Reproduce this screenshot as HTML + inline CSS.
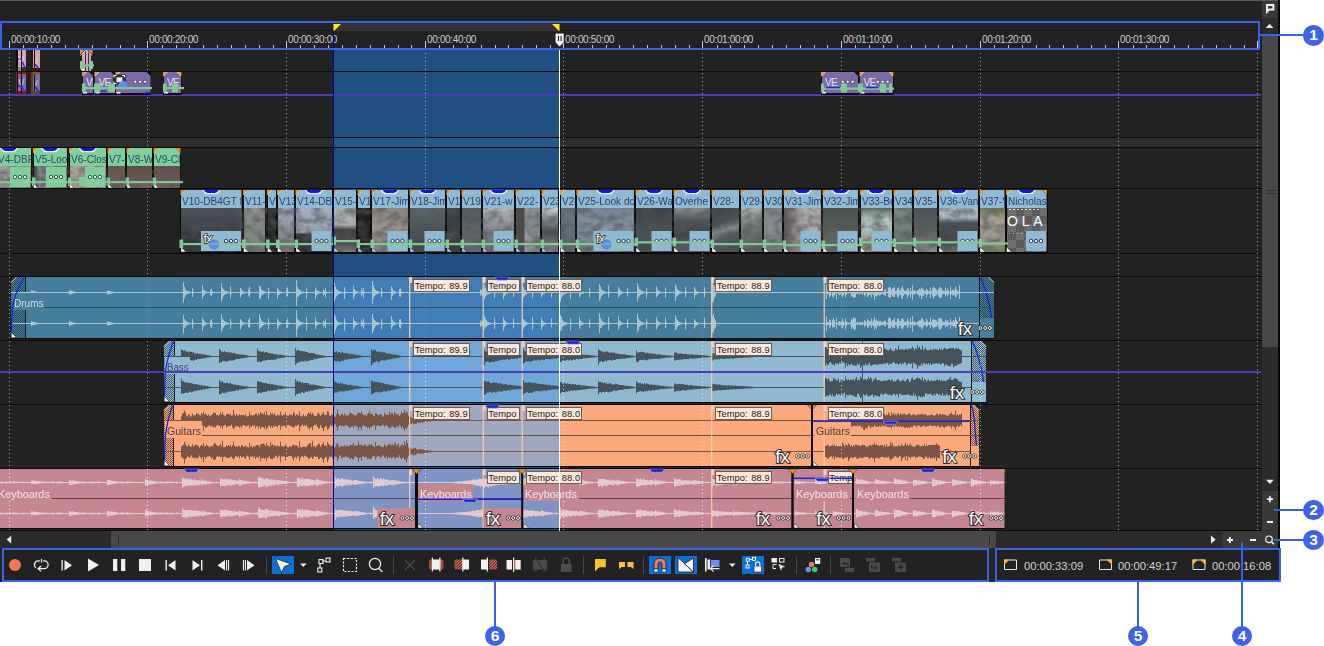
<!DOCTYPE html>
<html lang="en"><head><meta charset="utf-8"><title>Timeline</title><style>
html,body{margin:0;padding:0;background:#ffffff;}
body{width:1324px;height:646px;position:relative;overflow:hidden;font-family:"Liberation Sans",sans-serif;}
#tl{position:absolute;left:0;top:0;width:1261.5px;height:582px;overflow:hidden;}
.rl{position:absolute;font-size:10px;line-height:12px;color:#cdcdcd;white-space:nowrap;letter-spacing:-0.34px;}
.gl{position:absolute;top:49px;width:1px;height:482px;background:repeating-linear-gradient(180deg,rgba(255,255,255,.62) 0,rgba(255,255,255,.62) 1px,transparent 1px,transparent 4px);}
.vh{position:absolute;font-size:11px;line-height:22.6px;white-space:nowrap;overflow:hidden;box-sizing:border-box;padding:0 0 0 1.3px;}
.ph{position:absolute;background:#7a6ba7;color:#e6e0f4;font-size:10px;line-height:21px;letter-spacing:-0.6px;white-space:nowrap;overflow:hidden;box-sizing:border-box;padding:0 0 0 3.5px;}
.tp{position:absolute;top:0;height:11px;box-sizing:content-box;border:1px solid #6e5a50;background:#fbe8dc;color:#1c1c1c;font-size:9.3px;line-height:12.6px;white-space:nowrap;overflow:hidden;padding:0 0 0 0.7px;word-spacing:0.8px;letter-spacing:0.1px;}
.al{position:absolute;height:17px;font-size:11px;line-height:20.4px;white-space:nowrap;overflow:hidden;padding-left:1.5px;box-sizing:border-box;}
.sx{display:inline-block;transform-origin:0 50%;}
.tm{position:absolute;font-size:11.2px;line-height:14px;color:#d4d4d4;white-space:nowrap;}
.an{position:absolute;width:20.6px;height:20.6px;border-radius:50%;background:#3d63ec;color:#fff;font-weight:bold;font-size:15.5px;line-height:20.6px;text-align:center;}
</style></head><body>
<div style="position:absolute;left:0px;top:0px;width:1280px;height:582px;background:#222222;"></div>
<div style="position:absolute;left:0px;top:0px;width:1280px;height:1px;background:#5a5a5a;"></div>
<div style="position:absolute;left:0px;top:138px;width:1261px;height:9px;background:#2d2d2d;"></div>
<div style="position:absolute;left:334px;top:50px;width:225px;height:480px;background:#1f5081;"></div>
<div style="position:absolute;left:334px;top:138px;width:225px;height:9px;background:#245988;"></div>
<div style="position:absolute;left:1px;top:71px;width:1260px;height:1px;background:#0a0a0a;"></div>
<div style="position:absolute;left:1px;top:137px;width:1260px;height:1px;background:#0a0a0a;"></div>
<div style="position:absolute;left:1px;top:147px;width:1260px;height:1px;background:#0a0a0a;"></div>
<div style="position:absolute;left:1px;top:188px;width:1260px;height:1px;background:#0a0a0a;"></div>
<div style="position:absolute;left:1px;top:253px;width:1260px;height:1px;background:#0a0a0a;"></div>
<div style="position:absolute;left:1px;top:276px;width:1260px;height:1px;background:#0a0a0a;"></div>
<div style="position:absolute;left:1px;top:340px;width:1260px;height:1px;background:#0a0a0a;"></div>
<div style="position:absolute;left:1px;top:404px;width:1260px;height:1px;background:#0a0a0a;"></div>
<div style="position:absolute;left:1px;top:468px;width:1260px;height:1px;background:#0a0a0a;"></div>
<div style="position:absolute;left:1px;top:530px;width:1260px;height:1px;background:#0a0a0a;"></div>
<div style="position:absolute;left:0px;top:94px;width:1261px;height:2px;background:#4a3eb6;"></div>
<div id="tl"><div class="gl" style="left:9px;top:49px;height:482px"></div>
<div class="gl" style="left:147px;top:49px;height:482px"></div>
<div class="gl" style="left:286px;top:49px;height:482px"></div>
<div class="gl" style="left:425px;top:49px;height:482px"></div>
<div class="gl" style="left:563px;top:49px;height:482px"></div>
<div class="gl" style="left:702px;top:49px;height:482px"></div>
<div class="gl" style="left:841px;top:49px;height:482px"></div>
<div class="gl" style="left:980px;top:49px;height:482px"></div>
<div class="gl" style="left:1118px;top:49px;height:482px"></div>
<div class="gl" style="left:1257px;top:49px;height:482px"></div>
<div style="position:absolute;left:16px;top:50px;width:9.5px;height:20.5px;background:linear-gradient(90deg,#0a0a0a 0,#0a0a0a 1.6px,#3a3a3a 1.6px,#3a3a3a 2px,#d9a0ae 2px,#d9a0ae 5px,#0c0c0c 5px,#0c0c0c 6px,#d9a0ae 6px);"></div>
<div style="position:absolute;left:16px;top:67px;width:9.5px;height:3.5px;background:linear-gradient(90deg,#0a0a0a 0,#0a0a0a 2px,#8a8a8a 2px,#8a8a8a 5px,#0c0c0c 5px,#0c0c0c 6px,#3a3030 6px);"></div>
<div style="position:absolute;left:31px;top:50px;width:8.5px;height:20.5px;background:linear-gradient(90deg,#3a0c0e 0,#3a0c0e 1.6px,#d9a0ae 2px,#d9a0ae 3px,#0c0c0c 3px,#0c0c0c 4px,#d9a0ae 4px);"></div>
<div style="position:absolute;left:31px;top:67.5px;width:8.5px;height:3px;background:#3a1214;"></div>
<div style="position:absolute;left:80.5px;top:50px;width:11.5px;height:21px;background:linear-gradient(90deg,#1a1a1a 0,#1a1a1a 1px,#d9a0ae 1px,#d9a0ae 4px,#3a3034 4px,#3a3034 5px,#c4aec2 5px,#c4aec2 7px,#3a3034 7px,#3a3034 8px,#d9a0ae 8px,#d9a0ae 10.5px,#1a1a1a 10.5px);"></div>
<div style="position:absolute;left:16px;top:72px;width:9.5px;height:22px;background:linear-gradient(90deg,#9a1216 0,#9a1216 1.2px,#1a0a0a 1.2px,#1a0a0a 2px,#7a6ba7 2px,#7a6ba7 5px,#0c0c0c 5px,#0c0c0c 6px,#7a6ba7 6px);"></div>
<div style="position:absolute;left:18px;top:72px;width:7.5px;height:2px;background:linear-gradient(90deg,#8a1014 0,#8a1014 3px,#0c0c0c 3px,#0c0c0c 4px,#a01216 4px);"></div>
<div style="position:absolute;left:18px;top:90.5px;width:7.5px;height:3.5px;background:linear-gradient(90deg,#8a1014 0,#8a1014 3px,#0c0c0c 3px,#0c0c0c 4px,#a01216 4px);"></div>
<div style="position:absolute;left:31px;top:72px;width:8.5px;height:22px;background:linear-gradient(90deg,#6a4210 0,#6a4210 1.6px,#1a1208 1.6px,#1a1208 2px,#7a6ba7 2px,#7a6ba7 3px,#0c0c0c 3px,#0c0c0c 4px,#7a6ba7 4px);"></div>
<div style="position:absolute;left:33px;top:72px;width:6.5px;height:2px;background:#8a5a14;"></div>
<div style="position:absolute;left:33px;top:91px;width:6.5px;height:3px;background:#6a4210;"></div>
<div style="position:absolute;left:82px;top:72px;width:11.5px;height:22.5px;background:#1a0c0e;"></div>
<div class="ph" style="left:82.5px;top:72px;width:10.5px;height:21px;clip-path:polygon(4px 0,calc(100% - 4px) 0,100% 4px,100% 100%,0 100%,0 4px)">VE</div>
<div style="position:absolute;left:94.5px;top:72px;width:21px;height:22.5px;background:#1a0c0e;"></div>
<div class="ph" style="left:95px;top:72px;width:20px;height:21px;clip-path:polygon(4px 0,calc(100% - 4px) 0,100% 4px,100% 100%,0 100%,0 4px)">VE</div>
<div style="position:absolute;left:115.5px;top:72px;width:35.5px;height:22.5px;background:#1a0c0e;"></div>
<div class="ph" style="left:116px;top:72px;width:34.5px;height:21px;clip-path:polygon(4px 0,calc(100% - 4px) 0,100% 4px,100% 100%,0 100%,0 4px)"></div>
<div style="position:absolute;left:163px;top:72px;width:18.5px;height:22.5px;background:#1a0c0e;"></div>
<div class="ph" style="left:163.5px;top:72px;width:17.5px;height:21px;clip-path:polygon(4px 0,calc(100% - 4px) 0,100% 4px,100% 100%,0 100%,0 4px)">VE</div>
<div style="position:absolute;left:821px;top:72px;width:37.5px;height:22.5px;background:#1a0c0e;"></div>
<div class="ph" style="left:821.5px;top:72px;width:36.5px;height:21px;clip-path:polygon(4px 0,calc(100% - 4px) 0,100% 4px,100% 100%,0 100%,0 4px)">VE</div>
<div style="position:absolute;left:859.5px;top:72px;width:34px;height:22.5px;background:#1a0c0e;"></div>
<div class="ph" style="left:860px;top:72px;width:33px;height:21px;clip-path:polygon(4px 0,calc(100% - 4px) 0,100% 4px,100% 100%,0 100%,0 4px)">VE</div>
<svg style="position:absolute;left:0px;top:0px;" width="1262" height="140" viewBox="0 0 1262 140"><path d="M18,59 h3.2 l4,9.5" fill="none" stroke="#1a2ae0" stroke-width="1.3"/><path d="M35,64 l4,5" fill="none" stroke="#1a2ae0" stroke-width="1.3"/><path d="M19,56 l1.5,6 M24,56 l-1.5,6 M37.5,58 l-1.5,6" stroke="#f0d8e0" stroke-width="0.9" opacity="0.8"/><polygon points="79.5,49.5 86.2,49.5 79.5,56" fill="#222"/><polygon points="93,49.5 86.2,49.5 93,56" fill="#222"/><polygon points="80,50 84.5,50 80,54.5" fill="#f0921e"/><polygon points="92.5,50 88,50 92.5,54.5" fill="#f0921e"/><path d="M80.3,55.5 L86.2,50 L92.2,55.5" fill="none" stroke="#f0f0f0" stroke-width="0.8"/><rect x="80" y="61" width="3.6" height="8" fill="#86c79a"/><rect x="89" y="61" width="4" height="8" fill="#86c79a"/><rect x="80" y="64.3" width="14" height="2.2" fill="#86c79a"/><rect x="81" y="69" width="3.5" height="1.2" fill="#fff"/><path d="M18,86 h3.2 l4,6.5" fill="none" stroke="#1a2ae0" stroke-width="1.3"/><path d="M35,87 l4,5" fill="none" stroke="#1a2ae0" stroke-width="1.3"/><path d="M19,79 l1.5,6 M24,79 l-1.5,6 M37.5,80 l-1.5,6" stroke="#e8e0f4" stroke-width="0.9" opacity="0.8"/><polygon points="82,72 86.5,72 82,76.5" fill="#f0921e"/><path d="M82.5,76 L86.5,72" stroke="#f0f0f0" stroke-width="0.8"/><rect x="83" y="92" width="4" height="1.5" fill="#fff"/><polygon points="94.5,72 99,72 94.5,76.5" fill="#f0921e"/><path d="M95,76 L99,72" stroke="#f0f0f0" stroke-width="0.8"/><rect x="95.5" y="92" width="4" height="1.5" fill="#fff"/><polygon points="115.5,72 120,72 115.5,76.5" fill="#f0921e"/><path d="M116,76 L120,72" stroke="#f0f0f0" stroke-width="0.8"/><circle cx="135.3" cy="81.8" r="1.7" fill="#f2f2f2" stroke="#54487e" stroke-width="0.95"/><circle cx="140.2" cy="81.8" r="1.7" fill="#f2f2f2" stroke="#54487e" stroke-width="0.95"/><circle cx="145.1" cy="81.8" r="1.7" fill="#f2f2f2" stroke="#54487e" stroke-width="0.95"/><rect x="116.5" y="92" width="4" height="1.5" fill="#fff"/><polygon points="163,72 167.5,72 163,76.5" fill="#f0921e"/><path d="M163.5,76 L167.5,72" stroke="#f0f0f0" stroke-width="0.8"/><polygon points="181.5,72 177,72 181.5,76.5" fill="#f0921e"/><path d="M181,76 L177,72" stroke="#f0f0f0" stroke-width="0.8"/><rect x="164" y="92" width="4" height="1.5" fill="#fff"/><polygon points="821,72 825.5,72 821,76.5" fill="#f0921e"/><path d="M821.5,76 L825.5,72" stroke="#f0f0f0" stroke-width="0.8"/><circle cx="842.8" cy="81.8" r="1.7" fill="#f2f2f2" stroke="#54487e" stroke-width="0.95"/><circle cx="847.7" cy="81.8" r="1.7" fill="#f2f2f2" stroke="#54487e" stroke-width="0.95"/><circle cx="852.6" cy="81.8" r="1.7" fill="#f2f2f2" stroke="#54487e" stroke-width="0.95"/><rect x="822" y="92" width="4" height="1.5" fill="#fff"/><polygon points="859.5,72 864,72 859.5,76.5" fill="#f0921e"/><path d="M860,76 L864,72" stroke="#f0f0f0" stroke-width="0.8"/><polygon points="893.5,72 889,72 893.5,76.5" fill="#f0921e"/><path d="M893,76 L889,72" stroke="#f0f0f0" stroke-width="0.8"/><circle cx="877.8" cy="81.8" r="1.7" fill="#f2f2f2" stroke="#54487e" stroke-width="0.95"/><circle cx="882.7" cy="81.8" r="1.7" fill="#f2f2f2" stroke="#54487e" stroke-width="0.95"/><circle cx="887.6" cy="81.8" r="1.7" fill="#f2f2f2" stroke="#54487e" stroke-width="0.95"/><rect x="860.5" y="92" width="4" height="1.5" fill="#fff"/><rect x="112.8" y="74.5" width="13" height="10" fill="#26262c"/><path d="M114,77.5 v-2 h2.5 M122,75.5 h2.5 v2 M114,81.5 v2 h2.5 M124.500,81.5 v2 h-2.5" stroke="#fff" stroke-width="1.1" fill="none"/><rect x="116.5" y="77.3" width="6" height="5" fill="#f0f0f0"/><circle cx="123.1" cy="85.2" r="4.4" fill="#5e8ff0"/><rect x="82" y="83.5" width="3.5" height="9" fill="#86c79a"/><rect x="94" y="83.5" width="4" height="9" fill="#86c79a"/><rect x="97" y="83.5" width="4" height="9" fill="#86c79a"/><rect x="108" y="83.5" width="7" height="9" fill="#86c79a"/><rect x="82" y="87" width="70" height="2.2" fill="#86c79a"/><rect x="163" y="83.5" width="3.5" height="9" fill="#86c79a"/><rect x="172" y="83.5" width="6" height="9" fill="#86c79a"/><rect x="163" y="87" width="21" height="2.2" fill="#86c79a"/><rect x="821" y="83.5" width="3" height="9" fill="#86c79a"/><rect x="841" y="83.5" width="6" height="9" fill="#86c79a"/><rect x="858" y="83.5" width="5" height="9" fill="#86c79a"/><rect x="880" y="83.5" width="6" height="9" fill="#86c79a"/><rect x="889" y="83.5" width="3" height="9" fill="#86c79a"/><rect x="821" y="87.5" width="73" height="2.2" fill="#86c79a"/><rect x="100" y="90.5" width="6" height="1.3" fill="#1a2ae0"/><rect x="145" y="92" width="5" height="1.5" fill="#1a2ae0"/><rect x="826" y="87" width="14" height="1.3" fill="#1a2ae0"/><rect x="866" y="87" width="12" height="1.3" fill="#1a2ae0"/></svg>
<div style="position:absolute;left:-4px;top:148px;width:36px;height:40.5px;background:#0a0a0a;"></div>
<div style="position:absolute;left:-3px;top:166px;width:34px;height:22px;background:linear-gradient(180deg,#a4a79c,#8a8e86);"></div>
<div class="vh" style="left:-3px;top:148px;width:34px;height:18px;background:#7ed09a;color:#2a476c;clip-path:polygon(4.5px 0,100% 0,100% 100%,0 100%,0 4.5px)"><span class="sx" style="transform:scaleX(.915)">V4-DBF</span></div>
<div style="position:absolute;left:32.5px;top:148px;width:35.5px;height:40.5px;background:#0a0a0a;"></div>
<div style="position:absolute;left:33.5px;top:166px;width:33.5px;height:22px;background:linear-gradient(90deg,#3a3838 0,#8e8e8c 18%,#77797a 30%,#b7b5b3 45%,#6f6f6f 70%,#8e8b88);"></div>
<div class="vh" style="left:33.5px;top:148px;width:33.5px;height:18px;background:#7ed09a;color:#2a476c;clip-path:polygon(4.5px 0,100% 0,100% 100%,0 100%,0 4.5px)"><span class="sx" style="transform:scaleX(.915)">V5-Loo</span></div>
<div style="position:absolute;left:68.5px;top:148px;width:38.5px;height:40.5px;background:#0a0a0a;"></div>
<div style="position:absolute;left:69.5px;top:166px;width:36.5px;height:22px;background:linear-gradient(180deg,#b4a29c,#a4948c);"></div>
<div class="vh" style="left:69.5px;top:148px;width:36.5px;height:18px;background:#7ed09a;color:#2a476c;clip-path:polygon(4.5px 0,100% 0,100% 100%,0 100%,0 4.5px)"><span class="sx" style="transform:scaleX(.915)">V6-Clos</span></div>
<div style="position:absolute;left:107px;top:148px;width:19px;height:40.5px;background:#0a0a0a;"></div>
<div style="position:absolute;left:108px;top:166px;width:17px;height:22px;background:linear-gradient(180deg,#6a544c,#7c6458);"></div>
<div class="vh" style="left:108px;top:148px;width:17px;height:18px;background:#7ed09a;color:#2a476c;clip-path:polygon(4.5px 0,100% 0,100% 100%,0 100%,0 4.5px)"><span class="sx" style="transform:scaleX(.915)">V7-</span></div>
<div style="position:absolute;left:126px;top:148px;width:27px;height:40.5px;background:#0a0a0a;"></div>
<div style="position:absolute;left:127px;top:166px;width:25px;height:22px;background:linear-gradient(180deg,#5e4a42,#7a6256);"></div>
<div class="vh" style="left:127px;top:148px;width:25px;height:18px;background:#7ed09a;color:#2a476c;clip-path:polygon(4.5px 0,100% 0,100% 100%,0 100%,0 4.5px)"><span class="sx" style="transform:scaleX(.915)">V8-W</span></div>
<div style="position:absolute;left:153px;top:148px;width:28px;height:40.5px;background:#0a0a0a;"></div>
<div style="position:absolute;left:154px;top:166px;width:26px;height:22px;background:linear-gradient(180deg,#644e46,#76605a);"></div>
<div class="vh" style="left:154px;top:148px;width:26px;height:18px;background:#7ed09a;color:#2a476c;clip-path:polygon(4.5px 0,calc(100% - 4.5px) 0,100% 4.5px,100% 100%,0 100%,0 4.5px)"><span class="sx" style="transform:scaleX(.915)">V9-Cl</span></div>
<svg style="position:absolute;left:0px;top:166px;opacity:0.6" width="181" height="22"><filter id="nz2" x="0" y="0" width="100%" height="100%"><feTurbulence type="fractalNoise" baseFrequency="0.126 0.18" numOctaves="3" seed="9"/><feColorMatrix type="matrix" values="0 0 0 0 0.08  0 0 0 0 0.09  0 0 0 0 0.1  2.6 0 0 0 -0.95"/></filter><rect width="100%" height="100%" filter="url(#nz2)"/></svg>
<svg style="position:absolute;left:0px;top:0px;" width="1262" height="200" viewBox="0 0 1262 200"><polygon points="-3.5,148 1.5,148 -3.5,153" fill="#f0921e"/><path d="M-3.2,152.8 L1.7,147.9" stroke="#e8eef2" stroke-width="0.7"/><path d="M-0.5,148 h19 l-3.5,4.2 h-12 z" fill="#e4f2ea"/><path d="M1.5,148 h15 q-1.5,3 -4,3 h-7 q-2.5,0 -4,-3 z" fill="#0c18e2"/><rect x="10" y="167" width="20" height="20" fill="#7ed09a"/><circle cx="15.1" cy="177" r="1.7" fill="#f2faf4" stroke="#2a4e58" stroke-width="0.95"/><circle cx="20" cy="177" r="1.7" fill="#f2faf4" stroke="#2a4e58" stroke-width="0.95"/><circle cx="24.9" cy="177" r="1.7" fill="#f2faf4" stroke="#2a4e58" stroke-width="0.95"/><polygon points="33,148 38,148 33,153" fill="#f0921e"/><path d="M33.3,152.8 L38.2,147.9" stroke="#e8eef2" stroke-width="0.7"/><path d="M40.75,148 h19 l-3.5,4.2 h-12 z" fill="#e4f2ea"/><path d="M42.75,148 h15 q-1.5,3 -4,3 h-7 q-2.5,0 -4,-3 z" fill="#0c18e2"/><rect x="46" y="167" width="20" height="20" fill="#7ed09a"/><circle cx="51.1" cy="177" r="1.7" fill="#f2faf4" stroke="#2a4e58" stroke-width="0.95"/><circle cx="56" cy="177" r="1.7" fill="#f2faf4" stroke="#2a4e58" stroke-width="0.95"/><circle cx="60.9" cy="177" r="1.7" fill="#f2faf4" stroke="#2a4e58" stroke-width="0.95"/><rect x="32" y="177.5" width="3.5" height="8.5" fill="#86c79a"/><polygon points="33.5,183.5 33.5,188 38,188" fill="#fff" stroke="#111" stroke-width="0.4"/><polygon points="69,148 74,148 69,153" fill="#f0921e"/><path d="M69.3,152.8 L74.2,147.9" stroke="#e8eef2" stroke-width="0.7"/><path d="M78.25,148 h19 l-3.5,4.2 h-12 z" fill="#e4f2ea"/><path d="M80.25,148 h15 q-1.5,3 -4,3 h-7 q-2.5,0 -4,-3 z" fill="#0c18e2"/><rect x="85" y="167" width="20" height="20" fill="#7ed09a"/><circle cx="90.1" cy="177" r="1.7" fill="#f2faf4" stroke="#2a4e58" stroke-width="0.95"/><circle cx="95" cy="177" r="1.7" fill="#f2faf4" stroke="#2a4e58" stroke-width="0.95"/><circle cx="99.9" cy="177" r="1.7" fill="#f2faf4" stroke="#2a4e58" stroke-width="0.95"/><rect x="68" y="177.5" width="3.5" height="8.5" fill="#86c79a"/><polygon points="69.5,183.5 69.5,188 74,188" fill="#fff" stroke="#111" stroke-width="0.4"/><polygon points="107.5,148 112.5,148 107.5,153" fill="#f0921e"/><path d="M107.8,152.8 L112.7,147.9" stroke="#e8eef2" stroke-width="0.7"/><rect x="106.5" y="177.5" width="3.5" height="8.5" fill="#86c79a"/><polygon points="108,183.5 108,188 112.5,188" fill="#fff" stroke="#111" stroke-width="0.4"/><polygon points="126.5,148 131.5,148 126.5,153" fill="#f0921e"/><path d="M126.8,152.8 L131.7,147.9" stroke="#e8eef2" stroke-width="0.7"/><rect x="125.5" y="177.5" width="3.5" height="8.5" fill="#86c79a"/><polygon points="127,183.5 127,188 131.5,188" fill="#fff" stroke="#111" stroke-width="0.4"/><polygon points="153.5,148 158.5,148 153.5,153" fill="#f0921e"/><path d="M153.8,152.8 L158.7,147.9" stroke="#e8eef2" stroke-width="0.7"/><polygon points="180.5,148 175.5,148 180.5,153" fill="#f0921e"/><rect x="152.5" y="177.5" width="3.5" height="8.5" fill="#86c79a"/><polygon points="154,183.5 154,188 158.5,188" fill="#fff" stroke="#111" stroke-width="0.4"/><rect x="0" y="181" width="183" height="2.2" fill="#88c99b" opacity="0.92"/><rect x="79" y="177" width="6.5" height="9" fill="#86c79a"/></svg>
<div style="position:absolute;left:180px;top:190px;width:62.5px;height:62.5px;background:#0a0a0a;"></div>
<div style="position:absolute;left:181px;top:208px;width:60.5px;height:44px;background:linear-gradient(180deg,#4a4f56,#3a3e44 55%,#2c2f33);"></div>
<div class="vh" style="left:181px;top:190px;width:60.5px;height:18px;background:#8fbad3;color:#2b3f6e;clip-path:polygon(4.5px 0,100% 0,100% 100%,0 100%,0 4.5px)"><span class="sx" style="transform:scaleX(.915)">V10-DB4GT f</span></div>
<div style="position:absolute;left:242.5px;top:190px;width:23.5px;height:62.5px;background:#0a0a0a;"></div>
<div style="position:absolute;left:243.5px;top:208px;width:21.5px;height:44px;background:linear-gradient(180deg,#8f908c,#858b82 55%,#7e7f7a);"></div>
<div class="vh" style="left:243.5px;top:190px;width:21.5px;height:18px;background:#8fbad3;color:#2b3f6e;clip-path:polygon(4.5px 0,100% 0,100% 100%,0 100%,0 4.5px)"><span class="sx" style="transform:scaleX(.915)">V11-</span></div>
<div style="position:absolute;left:266.5px;top:190px;width:10.5px;height:62.5px;background:#0a0a0a;"></div>
<div style="position:absolute;left:267.5px;top:208px;width:8.5px;height:44px;background:#2b2b2b;"></div>
<div class="vh" style="left:267.5px;top:190px;width:8.5px;height:18px;background:#8fbad3;color:#2b3f6e;clip-path:polygon(4.5px 0,100% 0,100% 100%,0 100%,0 4.5px)"><span class="sx" style="transform:scaleX(.915)">V</span></div>
<div style="position:absolute;left:276.5px;top:190px;width:18.5px;height:62.5px;background:#0a0a0a;"></div>
<div style="position:absolute;left:277.5px;top:208px;width:16.5px;height:44px;background:linear-gradient(180deg,#9ea5b6,#8e909a 55%,#7a6e6c);"></div>
<div class="vh" style="left:277.5px;top:190px;width:16.5px;height:18px;background:#8fbad3;color:#2b3f6e;clip-path:polygon(4.5px 0,100% 0,100% 100%,0 100%,0 4.5px)"><span class="sx" style="transform:scaleX(.915)">V13</span></div>
<div style="position:absolute;left:295px;top:190px;width:38px;height:62.5px;background:#0a0a0a;"></div>
<div style="position:absolute;left:296px;top:208px;width:36px;height:44px;background:linear-gradient(180deg,#a6adbd,#9aa0ae 55%,#33363b 60%,#2b2d31);"></div>
<div class="vh" style="left:296px;top:190px;width:36px;height:18px;background:#8fbad3;color:#2b3f6e;clip-path:polygon(4.5px 0,100% 0,100% 100%,0 100%,0 4.5px)"><span class="sx" style="transform:scaleX(.915)">V14-DB</span></div>
<div style="position:absolute;left:333px;top:190px;width:24px;height:62.5px;background:#0a0a0a;"></div>
<div style="position:absolute;left:334px;top:208px;width:22px;height:44px;background:linear-gradient(180deg,#b4b8b8,#aaaeae 38%,#3e403e 50%,#4c4a46 80%,#8a7a74);"></div>
<div class="vh" style="left:334px;top:190px;width:22px;height:18px;background:#8fbad3;color:#2b3f6e;clip-path:polygon(4.5px 0,100% 0,100% 100%,0 100%,0 4.5px)"><span class="sx" style="transform:scaleX(.915)">V15-</span></div>
<div style="position:absolute;left:357px;top:190px;width:14px;height:62.5px;background:#0a0a0a;"></div>
<div style="position:absolute;left:358px;top:208px;width:12px;height:44px;background:#1f1f1f;"></div>
<div class="vh" style="left:358px;top:190px;width:12px;height:18px;background:#8fbad3;color:#2b3f6e;clip-path:polygon(4.5px 0,100% 0,100% 100%,0 100%,0 4.5px)"><span class="sx" style="transform:scaleX(.915)">V1</span></div>
<div style="position:absolute;left:371px;top:190px;width:38px;height:62.5px;background:#0a0a0a;"></div>
<div style="position:absolute;left:372px;top:208px;width:36px;height:44px;background:linear-gradient(180deg,#8e8682,#a09692 55%,#8c8a8a);"></div>
<div class="vh" style="left:372px;top:190px;width:36px;height:18px;background:#8fbad3;color:#2b3f6e;clip-path:polygon(4.5px 0,100% 0,100% 100%,0 100%,0 4.5px)"><span class="sx" style="transform:scaleX(.915)">V17-Jim</span></div>
<div style="position:absolute;left:409px;top:190px;width:37px;height:62.5px;background:#0a0a0a;"></div>
<div style="position:absolute;left:410px;top:208px;width:35px;height:44px;background:linear-gradient(180deg,#5e6868,#4a5052 55%,#42474a);"></div>
<div class="vh" style="left:410px;top:190px;width:35px;height:18px;background:#8fbad3;color:#2b3f6e;clip-path:polygon(4.5px 0,100% 0,100% 100%,0 100%,0 4.5px)"><span class="sx" style="transform:scaleX(.915)">V18-Jim</span></div>
<div style="position:absolute;left:446px;top:190px;width:15px;height:62.5px;background:#0a0a0a;"></div>
<div style="position:absolute;left:447px;top:208px;width:13px;height:44px;background:#3a3d3e;"></div>
<div class="vh" style="left:447px;top:190px;width:13px;height:18px;background:#8fbad3;color:#2b3f6e;clip-path:polygon(4.5px 0,100% 0,100% 100%,0 100%,0 4.5px)"><span class="sx" style="transform:scaleX(.915)">V1</span></div>
<div style="position:absolute;left:461px;top:190px;width:21px;height:62.5px;background:#0a0a0a;"></div>
<div style="position:absolute;left:462px;top:208px;width:19px;height:44px;background:linear-gradient(180deg,#5a5e60,#64686c);"></div>
<div class="vh" style="left:462px;top:190px;width:19px;height:18px;background:#8fbad3;color:#2b3f6e;clip-path:polygon(4.5px 0,100% 0,100% 100%,0 100%,0 4.5px)"><span class="sx" style="transform:scaleX(.915)">V19</span></div>
<div style="position:absolute;left:482px;top:190px;width:33px;height:62.5px;background:#0a0a0a;"></div>
<div style="position:absolute;left:483px;top:208px;width:31px;height:44px;background:linear-gradient(180deg,#b4b6b8,#7e8286 55%,#6a6e72);"></div>
<div class="vh" style="left:483px;top:190px;width:31px;height:18px;background:#8fbad3;color:#2b3f6e;clip-path:polygon(4.5px 0,100% 0,100% 100%,0 100%,0 4.5px)"><span class="sx" style="transform:scaleX(.915)">V21-w</span></div>
<div style="position:absolute;left:515px;top:190px;width:26px;height:62.5px;background:#0a0a0a;"></div>
<div style="position:absolute;left:516px;top:208px;width:24px;height:44px;background:linear-gradient(90deg,#4a4a48 0,#4a4a48 35%,#9a9da0 36%,#83868a);"></div>
<div class="vh" style="left:516px;top:190px;width:24px;height:18px;background:#8fbad3;color:#2b3f6e;clip-path:polygon(4.5px 0,100% 0,100% 100%,0 100%,0 4.5px)"><span class="sx" style="transform:scaleX(.915)">V22-</span></div>
<div style="position:absolute;left:541px;top:190px;width:18px;height:62.5px;background:#0a0a0a;"></div>
<div style="position:absolute;left:542px;top:208px;width:16px;height:44px;background:linear-gradient(180deg,#c8cbce,#4a4d50 55%,#8a8d90);"></div>
<div class="vh" style="left:542px;top:190px;width:16px;height:18px;background:#8fbad3;color:#2b3f6e;clip-path:polygon(4.5px 0,100% 0,100% 100%,0 100%,0 4.5px)"><span class="sx" style="transform:scaleX(.915)">V23</span></div>
<div style="position:absolute;left:559.5px;top:190px;width:16.5px;height:62.5px;background:#0a0a0a;"></div>
<div style="position:absolute;left:560.5px;top:208px;width:14.5px;height:44px;background:linear-gradient(180deg,#6e777e,#5d656c);"></div>
<div class="vh" style="left:560.5px;top:190px;width:14.5px;height:18px;background:#8fbad3;color:#2b3f6e;clip-path:polygon(4.5px 0,100% 0,100% 100%,0 100%,0 4.5px)"><span class="sx" style="transform:scaleX(.915)">V24</span></div>
<div style="position:absolute;left:576px;top:190px;width:59px;height:62.5px;background:#0a0a0a;"></div>
<div style="position:absolute;left:577px;top:208px;width:57px;height:44px;background:linear-gradient(180deg,#78858f,#8796a3 55%,#6c7882);"></div>
<div class="vh" style="left:577px;top:190px;width:57px;height:18px;background:#8fbad3;color:#2b3f6e;clip-path:polygon(4.5px 0,100% 0,100% 100%,0 100%,0 4.5px)"><span class="sx" style="transform:scaleX(.915)">V25-Look dc</span></div>
<div style="position:absolute;left:635px;top:190px;width:38px;height:62.5px;background:#0a0a0a;"></div>
<div style="position:absolute;left:636px;top:208px;width:36px;height:44px;background:linear-gradient(180deg,#3b4140,#4a5152 55%,#43484a);"></div>
<div class="vh" style="left:636px;top:190px;width:36px;height:18px;background:#8fbad3;color:#2b3f6e;clip-path:polygon(4.5px 0,100% 0,100% 100%,0 100%,0 4.5px)"><span class="sx" style="transform:scaleX(.915)">V26-Wa</span></div>
<div style="position:absolute;left:673px;top:190px;width:38px;height:62.5px;background:#0a0a0a;"></div>
<div style="position:absolute;left:674px;top:208px;width:36px;height:44px;background:linear-gradient(180deg,#8a9090 0,#4b5254 30%,#3e4446 60%,#5d6466);"></div>
<div class="vh" style="left:674px;top:190px;width:36px;height:18px;background:#8fbad3;color:#2b3f6e;clip-path:polygon(4.5px 0,100% 0,100% 100%,0 100%,0 4.5px)"><span class="sx" style="transform:scaleX(.915)">Overhe</span></div>
<div style="position:absolute;left:711px;top:190px;width:29px;height:62.5px;background:#0a0a0a;"></div>
<div style="position:absolute;left:712px;top:208px;width:27px;height:44px;background:linear-gradient(160deg,#3c3e40 0,#4e5052 35%,#8a8e90 50%,#55585a 65%,#4a4c4e);"></div>
<div class="vh" style="left:712px;top:190px;width:27px;height:18px;background:#8fbad3;color:#2b3f6e;clip-path:polygon(4.5px 0,100% 0,100% 100%,0 100%,0 4.5px)"><span class="sx" style="transform:scaleX(.915)">V28-</span></div>
<div style="position:absolute;left:740px;top:190px;width:23px;height:62.5px;background:#0a0a0a;"></div>
<div style="position:absolute;left:741px;top:208px;width:21px;height:44px;background:linear-gradient(160deg,#c0c4c4 0,#8e9492 25%,#6c716f 55%,#5a5e5c);"></div>
<div class="vh" style="left:741px;top:190px;width:21px;height:18px;background:#8fbad3;color:#2b3f6e;clip-path:polygon(4.5px 0,100% 0,100% 100%,0 100%,0 4.5px)"><span class="sx" style="transform:scaleX(.915)">V29-</span></div>
<div style="position:absolute;left:763px;top:190px;width:20px;height:62.5px;background:#0a0a0a;"></div>
<div style="position:absolute;left:764px;top:208px;width:18px;height:44px;background:linear-gradient(180deg,#7d8484,#8a9090 55%,#6d7272);"></div>
<div class="vh" style="left:764px;top:190px;width:18px;height:18px;background:#8fbad3;color:#2b3f6e;clip-path:polygon(4.5px 0,100% 0,100% 100%,0 100%,0 4.5px)"><span class="sx" style="transform:scaleX(.915)">V30</span></div>
<div style="position:absolute;left:783px;top:190px;width:39px;height:62.5px;background:#0a0a0a;"></div>
<div style="position:absolute;left:784px;top:208px;width:37px;height:44px;background:linear-gradient(90deg,#5e5550 0,#8b8484 28%,#b4b2b4 60%,#a8a6a8);"></div>
<div class="vh" style="left:784px;top:190px;width:37px;height:18px;background:#8fbad3;color:#2b3f6e;clip-path:polygon(4.5px 0,100% 0,100% 100%,0 100%,0 4.5px)"><span class="sx" style="transform:scaleX(.915)">V31-Jim</span></div>
<div style="position:absolute;left:822px;top:190px;width:37px;height:62.5px;background:#0a0a0a;"></div>
<div style="position:absolute;left:823px;top:208px;width:35px;height:44px;background:linear-gradient(180deg,#48504a,#59625c 55%,#707672);"></div>
<div class="vh" style="left:823px;top:190px;width:35px;height:18px;background:#8fbad3;color:#2b3f6e;clip-path:polygon(4.5px 0,100% 0,100% 100%,0 100%,0 4.5px)"><span class="sx" style="transform:scaleX(.915)">V32-Jim</span></div>
<div style="position:absolute;left:859.5px;top:190px;width:33.5px;height:62.5px;background:#0a0a0a;"></div>
<div style="position:absolute;left:860.5px;top:208px;width:31.5px;height:44px;background:linear-gradient(180deg,#5a6a66 0,#b4c6c0 25%,#a9bab4 55%,#a1977f 75%,#8e8a74);"></div>
<div class="vh" style="left:860.5px;top:190px;width:31.5px;height:18px;background:#8fbad3;color:#2b3f6e;clip-path:polygon(4.5px 0,100% 0,100% 100%,0 100%,0 4.5px)"><span class="sx" style="transform:scaleX(.915)">V33-Bu</span></div>
<div style="position:absolute;left:893px;top:190px;width:20px;height:62.5px;background:#0a0a0a;"></div>
<div style="position:absolute;left:894px;top:208px;width:18px;height:44px;background:linear-gradient(180deg,#7d8682,#6d7672);"></div>
<div class="vh" style="left:894px;top:190px;width:18px;height:18px;background:#8fbad3;color:#2b3f6e;clip-path:polygon(4.5px 0,100% 0,100% 100%,0 100%,0 4.5px)"><span class="sx" style="transform:scaleX(.915)">V34</span></div>
<div style="position:absolute;left:913px;top:190px;width:25px;height:62.5px;background:#0a0a0a;"></div>
<div style="position:absolute;left:914px;top:208px;width:23px;height:44px;background:linear-gradient(180deg,#4d5252,#5d6262 55%,#8a8e8e);"></div>
<div class="vh" style="left:914px;top:190px;width:23px;height:18px;background:#8fbad3;color:#2b3f6e;clip-path:polygon(4.5px 0,100% 0,100% 100%,0 100%,0 4.5px)"><span class="sx" style="transform:scaleX(.915)">V35-</span></div>
<div style="position:absolute;left:938px;top:190px;width:41px;height:62.5px;background:#0a0a0a;"></div>
<div style="position:absolute;left:939px;top:208px;width:39px;height:44px;background:linear-gradient(180deg,#b6bec6 0,#a9b1b9 22%,#4a4f55 34%,#3e4246 70%,#6a6e70);"></div>
<div class="vh" style="left:939px;top:190px;width:39px;height:18px;background:#8fbad3;color:#2b3f6e;clip-path:polygon(4.5px 0,100% 0,100% 100%,0 100%,0 4.5px)"><span class="sx" style="transform:scaleX(.915)">V36-Van</span></div>
<div style="position:absolute;left:979px;top:190px;width:26.5px;height:62.5px;background:#0a0a0a;"></div>
<div style="position:absolute;left:980px;top:208px;width:24.5px;height:44px;background:linear-gradient(180deg,#6f7a55 0,#7c8260 8%,#a59c8e 22%,#a8a092 70%,#8e8d78 86%,#6f7a55);"></div>
<div class="vh" style="left:980px;top:190px;width:24.5px;height:18px;background:#8fbad3;color:#2b3f6e;clip-path:polygon(4.5px 0,100% 0,100% 100%,0 100%,0 4.5px)"><span class="sx" style="transform:scaleX(.915)">V37-V</span></div>
<div style="position:absolute;left:1005.5px;top:190px;width:42px;height:62.5px;background:#0a0a0a;"></div>
<div style="position:absolute;left:1006.5px;top:208px;width:40px;height:44px;background:repeating-conic-gradient(#5c5c5c 0 25%,#6e6e6e 0 50%) 1px 0/16px 16px;"></div>
<div class="vh" style="left:1006.5px;top:190px;width:40px;height:18px;background:#8fbad3;color:#2b3f6e;clip-path:polygon(4.5px 0,calc(100% - 4.5px) 0,100% 4.5px,100% 100%,0 100%,0 4.5px)"><span class="sx" style="transform:scaleX(.915)">Nicholas</span></div>
<svg style="position:absolute;left:181px;top:208px;opacity:0.6" width="824" height="44"><filter id="nz1" x="0" y="0" width="100%" height="100%"><feTurbulence type="fractalNoise" baseFrequency="0.091 0.13" numOctaves="3" seed="5"/><feColorMatrix type="matrix" values="0 0 0 0 0.08  0 0 0 0 0.09  0 0 0 0 0.1  2.6 0 0 0 -0.95"/></filter><rect width="100%" height="100%" filter="url(#nz1)"/></svg>
<svg style="position:absolute;left:0px;top:0px;" width="1262" height="260" viewBox="0 0 1262 260"><polygon points="180.5,190 185.5,190 180.5,195" fill="#f0921e"/><path d="M180.8,194.8 L185.7,189.9" stroke="#e8eef2" stroke-width="0.7"/><path d="M201.75,190 h19 l-3.5,4.2 h-12 z" fill="#e4ecf2"/><path d="M203.75,190 h15 q-1.5,3 -4,3 h-7 q-2.5,0 -4,-3 z" fill="#0c18e2"/><rect x="201" y="231" width="40" height="20" fill="#8fbad3"/><circle cx="226.1" cy="241" r="1.7" fill="#f2f6fa" stroke="#22305a" stroke-width="0.95"/><circle cx="231" cy="241" r="1.7" fill="#f2f6fa" stroke="#22305a" stroke-width="0.95"/><circle cx="235.9" cy="241" r="1.7" fill="#f2f6fa" stroke="#22305a" stroke-width="0.95"/><polygon points="181,247 181,252 186,252" fill="#ffffff" stroke="#111" stroke-width="0.4"/><rect x="179.5" y="239.5" width="3.6" height="8.5" fill="#86c79a"/><rect x="181" y="243" width="62.5" height="2.2" fill="#86c79a"/><polygon points="243,190 248,190 243,195" fill="#f0921e"/><path d="M243.3,194.8 L248.2,189.9" stroke="#e8eef2" stroke-width="0.7"/><polygon points="243.5,247 243.5,252 248.5,252" fill="#ffffff" stroke="#111" stroke-width="0.4"/><rect x="242" y="239.5" width="3.6" height="8.5" fill="#86c79a"/><rect x="243.5" y="243" width="24" height="2.2" fill="#86c79a"/><polygon points="267,190 272,190 267,195" fill="#f0921e"/><path d="M267.3,194.8 L272.2,189.9" stroke="#e8eef2" stroke-width="0.7"/><polygon points="267.5,247 267.5,252 272.5,252" fill="#ffffff" stroke="#111" stroke-width="0.4"/><rect x="266" y="239.5" width="3.6" height="8.5" fill="#86c79a"/><rect x="267.5" y="243" width="10" height="2.2" fill="#86c79a"/><polygon points="277,190 282,190 277,195" fill="#f0921e"/><path d="M277.3,194.8 L282.2,189.9" stroke="#e8eef2" stroke-width="0.7"/><polygon points="277.5,247 277.5,252 282.5,252" fill="#ffffff" stroke="#111" stroke-width="0.4"/><rect x="276" y="239.5" width="3.6" height="8.5" fill="#86c79a"/><rect x="277.5" y="243" width="18.5" height="2.2" fill="#86c79a"/><polygon points="295.5,190 300.5,190 295.5,195" fill="#f0921e"/><path d="M295.8,194.8 L300.7,189.9" stroke="#e8eef2" stroke-width="0.7"/><path d="M304.5,190 h19 l-3.5,4.2 h-12 z" fill="#e4ecf2"/><path d="M306.5,190 h15 q-1.5,3 -4,3 h-7 q-2.5,0 -4,-3 z" fill="#0c18e2"/><rect x="311.5" y="231" width="20" height="20" fill="#8fbad3"/><circle cx="316.6" cy="241" r="1.7" fill="#f2f6fa" stroke="#22305a" stroke-width="0.95"/><circle cx="321.5" cy="241" r="1.7" fill="#f2f6fa" stroke="#22305a" stroke-width="0.95"/><circle cx="326.4" cy="241" r="1.7" fill="#f2f6fa" stroke="#22305a" stroke-width="0.95"/><polygon points="296,247 296,252 301,252" fill="#ffffff" stroke="#111" stroke-width="0.4"/><rect x="294.5" y="239.5" width="3.6" height="8.5" fill="#86c79a"/><rect x="296" y="243" width="38" height="2.2" fill="#86c79a"/><polygon points="333.5,190 338.5,190 333.5,195" fill="#f0921e"/><path d="M333.8,194.8 L338.7,189.9" stroke="#e8eef2" stroke-width="0.7"/><polygon points="334,247 334,252 339,252" fill="#a6d4ff" stroke="#111" stroke-width="0.4"/><rect x="332.5" y="236.5" width="3.6" height="8.5" fill="#86c79a"/><rect x="334" y="240" width="24" height="2.2" fill="#86c79a"/><polygon points="357.5,190 362.5,190 357.5,195" fill="#f0921e"/><path d="M357.8,194.8 L362.7,189.9" stroke="#e8eef2" stroke-width="0.7"/><polygon points="358,247 358,252 363,252" fill="#a6d4ff" stroke="#111" stroke-width="0.4"/><rect x="356.5" y="239.5" width="3.6" height="8.5" fill="#86c79a"/><rect x="358" y="243" width="14" height="2.2" fill="#86c79a"/><polygon points="371.5,190 376.5,190 371.5,195" fill="#f0921e"/><path d="M371.8,194.8 L376.7,189.9" stroke="#e8eef2" stroke-width="0.7"/><path d="M380.5,190 h19 l-3.5,4.2 h-12 z" fill="#e4ecf2"/><path d="M382.5,190 h15 q-1.5,3 -4,3 h-7 q-2.5,0 -4,-3 z" fill="#0c18e2"/><rect x="387.5" y="231" width="20" height="20" fill="#8fbad3"/><circle cx="392.6" cy="241" r="1.7" fill="#f2f6fa" stroke="#22305a" stroke-width="0.95"/><circle cx="397.5" cy="241" r="1.7" fill="#f2f6fa" stroke="#22305a" stroke-width="0.95"/><circle cx="402.4" cy="241" r="1.7" fill="#f2f6fa" stroke="#22305a" stroke-width="0.95"/><polygon points="372,247 372,252 377,252" fill="#a6d4ff" stroke="#111" stroke-width="0.4"/><rect x="370.5" y="239.5" width="3.6" height="8.5" fill="#86c79a"/><rect x="372" y="243" width="38" height="2.2" fill="#86c79a"/><polygon points="409.5,190 414.5,190 409.5,195" fill="#f0921e"/><path d="M409.8,194.8 L414.7,189.9" stroke="#e8eef2" stroke-width="0.7"/><path d="M418,190 h19 l-3.5,4.2 h-12 z" fill="#e4ecf2"/><path d="M420,190 h15 q-1.5,3 -4,3 h-7 q-2.5,0 -4,-3 z" fill="#0c18e2"/><rect x="424.5" y="231" width="20" height="20" fill="#8fbad3"/><circle cx="429.6" cy="241" r="1.7" fill="#f2f6fa" stroke="#22305a" stroke-width="0.95"/><circle cx="434.5" cy="241" r="1.7" fill="#f2f6fa" stroke="#22305a" stroke-width="0.95"/><circle cx="439.4" cy="241" r="1.7" fill="#f2f6fa" stroke="#22305a" stroke-width="0.95"/><polygon points="410,247 410,252 415,252" fill="#a6d4ff" stroke="#111" stroke-width="0.4"/><rect x="408.5" y="239.5" width="3.6" height="8.5" fill="#86c79a"/><rect x="410" y="243" width="37" height="2.2" fill="#86c79a"/><polygon points="446.5,190 451.5,190 446.5,195" fill="#f0921e"/><path d="M446.8,194.8 L451.7,189.9" stroke="#e8eef2" stroke-width="0.7"/><polygon points="447,247 447,252 452,252" fill="#a6d4ff" stroke="#111" stroke-width="0.4"/><rect x="445.5" y="239.5" width="3.6" height="8.5" fill="#86c79a"/><rect x="447" y="243" width="15" height="2.2" fill="#86c79a"/><polygon points="461.5,190 466.5,190 461.5,195" fill="#f0921e"/><path d="M461.8,194.8 L466.7,189.9" stroke="#e8eef2" stroke-width="0.7"/><polygon points="462,247 462,252 467,252" fill="#a6d4ff" stroke="#111" stroke-width="0.4"/><rect x="460.5" y="239.5" width="3.6" height="8.5" fill="#86c79a"/><rect x="462" y="243" width="21" height="2.2" fill="#86c79a"/><polygon points="482.5,190 487.5,190 482.5,195" fill="#f0921e"/><path d="M482.8,194.8 L487.7,189.9" stroke="#e8eef2" stroke-width="0.7"/><path d="M489,190 h19 l-3.5,4.2 h-12 z" fill="#e4ecf2"/><path d="M491,190 h15 q-1.5,3 -4,3 h-7 q-2.5,0 -4,-3 z" fill="#0c18e2"/><rect x="493.5" y="231" width="20" height="20" fill="#8fbad3"/><circle cx="498.6" cy="241" r="1.7" fill="#f2f6fa" stroke="#22305a" stroke-width="0.95"/><circle cx="503.5" cy="241" r="1.7" fill="#f2f6fa" stroke="#22305a" stroke-width="0.95"/><circle cx="508.4" cy="241" r="1.7" fill="#f2f6fa" stroke="#22305a" stroke-width="0.95"/><polygon points="483,247 483,252 488,252" fill="#a6d4ff" stroke="#111" stroke-width="0.4"/><rect x="481.5" y="239.5" width="3.6" height="8.5" fill="#86c79a"/><rect x="483" y="243" width="33" height="2.2" fill="#86c79a"/><polygon points="515.5,190 520.5,190 515.5,195" fill="#f0921e"/><path d="M515.8,194.8 L520.7,189.9" stroke="#e8eef2" stroke-width="0.7"/><polygon points="516,247 516,252 521,252" fill="#a6d4ff" stroke="#111" stroke-width="0.4"/><rect x="514.5" y="239.5" width="3.6" height="8.5" fill="#86c79a"/><rect x="516" y="243" width="26" height="2.2" fill="#86c79a"/><polygon points="541.5,190 546.5,190 541.5,195" fill="#f0921e"/><path d="M541.8,194.8 L546.7,189.9" stroke="#e8eef2" stroke-width="0.7"/><polygon points="542,247 542,252 547,252" fill="#a6d4ff" stroke="#111" stroke-width="0.4"/><rect x="540.5" y="239.5" width="3.6" height="8.5" fill="#86c79a"/><rect x="542" y="243" width="18.5" height="2.2" fill="#86c79a"/><polygon points="560,190 565,190 560,195" fill="#f0921e"/><path d="M560.3,194.8 L565.2,189.9" stroke="#e8eef2" stroke-width="0.7"/><polygon points="560.5,247 560.5,252 565.5,252" fill="#ffffff" stroke="#111" stroke-width="0.4"/><rect x="559" y="239.5" width="3.6" height="8.5" fill="#86c79a"/><rect x="560.5" y="243" width="16.5" height="2.2" fill="#86c79a"/><polygon points="576.5,190 581.5,190 576.5,195" fill="#f0921e"/><path d="M576.8,194.8 L581.7,189.9" stroke="#e8eef2" stroke-width="0.7"/><path d="M596,190 h19 l-3.5,4.2 h-12 z" fill="#e4ecf2"/><path d="M598,190 h15 q-1.5,3 -4,3 h-7 q-2.5,0 -4,-3 z" fill="#0c18e2"/><rect x="593.5" y="231" width="40" height="20" fill="#8fbad3"/><circle cx="618.6" cy="241" r="1.7" fill="#f2f6fa" stroke="#22305a" stroke-width="0.95"/><circle cx="623.5" cy="241" r="1.7" fill="#f2f6fa" stroke="#22305a" stroke-width="0.95"/><circle cx="628.4" cy="241" r="1.7" fill="#f2f6fa" stroke="#22305a" stroke-width="0.95"/><polygon points="577,247 577,252 582,252" fill="#ffffff" stroke="#111" stroke-width="0.4"/><rect x="575.5" y="239.5" width="3.6" height="8.5" fill="#86c79a"/><rect x="577" y="243" width="59" height="2.2" fill="#86c79a"/><polygon points="635.5,190 640.5,190 635.5,195" fill="#f0921e"/><path d="M635.8,194.8 L640.7,189.9" stroke="#e8eef2" stroke-width="0.7"/><path d="M644.5,190 h19 l-3.5,4.2 h-12 z" fill="#e4ecf2"/><path d="M646.5,190 h15 q-1.5,3 -4,3 h-7 q-2.5,0 -4,-3 z" fill="#0c18e2"/><rect x="651.5" y="231" width="20" height="20" fill="#8fbad3"/><circle cx="656.6" cy="241" r="1.7" fill="#f2f6fa" stroke="#22305a" stroke-width="0.95"/><circle cx="661.5" cy="241" r="1.7" fill="#f2f6fa" stroke="#22305a" stroke-width="0.95"/><circle cx="666.4" cy="241" r="1.7" fill="#f2f6fa" stroke="#22305a" stroke-width="0.95"/><polygon points="636,247 636,252 641,252" fill="#ffffff" stroke="#111" stroke-width="0.4"/><rect x="634.5" y="237.7" width="3.6" height="8.5" fill="#86c79a"/><rect x="636" y="241.2" width="38" height="2.2" fill="#86c79a"/><polygon points="673.5,190 678.5,190 673.5,195" fill="#f0921e"/><path d="M673.8,194.8 L678.7,189.9" stroke="#e8eef2" stroke-width="0.7"/><path d="M682.5,190 h19 l-3.5,4.2 h-12 z" fill="#e4ecf2"/><path d="M684.5,190 h15 q-1.5,3 -4,3 h-7 q-2.5,0 -4,-3 z" fill="#0c18e2"/><rect x="689.5" y="231" width="20" height="20" fill="#8fbad3"/><circle cx="694.6" cy="241" r="1.7" fill="#f2f6fa" stroke="#22305a" stroke-width="0.95"/><circle cx="699.5" cy="241" r="1.7" fill="#f2f6fa" stroke="#22305a" stroke-width="0.95"/><circle cx="704.4" cy="241" r="1.7" fill="#f2f6fa" stroke="#22305a" stroke-width="0.95"/><polygon points="674,247 674,252 679,252" fill="#ffffff" stroke="#111" stroke-width="0.4"/><rect x="672.5" y="237.7" width="3.6" height="8.5" fill="#86c79a"/><rect x="674" y="241.2" width="38" height="2.2" fill="#86c79a"/><polygon points="711.5,190 716.5,190 711.5,195" fill="#f0921e"/><path d="M711.8,194.8 L716.7,189.9" stroke="#e8eef2" stroke-width="0.7"/><polygon points="712,247 712,252 717,252" fill="#ffffff" stroke="#111" stroke-width="0.4"/><rect x="710.5" y="239.5" width="3.6" height="8.5" fill="#86c79a"/><rect x="712" y="243" width="29" height="2.2" fill="#86c79a"/><polygon points="740.5,190 745.5,190 740.5,195" fill="#f0921e"/><path d="M740.8,194.8 L745.7,189.9" stroke="#e8eef2" stroke-width="0.7"/><polygon points="741,247 741,252 746,252" fill="#ffffff" stroke="#111" stroke-width="0.4"/><rect x="739.5" y="239.5" width="3.6" height="8.5" fill="#86c79a"/><rect x="741" y="243" width="23" height="2.2" fill="#86c79a"/><polygon points="763.5,190 768.5,190 763.5,195" fill="#f0921e"/><path d="M763.8,194.8 L768.7,189.9" stroke="#e8eef2" stroke-width="0.7"/><polygon points="764,247 764,252 769,252" fill="#ffffff" stroke="#111" stroke-width="0.4"/><rect x="762.5" y="239.5" width="3.6" height="8.5" fill="#86c79a"/><rect x="764" y="243" width="20" height="2.2" fill="#86c79a"/><polygon points="783.5,190 788.5,190 783.5,195" fill="#f0921e"/><path d="M783.8,194.8 L788.7,189.9" stroke="#e8eef2" stroke-width="0.7"/><path d="M793,190 h19 l-3.5,4.2 h-12 z" fill="#e4ecf2"/><path d="M795,190 h15 q-1.5,3 -4,3 h-7 q-2.5,0 -4,-3 z" fill="#0c18e2"/><rect x="800.5" y="231" width="20" height="20" fill="#8fbad3"/><circle cx="805.6" cy="241" r="1.7" fill="#f2f6fa" stroke="#22305a" stroke-width="0.95"/><circle cx="810.5" cy="241" r="1.7" fill="#f2f6fa" stroke="#22305a" stroke-width="0.95"/><circle cx="815.4" cy="241" r="1.7" fill="#f2f6fa" stroke="#22305a" stroke-width="0.95"/><polygon points="784,247 784,252 789,252" fill="#ffffff" stroke="#111" stroke-width="0.4"/><rect x="782.5" y="240.5" width="3.6" height="8.5" fill="#86c79a"/><rect x="784" y="244" width="39" height="2.2" fill="#86c79a"/><polygon points="822.5,190 827.5,190 822.5,195" fill="#f0921e"/><path d="M822.8,194.8 L827.7,189.9" stroke="#e8eef2" stroke-width="0.7"/><path d="M831,190 h19 l-3.5,4.2 h-12 z" fill="#e4ecf2"/><path d="M833,190 h15 q-1.5,3 -4,3 h-7 q-2.5,0 -4,-3 z" fill="#0c18e2"/><rect x="837.5" y="231" width="20" height="20" fill="#8fbad3"/><circle cx="842.6" cy="241" r="1.7" fill="#f2f6fa" stroke="#22305a" stroke-width="0.95"/><circle cx="847.5" cy="241" r="1.7" fill="#f2f6fa" stroke="#22305a" stroke-width="0.95"/><circle cx="852.4" cy="241" r="1.7" fill="#f2f6fa" stroke="#22305a" stroke-width="0.95"/><polygon points="823,247 823,252 828,252" fill="#ffffff" stroke="#111" stroke-width="0.4"/><rect x="821.5" y="240.5" width="3.6" height="8.5" fill="#86c79a"/><rect x="823" y="244" width="37.5" height="2.2" fill="#86c79a"/><polygon points="860,190 865,190 860,195" fill="#f0921e"/><path d="M860.3,194.8 L865.2,189.9" stroke="#e8eef2" stroke-width="0.7"/><path d="M866.75,190 h19 l-3.5,4.2 h-12 z" fill="#e4ecf2"/><path d="M868.75,190 h15 q-1.5,3 -4,3 h-7 q-2.5,0 -4,-3 z" fill="#0c18e2"/><rect x="871.5" y="231" width="20" height="20" fill="#8fbad3"/><circle cx="876.6" cy="241" r="1.7" fill="#f2f6fa" stroke="#22305a" stroke-width="0.95"/><circle cx="881.5" cy="241" r="1.7" fill="#f2f6fa" stroke="#22305a" stroke-width="0.95"/><circle cx="886.4" cy="241" r="1.7" fill="#f2f6fa" stroke="#22305a" stroke-width="0.95"/><polygon points="860.5,247 860.5,252 865.5,252" fill="#ffffff" stroke="#111" stroke-width="0.4"/><rect x="859" y="237.7" width="3.6" height="8.5" fill="#86c79a"/><rect x="860.5" y="241.2" width="33.5" height="2.2" fill="#86c79a"/><polygon points="893.5,190 898.5,190 893.5,195" fill="#f0921e"/><path d="M893.8,194.8 L898.7,189.9" stroke="#e8eef2" stroke-width="0.7"/><polygon points="894,247 894,252 899,252" fill="#ffffff" stroke="#111" stroke-width="0.4"/><rect x="892.5" y="238.5" width="3.6" height="8.5" fill="#86c79a"/><rect x="894" y="242" width="20" height="2.2" fill="#86c79a"/><polygon points="913.5,190 918.5,190 913.5,195" fill="#f0921e"/><path d="M913.8,194.8 L918.7,189.9" stroke="#e8eef2" stroke-width="0.7"/><polygon points="914,247 914,252 919,252" fill="#ffffff" stroke="#111" stroke-width="0.4"/><rect x="912.5" y="237.7" width="3.6" height="8.5" fill="#86c79a"/><rect x="914" y="241.2" width="25" height="2.2" fill="#86c79a"/><polygon points="938.5,190 943.5,190 938.5,195" fill="#f0921e"/><path d="M938.8,194.8 L943.7,189.9" stroke="#e8eef2" stroke-width="0.7"/><path d="M949,190 h19 l-3.5,4.2 h-12 z" fill="#e4ecf2"/><path d="M951,190 h15 q-1.5,3 -4,3 h-7 q-2.5,0 -4,-3 z" fill="#0c18e2"/><rect x="957.5" y="231" width="20" height="20" fill="#8fbad3"/><circle cx="962.6" cy="241" r="1.7" fill="#f2f6fa" stroke="#22305a" stroke-width="0.95"/><circle cx="967.5" cy="241" r="1.7" fill="#f2f6fa" stroke="#22305a" stroke-width="0.95"/><circle cx="972.4" cy="241" r="1.7" fill="#f2f6fa" stroke="#22305a" stroke-width="0.95"/><polygon points="939,247 939,252 944,252" fill="#ffffff" stroke="#111" stroke-width="0.4"/><rect x="937.5" y="237.7" width="3.6" height="8.5" fill="#86c79a"/><rect x="939" y="241.2" width="41" height="2.2" fill="#86c79a"/><polygon points="979.5,190 984.5,190 979.5,195" fill="#f0921e"/><path d="M979.8,194.8 L984.7,189.9" stroke="#e8eef2" stroke-width="0.7"/><polygon points="980,247 980,252 985,252" fill="#ffffff" stroke="#111" stroke-width="0.4"/><rect x="978.5" y="238.9" width="3.6" height="8.5" fill="#86c79a"/><rect x="980" y="242.4" width="28" height="2.2" fill="#86c79a"/><polygon points="1006,190 1011,190 1006,195" fill="#f0921e"/><path d="M1006.3,194.8 L1011.2,189.9" stroke="#e8eef2" stroke-width="0.7"/><polygon points="1047,190 1042,190 1047,195" fill="#f0921e"/><path d="M1017,190 h19 l-3.5,4.2 h-12 z" fill="#e4ecf2"/><path d="M1019,190 h15 q-1.5,3 -4,3 h-7 q-2.5,0 -4,-3 z" fill="#0c18e2"/><rect x="1026" y="231" width="20" height="20" fill="#8fbad3"/><circle cx="1031.1" cy="241" r="1.7" fill="#f2f6fa" stroke="#22305a" stroke-width="0.95"/><circle cx="1036" cy="241" r="1.7" fill="#f2f6fa" stroke="#22305a" stroke-width="0.95"/><circle cx="1040.9" cy="241" r="1.7" fill="#f2f6fa" stroke="#22305a" stroke-width="0.95"/><polygon points="1006.5,247 1006.5,252 1011.5,252" fill="#ffffff" stroke="#111" stroke-width="0.4"/><text x="203.5" y="242.6" font-family="Liberation Sans, sans-serif" font-size="12.5" letter-spacing="-0.6" fill="#fff" stroke="#222" stroke-width="1.5" paint-order="stroke">fx</text><circle cx="214" cy="244.5" r="4.6" fill="#5e8ff0" stroke="#3a5cc0" stroke-width="0.5"/><rect x="207.5" y="243" width="14" height="2.2" fill="#86c79a" opacity="0.55"/><text x="596" y="242.6" font-family="Liberation Sans, sans-serif" font-size="12.5" letter-spacing="-0.6" fill="#fff" stroke="#222" stroke-width="1.5" paint-order="stroke">fx</text><circle cx="606.5" cy="244.5" r="4.6" fill="#5e8ff0" stroke="#3a5cc0" stroke-width="0.5"/><rect x="600" y="243" width="14" height="2.2" fill="#86c79a" opacity="0.55"/></svg>
<div style="position:absolute;left:1007px;top:210px;width:39.5px;height:22px;overflow:hidden;color:#fff;font:14px/22px 'Liberation Sans',sans-serif;letter-spacing:3.8px;white-space:nowrap">OLAS</div>
<div style="position:absolute;left:1009px;top:208.5px;width:30px;height:1px;background:repeating-linear-gradient(90deg,#ddd 0,#ddd 2px,transparent 2px,transparent 4px);"></div>
<div style="position:absolute;left:1009px;top:232.5px;width:16px;height:1px;background:repeating-linear-gradient(90deg,#ccc 0,#ccc 1px,transparent 1px,transparent 4px);"></div>
<svg style="position:absolute;left:0px;top:0px;overflow:hidden" width="1262" height="582" viewBox="0 0 1262 582"><defs><pattern id="pdrums" width="2" height="2" patternUnits="userSpaceOnUse"><rect width="2" height="2" fill="#457e9c"/><rect width="1" height="1" fill="#2b4c5e"/><rect x="1" y="1" width="1" height="1" fill="#2b4c5e"/></pattern><pattern id="pbass" width="2" height="2" patternUnits="userSpaceOnUse"><rect width="2" height="2" fill="#8fb9d0"/><rect width="1" height="1" fill="#4a5f6c"/><rect x="1" y="1" width="1" height="1" fill="#4a5f6c"/></pattern><pattern id="pguitars" width="2" height="2" patternUnits="userSpaceOnUse"><rect width="2" height="2" fill="#fba87b"/><rect width="1" height="1" fill="#7d5440"/><rect x="1" y="1" width="1" height="1" fill="#7d5440"/></pattern><pattern id="pkeys" width="2" height="2" patternUnits="userSpaceOnUse"><rect width="2" height="2" fill="#c48693"/><rect width="1" height="1" fill="#62434a"/><rect x="1" y="1" width="1" height="1" fill="#62434a"/></pattern></defs><rect x="26" y="277" width="953" height="61" fill="#457e9c"/><rect x="10.5" y="338" width="984" height="1" fill="#0a0a0a"/><rect x="334" y="277" width="225" height="61" fill="#3f7db4"/><polygon points="11,282 16,277 25,277 25,338 11,338" fill="url(#pdrums)"/><rect x="25" y="277" width="1" height="61" fill="#15222a"/><rect x="979" y="317.5" width="15" height="20.5" fill="#457e9c"/><polygon points="980,277 989,277 994,282 994,317.5 980,317.5" fill="url(#pdrums)"/><rect x="979" y="277" width="1" height="61" fill="#101418"/><path d="M980.2,277.3 C984,284 989.5,301 991.5,317.5" fill="none" stroke="#0a1ef0" stroke-width="1.2"/><rect x="11" y="292" width="983" height="1" fill="#a9c3cf"/><path d="M31,292.5V290.2h1V290.5h1V291h1V291.3h1V291.4h1V291.7h1V293.3h-1V293.7h-1V293.8h-1V294.1h-1V294.2h-1V294.9h-1zM69,292.5V290.4h1V290.6h1V290.8h1V291.1h1V291.5h1V291.6h1V293.3h-1V293.5h-1V293.8h-1V294.2h-1V294h-1V295.1h-1zM107,292.5V290.4h1V291h1V291h1V291.2h1V291.4h1V291.6h1V293.3h-1V293.6h-1V293.9h-1V294.2h-1V294.2h-1V294.7h-1zM183,292.5V282.3h1V286.5h1V289.3h1V290.4h1V290.8h1V291.2h1V291.5h1V293.5h-1V293.6h-1V294h-1V294.5h-1V295.6h-1V298.3h-1V302.6h-1zM192,292.5V288.3h1V291.6h1V293.4h-1V297.1h-1zM202,292.5V285h1V289.5h1V290.3h1V291.3h1V291.5h1V293.4h-1V293.7h-1V294.4h-1V296.2h-1V298.6h-1zM210,292.5V289.8h1V288.6h1V291.5h1V293.4h-1V296.3h-1V295.3h-1zM221,292.5V283.2h1V287.4h1V289.3h1V290.4h1V291h1V291.2h1V291.6h1V291.8h1V293.2h-1V293.5h-1V293.8h-1V294.1h-1V294.9h-1V296.3h-1V298.7h-1V301.4h-1zM230,292.5V286.3h1V291.7h1V293.5h-1V298.3h-1zM240,292.5V287.7h1V289.2h1V290.8h1V291.5h1V291.7h1V293.4h-1V293.7h-1V294.1h-1V295.3h-1V297.4h-1zM248,292.5V289.4h1V286.5h1V291.5h1V293.6h-1V297.6h-1V295.7h-1zM259,292.5V285.6h1V286.8h1V289.6h1V290.2h1V291.1h1V291.3h1V291.6h1V293.3h-1V293.6h-1V294.2h-1V294.9h-1V295.4h-1V298h-1V299.3h-1zM268,292.5V287.8h1V291.6h1V293.5h-1V299h-1zM277,292.5V287.6h1V289.4h1V290.9h1V291.5h1V291.7h1V293.4h-1V293.6h-1V294.4h-1V295.3h-1V298.5h-1zM286,292.5V288.5h1V287.3h1V291.5h1V291.7h1V293.2h-1V293.6h-1V296.6h-1V296.1h-1zM296,292.5V279.9h1V286.8h1V289.1h1V289.8h1V290.8h1V291.4h1V291.7h1V291.7h1V293.3h-1V293.5h-1V293.6h-1V294.2h-1V295h-1V296.5h-1V297.3h-1V306.2h-1zM306,292.5V287.4h1V291.5h1V293.5h-1V299h-1zM315,292.5V287.4h1V289.9h1V290.6h1V291.3h1V291.6h1V293.4h-1V293.7h-1V294.5h-1V295.6h-1V299h-1zM323,292.5V289.5h1V290.7h1V287.9h1V291.6h1V293.4h-1V297.7h-1V294.3h-1V295.8h-1zM334,292.5V282.7h1V286.5h1V289.3h1V289.6h1V290.7h1V291.2h1V291.6h1V291.8h1V293.3h-1V293.5h-1V293.7h-1V294.1h-1V295.3h-1V296.4h-1V298.6h-1V301.4h-1zM344,292.5V287.2h1V291.5h1V293.4h-1V299.1h-1zM353,292.5V285.8h1V288.9h1V290.6h1V291.3h1V291.6h1V293.3h-1V293.8h-1V294.2h-1V296.4h-1V298.7h-1zM361,292.5V288.4h1V290.7h1V287.9h1V291.7h1V293.4h-1V297.8h-1V294.6h-1V296.3h-1zM372,292.5V281.1h1V285.2h1V288.3h1V290.1h1V290.5h1V291.1h1V291.6h1V291.7h1V293.3h-1V293.4h-1V293.9h-1V294.5h-1V295.2h-1V296.3h-1V298.6h-1V304.3h-1zM381,292.5V288h1V291.6h1V293.4h-1V297.3h-1zM391,292.5V286.3h1V288.2h1V290.6h1V291h1V291.5h1V293.4h-1V293.7h-1V294.3h-1V296.1h-1V300h-1zM399,292.5V289.1h1V288.5h1V291.4h1V291.7h1V293.2h-1V293.5h-1V296.7h-1V296.5h-1zM480,292.5V289.4h1V290.3h1V288.7h1V290.2h1V284.5h1V287.8h1V289.9h1V290.3h1V291.1h1V291.4h1V291.6h1V293.4h-1V293.6h-1V293.9h-1V294.4h-1V295.5h-1V296.7h-1V299.1h-1V294.9h-1V296.3h-1V294.5h-1V295.5h-1zM494,292.5V287.6h1V291.6h1V293.3h-1V298.1h-1zM503,292.5V285.3h1V289.5h1V290.4h1V291.3h1V291.5h1V293.4h-1V293.8h-1V294.7h-1V295.9h-1V299.2h-1zM513,292.5V286.9h1V291.6h1V293.3h-1V297.2h-1zM522,292.5V283.8h1V287.2h1V289.5h1V290h1V291h1V291.4h1V291.6h1V293.4h-1V293.7h-1V294.1h-1V295h-1V296.2h-1V298h-1V301.5h-1zM532,292.5V287.7h1V291.6h1V293.5h-1V298h-1zM541,292.5V286.7h1V288.9h1V290.4h1V291.3h1V291.7h1V293.3h-1V293.8h-1V294.2h-1V295.3h-1V297.3h-1zM551,292.5V287.8h1V291.6h1V293.4h-1V297.5h-1zM560,292.5V281.7h1V285.8h1V289.2h1V290.2h1V290.8h1V291.2h1V291.6h1V291.7h1V293.3h-1V293.4h-1V293.7h-1V294.2h-1V295.1h-1V296.2h-1V297.4h-1V301.7h-1zM570,292.5V287.3h1V291.5h1V293.4h-1V299h-1zM579,292.5V286.9h1V289.4h1V290.6h1V291.2h1V291.7h1V293.4h-1V293.7h-1V294.1h-1V295.6h-1V297.4h-1zM589,292.5V287.4h1V291.6h1V293.3h-1V297.5h-1zM599,292.5V283.8h1V286.2h1V289.3h1V290.5h1V290.8h1V291.3h1V291.6h1V293.4h-1V293.6h-1V294.3h-1V294.8h-1V295.9h-1V298.7h-1V300.8h-1zM608,292.5V285.5h1V291.5h1V293.4h-1V297.7h-1zM618,292.5V286.9h1V288.8h1V290.6h1V291.3h1V291.7h1V293.4h-1V293.9h-1V294.6h-1V295.8h-1V298.1h-1zM627,292.5V288.3h1V291.7h1V293.3h-1V296.6h-1zM637,292.5V283.3h1V286.4h1V289h1V289.8h1V290.6h1V291.1h1V291.5h1V291.7h1V293.3h-1V293.5h-1V293.7h-1V294.3h-1V295.1h-1V296.5h-1V297.8h-1V301.8h-1zM646,292.5V287.9h1V291.7h1V293.4h-1V298.2h-1zM656,292.5V285.9h1V289.6h1V290.7h1V291.2h1V291.6h1V293.3h-1V293.7h-1V294.2h-1V295.9h-1V297.5h-1zM665,292.5V287.4h1V291.7h1V293.3h-1V298.1h-1zM675,292.5V284.3h1V286.8h1V289.4h1V290.4h1V291.2h1V291.5h1V291.6h1V293.4h-1V293.5h-1V293.8h-1V294.7h-1V295.9h-1V296.7h-1V301.3h-1zM685,292.5V286.9h1V291.6h1V293.4h-1V297.3h-1zM694,292.5V286.7h1V289.2h1V291h1V291.4h1V291.7h1V293.3h-1V293.7h-1V294.4h-1V295h-1V298.6h-1zM704,292.5V287.3h1V291.6h1V293.3h-1V297.5h-1zM712,292.5V283h1V284.5h1V286.3h1V289.2h1V295.8h-1V298h-1V301.5h-1V302.4h-1zM826,292.5V284.3h1V290.9h1V291.1h1V287.5h1V288.9h1V291.7h1V289.1h1V287.4h1V289.1h1V295.5h-1V297.7h-1V296.8h-1V293.3h-1V296h-1V297.2h-1V294h-1V294.1h-1V299.1h-1zM836,292.5V285.3h1V299.7h-1zM838,292.5V290.7h1V289.5h1V290.8h1V289.3h1V288.6h1V289.7h1V291.5h1V287h1V290.1h1V291.6h1V291.1h1V293.8h-1V293.4h-1V294.9h-1V297.3h-1V293.7h-1V295.3h-1V296.9h-1V295.8h-1V293.9h-1V295.2h-1V294.3h-1zM850,292.5V291.4h1V286.5h1V288.7h1V287.6h1V287.4h1V287.6h1V291.4h1V290.7h1V291.6h1V290.2h1V291.2h1V291.2h1V291.2h1V294.2h-1V293.9h-1V293.6h-1V294.6h-1V293.3h-1V294.3h-1V293.8h-1V296.9h-1V297.9h-1V297.7h-1V296.5h-1V296.7h-1V293.6h-1zM864,292.5V289.2h1V290.3h1V291.4h1V287h1V289h1V290.4h1V289.8h1V288.3h1V290.9h1V289.5h1V286.5h1V289.1h1V287.2h1V289.4h1V290.8h1V289.2h1V289.4h1V291h1V290.8h1V290.3h1V289.9h1V288.9h1V295.9h-1V294.7h-1V294.6h-1V294.1h-1V294.2h-1V295h-1V295.8h-1V294.7h-1V295.5h-1V296.6h-1V296.5h-1V300.1h-1V295.3h-1V293.9h-1V297.5h-1V295.1h-1V294.5h-1V296h-1V297.1h-1V293.5h-1V294.9h-1V296.2h-1zM887,292.5V291.6h1V287.4h1V287.2h1V287.1h1V289.9h1V288.1h1V288.1h1V287.3h1V291.2h1V290.5h1V287.9h1V287.6h1V290.2h1V289.7h1V287.8h1V285.9h1V288.9h1V290.6h1V290.9h1V290.3h1V288.1h1V289.4h1V291.6h1V287.9h1V291.1h1V285.3h1V290.8h1V289.7h1V291.6h1V291.5h1V290.6h1V290h1V288.6h1V289.5h1V287.5h1V288.6h1V289.3h1V291h1V290.5h1V288.8h1V290.1h1V291.2h1V290.8h1V287.6h1V291.1h1V288.5h1V286.6h1V287.8h1V288.6h1V289.5h1V291.2h1V288.7h1V287.5h1V287.1h1V288.2h1V290.2h1V290.8h1V291.2h1V287.6h1V290.7h1V288.6h1V290.7h1V291.4h1V286.3h1V291h1V290h1V289.7h1V290.6h1V286.8h1V289.1h1V291h1V291.2h1V285.2h1V299.1h-1V293.7h-1V294.1h-1V296.6h-1V297.4h-1V294.8h-1V296h-1V295.1h-1V294h-1V299.3h-1V293.4h-1V294.2h-1V296.5h-1V294.6h-1V296.5h-1V294h-1V294h-1V294.6h-1V297.4h-1V297.9h-1V297.5h-1V296.5h-1V293.8h-1V295.6h-1V295.8h-1V296.5h-1V298.4h-1V296.4h-1V293.8h-1V298.1h-1V294.2h-1V293.8h-1V295.1h-1V296.8h-1V294.1h-1V293.8h-1V295.7h-1V296.4h-1V299.2h-1V295.5h-1V296.7h-1V295.1h-1V294.5h-1V293.4h-1V293.4h-1V294.8h-1V294.1h-1V299.9h-1V293.9h-1V297.3h-1V293.5h-1V295.7h-1V298h-1V294.4h-1V293.9h-1V294.5h-1V296.1h-1V299h-1V298.6h-1V294.8h-1V294.9h-1V297.2h-1V296.9h-1V294.4h-1V294.1h-1V296.9h-1V296.8h-1V296.5h-1V295h-1V297.5h-1V298.2h-1V296.9h-1V293.3h-1z" fill="#a9c3cf"/><rect x="11" y="323" width="968" height="1" fill="#a9c3cf"/><path d="M31,323.5V321.1h1V321.6h1V321.8h1V322.1h1V322.3h1V322.6h1V324.4h-1V324.7h-1V324.9h-1V325h-1V325.4h-1V325.9h-1zM69,323.5V320.8h1V321.7h1V321.8h1V322.2h1V322.4h1V322.6h1V324.3h-1V324.7h-1V324.7h-1V325h-1V325.4h-1V326h-1zM107,323.5V321.3h1V321.8h1V322.1h1V322.3h1V322.3h1V322.7h1V324.4h-1V324.5h-1V324.9h-1V325h-1V325.5h-1V325.8h-1zM183,323.5V314.7h1V319h1V320.4h1V321.4h1V321.9h1V322.4h1V322.7h1V324.4h-1V324.6h-1V325h-1V326h-1V326.6h-1V328.1h-1V333.4h-1zM192,323.5V318.7h1V322.6h1V324.4h-1V328.7h-1zM202,323.5V317.7h1V319.5h1V321.4h1V322.2h1V322.7h1V324.5h-1V324.7h-1V325.8h-1V326.8h-1V330.8h-1zM210,323.5V320.2h1V318.9h1V322.6h1V324.6h-1V328h-1V326.4h-1zM221,323.5V313.9h1V318.8h1V320h1V320.9h1V322h1V322.3h1V322.5h1V322.7h1V324.3h-1V324.4h-1V324.6h-1V325h-1V326h-1V327.5h-1V329.2h-1V331.7h-1zM230,323.5V318.5h1V322.6h1V324.5h-1V329.1h-1zM240,323.5V319.1h1V320.2h1V321.9h1V322.3h1V322.7h1V324.3h-1V324.6h-1V325.2h-1V326.8h-1V329.5h-1zM248,323.5V319.7h1V317.7h1V322.4h1V324.5h-1V328.2h-1V326.9h-1zM259,323.5V314.5h1V318h1V320.3h1V321.6h1V322.1h1V322.5h1V322.6h1V324.4h-1V324.6h-1V324.9h-1V325.9h-1V326.7h-1V327.9h-1V330.1h-1zM268,323.5V318.2h1V322.6h1V324.4h-1V329.5h-1zM277,323.5V318.2h1V320.2h1V322h1V322.3h1V322.7h1V324.3h-1V324.6h-1V325.2h-1V326.7h-1V329.8h-1zM286,323.5V320.3h1V318.5h1V322.3h1V322.7h1V324.3h-1V324.6h-1V327.6h-1V328h-1zM296,323.5V310.2h1V318.2h1V320.2h1V321h1V321.7h1V322.3h1V322.5h1V322.8h1V324.2h-1V324.3h-1V324.6h-1V325.2h-1V325.7h-1V326.7h-1V329.4h-1V337h-1zM306,323.5V316.9h1V322.6h1V324.5h-1V330.2h-1zM315,323.5V317.4h1V320.9h1V321.9h1V322.4h1V322.6h1V324.3h-1V324.6h-1V325.1h-1V326.3h-1V329.2h-1zM323,323.5V320.4h1V321.7h1V319h1V322.7h1V324.3h-1V327.9h-1V325.3h-1V326.8h-1zM334,323.5V314.5h1V316.6h1V319.5h1V321.4h1V321.9h1V322.4h1V322.6h1V322.7h1V324.3h-1V324.5h-1V324.7h-1V325.3h-1V325.8h-1V327.4h-1V330h-1V333.5h-1zM344,323.5V317.9h1V322.4h1V324.5h-1V330.5h-1zM353,323.5V317.6h1V320.5h1V321.2h1V322.2h1V322.7h1V324.5h-1V324.9h-1V325.5h-1V327.2h-1V329.7h-1zM361,323.5V319.7h1V321.9h1V318.4h1V322.7h1V324.4h-1V328.8h-1V325.2h-1V326.7h-1zM372,323.5V313.8h1V318h1V319.9h1V320.8h1V321.7h1V322.1h1V322.5h1V322.8h1V324.3h-1V324.5h-1V325h-1V325.2h-1V326.2h-1V328.2h-1V331h-1V333.6h-1zM381,323.5V318.9h1V322.7h1V324.4h-1V329.2h-1zM391,323.5V316h1V319.8h1V321.7h1V322h1V322.5h1V324.4h-1V325h-1V325.4h-1V326.6h-1V329.4h-1zM399,323.5V319.6h1V318.9h1V322.3h1V322.8h1V324.3h-1V324.5h-1V328.5h-1V327.5h-1zM480,323.5V320.4h1V321.4h1V319.8h1V321.4h1V315.7h1V318.5h1V320h1V321.5h1V322h1V322.4h1V322.7h1V324.4h-1V324.6h-1V325h-1V325.5h-1V326.7h-1V327.6h-1V329.7h-1V325.5h-1V326.8h-1V325.4h-1V326.9h-1zM494,323.5V317.8h1V322.6h1V324.4h-1V329.2h-1zM503,323.5V317.2h1V320h1V321.5h1V322.3h1V322.6h1V324.5h-1V324.6h-1V325.7h-1V327h-1V330.6h-1zM513,323.5V318.3h1V322.6h1V324.3h-1V328.5h-1zM522,323.5V315.2h1V319.1h1V320.2h1V321.6h1V322h1V322.4h1V322.7h1V324.3h-1V324.6h-1V324.9h-1V325.8h-1V326.7h-1V328.5h-1V330.3h-1zM532,323.5V317h1V322.6h1V324.5h-1V330.1h-1zM541,323.5V317.8h1V320.6h1V321.6h1V322.4h1V322.7h1V324.4h-1V324.8h-1V325.6h-1V327h-1V330h-1zM551,323.5V318.1h1V322.7h1V324.3h-1V327.3h-1zM560,323.5V314.9h1V316.9h1V319.9h1V321h1V322h1V322.3h1V322.5h1V322.7h1V324.2h-1V324.5h-1V324.7h-1V325.4h-1V325.6h-1V327h-1V329.9h-1V331.2h-1zM570,323.5V318.1h1V322.5h1V324.4h-1V330.2h-1zM579,323.5V317.3h1V320.5h1V321.5h1V322.4h1V322.7h1V324.4h-1V324.7h-1V325.6h-1V326.2h-1V328.7h-1zM589,323.5V319.3h1V322.6h1V324.3h-1V327.8h-1zM599,323.5V313.6h1V317.7h1V319.8h1V321.2h1V322h1V322.3h1V322.6h1V324.4h-1V324.6h-1V325h-1V325.5h-1V327.5h-1V328.2h-1V333.3h-1zM608,323.5V317.1h1V322.6h1V324.5h-1V330.2h-1zM618,323.5V316.3h1V320.4h1V321.2h1V322.3h1V322.7h1V324.5h-1V324.8h-1V325.6h-1V326.7h-1V330h-1zM627,323.5V319h1V322.7h1V324.3h-1V328.2h-1zM637,323.5V313.5h1V318h1V320.2h1V320.7h1V321.9h1V322.3h1V322.5h1V322.7h1V324.3h-1V324.4h-1V324.9h-1V325.3h-1V325.8h-1V327.1h-1V330.2h-1V332.4h-1zM646,323.5V318.8h1V322.6h1V324.3h-1V329.2h-1zM656,323.5V317.6h1V320.4h1V321.5h1V322.3h1V322.6h1V324.4h-1V324.8h-1V325.4h-1V326.9h-1V329.6h-1zM665,323.5V317.4h1V322.6h1V324.3h-1V328.1h-1zM675,323.5V315.5h1V318.8h1V320.1h1V321.6h1V322.1h1V322.4h1V322.6h1V324.4h-1V324.5h-1V325h-1V325.6h-1V326.9h-1V328.8h-1V330.4h-1zM685,323.5V317.9h1V322.6h1V324.4h-1V329.7h-1zM694,323.5V319.2h1V320.7h1V321.9h1V322.5h1V322.7h1V324.3h-1V324.7h-1V325.4h-1V326.3h-1V328.6h-1zM704,323.5V317.8h1V322.7h1V324.4h-1V328.1h-1zM712,323.5V316.2h1V313.9h1V318.3h1V320.3h1V327.6h-1V329.4h-1V332.7h-1V331.7h-1zM826,323.5V316.4h1V322.2h1V322.1h1V319.4h1V320.2h1V322.7h1V319.8h1V317.9h1V320.4h1V326.9h-1V327.6h-1V327.6h-1V324.2h-1V326.6h-1V328.2h-1V324.9h-1V325h-1V330.9h-1zM836,323.5V318.3h1V329.2h-1zM838,323.5V321.7h1V320.9h1V321.9h1V320.7h1V318.4h1V321.1h1V322.4h1V318.4h1V321.3h1V322.5h1V322.4h1V324.7h-1V324.4h-1V325.7h-1V329.4h-1V324.5h-1V326h-1V328.6h-1V327.4h-1V324.9h-1V326.1h-1V325h-1zM850,323.5V322.4h1V318.7h1V319.4h1V317.3h1V317.7h1V318.6h1V322.4h1V321.9h1V322.7h1V321.7h1V322.4h1V322.1h1V321.8h1V324.9h-1V324.9h-1V324.7h-1V325.5h-1V324.3h-1V325.3h-1V324.6h-1V329.1h-1V330.4h-1V328.8h-1V327.3h-1V329h-1V324.4h-1zM864,323.5V319.9h1V320.9h1V322.5h1V319.3h1V320.2h1V321.2h1V321.1h1V318.2h1V321.7h1V319.8h1V317h1V320.5h1V318.9h1V320.8h1V321.6h1V320.7h1V320.7h1V322.1h1V321.9h1V321.5h1V320.8h1V320.4h1V326.6h-1V326.1h-1V325.3h-1V325h-1V325h-1V325.8h-1V326.4h-1V325.3h-1V325.8h-1V328.8h-1V327.5h-1V330.1h-1V326.3h-1V325.3h-1V327.9h-1V325.8h-1V325.5h-1V327.4h-1V327.8h-1V324.5h-1V325.8h-1V326.7h-1zM887,323.5V322.6h1V318.6h1V317.4h1V318.4h1V321.2h1V320.2h1V319.7h1V317.9h1V322h1V321.8h1V318.4h1V318.3h1V321.1h1V321h1V319.1h1V318.1h1V319.6h1V321.5h1V322.1h1V321.5h1V318.6h1V320.8h1V322.5h1V318h1V322.2h1V316.3h1V322.1h1V320.9h1V322.6h1V322.6h1V321.5h1V321.1h1V320.3h1V320.3h1V317.9h1V318.2h1V320.2h1V322.1h1V321.8h1V318.9h1V320.3h1V322.4h1V321.8h1V317.4h1V322.2h1V319.5h1V319.3h1V319.6h1V320h1V320.2h1V322.3h1V318.6h1V318.5h1V318.3h1V318.3h1V321.1h1V322.1h1V322.1h1V319.4h1V321.2h1V320h1V322h1V322.5h1V318.4h1V322h1V321.5h1V319.9h1V321.6h1V317.4h1V320.1h1V321.9h1V322.1h1V316.8h1V329.3h-1V324.7h-1V325h-1V327.2h-1V328h-1V325.9h-1V326.8h-1V325.8h-1V325.3h-1V328.7h-1V324.4h-1V325h-1V327h-1V325.7h-1V327.5h-1V325h-1V325.1h-1V325.8h-1V328.6h-1V329.6h-1V329.5h-1V327.4h-1V324.8h-1V326.9h-1V327.2h-1V327.2h-1V328.7h-1V326.9h-1V324.9h-1V328h-1V325.3h-1V324.8h-1V325.9h-1V327.4h-1V325.5h-1V324.9h-1V326.8h-1V328.5h-1V329.5h-1V327.1h-1V327.1h-1V326.2h-1V325.3h-1V324.4h-1V324.4h-1V326h-1V325h-1V331.8h-1V324.8h-1V327.7h-1V324.5h-1V326.6h-1V328.5h-1V325.4h-1V325.2h-1V325.5h-1V327.3h-1V329.2h-1V328.5h-1V326h-1V325.5h-1V327.7h-1V329.1h-1V325.4h-1V325.1h-1V328h-1V327.6h-1V327.7h-1V325.7h-1V328.7h-1V328.3h-1V328.4h-1V324.5h-1z" fill="#a9c3cf"/><rect x="26" y="307" width="968" height="1" fill="#30505f"/><rect x="175" y="341" width="796" height="61" fill="#8fb9d0"/><rect x="163.5" y="402" width="823" height="1" fill="#0a0a0a"/><rect x="334" y="341" width="225" height="61" fill="#6fa8d8"/><polygon points="164,346 169,341 174,341 174,402 164,402" fill="url(#pbass)"/><rect x="174" y="341" width="1" height="61" fill="#15222a"/><rect x="971" y="381.5" width="15" height="20.5" fill="#8fb9d0"/><polygon points="972,341 981,341 986,346 986,381.5 972,381.5" fill="url(#pbass)"/><rect x="971" y="341" width="1" height="61" fill="#101418"/><path d="M972.2,341.3 C976,348 981.5,365 983.5,381.5" fill="none" stroke="#0a1ef0" stroke-width="1.2"/><rect x="164" y="356" width="822" height="1" fill="#45535d"/><path d="M181,356.5V349.5h1V349.9h1V350.7h1V350.6h1V350.6h1V352.1h1V351.3h1V352.3h1V351.8h1V351.4h1V352.1h1V352.4h1V352.2h1V353.5h1V353.5h1V353.5h1V353h1V353.8h1V353.8h1V354.1h1V354h1V354.5h1V354.5h1V354.5h1V354.8h1V355h1V355.3h1V355.3h1V355.6h1V355.7h1V357.2h-1V357.4h-1V357.5h-1V357.6h-1V357.8h-1V358.1h-1V358.2h-1V358.6h-1V358.5h-1V359h-1V358.8h-1V359.1h-1V358.9h-1V359.1h-1V360h-1V359.4h-1V360.3h-1V360.9h-1V360.3h-1V360.5h-1V360.3h-1V361.7h-1V360.4h-1V360.9h-1V361.4h-1V362.4h-1V362.3h-1V362h-1V363.1h-1V364.7h-1zM219,356.5V348.8h1V350.3h1V351.4h1V351.3h1V352.1h1V350.7h1V352.3h1V351.8h1V352.4h1V352.2h1V351.9h1V353.2h1V352.5h1V353.2h1V352.7h1V353.4h1V353.3h1V354.1h1V354.2h1V354.1h1V354.3h1V354.7h1V354.3h1V354.7h1V354.8h1V355.1h1V355.1h1V355.3h1V355.5h1V355.7h1V357.2h-1V357.4h-1V357.5h-1V357.8h-1V358h-1V358.2h-1V358.4h-1V358.2h-1V358.4h-1V358.8h-1V359.2h-1V358.8h-1V359h-1V359.2h-1V360.1h-1V360.5h-1V360.6h-1V360.4h-1V360.5h-1V360.5h-1V360.7h-1V361.6h-1V362.1h-1V360.9h-1V361.3h-1V361h-1V361.5h-1V362.2h-1V361.9h-1V363h-1zM257,356.5V348.4h1V350.8h1V351.4h1V351.1h1V351.8h1V352h1V351.2h1V352.7h1V351.9h1V352.1h1V352.4h1V353.3h1V353.1h1V353.7h1V353.4h1V353.5h1V353.9h1V354h1V354.3h1V354.2h1V354.5h1V354.4h1V354.8h1V354.6h1V355.1h1V355h1V355.3h1V355.4h1V355.6h1V355.7h1V357.3h-1V357.5h-1V357.5h-1V357.7h-1V357.7h-1V358h-1V358.1h-1V358.4h-1V358.3h-1V358.6h-1V359.2h-1V359.4h-1V359.4h-1V359.7h-1V360h-1V359.5h-1V359.9h-1V360h-1V359.8h-1V360h-1V360.6h-1V360.3h-1V360.7h-1V360.8h-1V360.9h-1V361.7h-1V362.2h-1V361.6h-1V361.5h-1V362.3h-1zM295,356.5V348.2h1V350.9h1V349.8h1V350.1h1V350.9h1V350.7h1V351.1h1V351.1h1V351.4h1V351h1V352h1V351.8h1V352h1V352.7h1V353.3h1V353h1V352.8h1V353h1V353.3h1V353.4h1V353.7h1V354.4h1V354.4h1V354.4h1V354.9h1V355.2h1V355.1h1V355.4h1V355.5h1V355.7h1V357.4h-1V357.5h-1V357.7h-1V357.8h-1V358h-1V358.3h-1V358.2h-1V358.6h-1V359h-1V359.2h-1V358.8h-1V359.4h-1V359.9h-1V360h-1V359.7h-1V360.8h-1V360.9h-1V361.3h-1V360.5h-1V361.8h-1V360.7h-1V361.6h-1V361.6h-1V361h-1V362.3h-1V361.8h-1V362.4h-1V362.7h-1V363.8h-1V365h-1zM333,356.5V349h1V351.4h1V352.2h1V350.9h1V352.4h1V352.1h1V351.9h1V352.9h1V352.8h1V352.1h1V353.1h1V353h1V353.3h1V353.1h1V353.3h1V353.9h1V353.6h1V354.2h1V353.7h1V354.3h1V354.1h1V354.4h1V354.8h1V355h1V355.1h1V355.2h1V355.3h1V355.5h1V355.7h1V357.4h-1V357.6h-1V357.8h-1V357.8h-1V358.1h-1V358.2h-1V358.2h-1V358.4h-1V358.7h-1V358.5h-1V359h-1V358.8h-1V359.2h-1V359.1h-1V359.8h-1V359.5h-1V359.7h-1V359.5h-1V360.5h-1V360.7h-1V360.8h-1V361.5h-1V361.6h-1V361.7h-1V360.7h-1V362.1h-1V361.4h-1V361.1h-1V362.4h-1zM371,356.5V349.1h1V350.7h1V350h1V349.7h1V350.3h1V351.2h1V351.4h1V351.6h1V352h1V351.6h1V352.2h1V351.7h1V352.6h1V352.3h1V352.8h1V353.6h1V353.7h1V353.6h1V353.5h1V353.6h1V354.4h1V354.3h1V354.5h1V354.6h1V354.6h1V354.8h1V355.1h1V355.3h1V355.6h1V355.7h1V357.3h-1V357.5h-1V357.8h-1V357.9h-1V357.9h-1V358.4h-1V358.4h-1V358.4h-1V358.6h-1V359h-1V359.5h-1V359.2h-1V359.7h-1V359.6h-1V360.4h-1V360.2h-1V360.8h-1V360.3h-1V360.3h-1V360.3h-1V360.7h-1V361.7h-1V362.4h-1V361.3h-1V361.1h-1V362.4h-1V362.1h-1V362.5h-1V363.6h-1V365.6h-1zM484,356.5V349.9h1V351.3h1V351.5h1V350.4h1V351.7h1V350.9h1V351.8h1V351h1V352.2h1V352.5h1V351.1h1V352.7h1V352h1V352.8h1V352.6h1V353h1V353.1h1V352.7h1V352.5h1V353.1h1V353.4h1V353.2h1V353h1V353.1h1V353.2h1V353.8h1V353.6h1V354.1h1V354.4h1V354.1h1V354.6h1V354.8h1V354.7h1V354.6h1V355h1V355.1h1V355.2h1V355.2h1V355.2h1V348.3h1V350.9h1V351.3h1V350.7h1V351.6h1V351.5h1V351.7h1V352.5h1V352.5h1V351.9h1V352.5h1V352.4h1V352.3h1V352.1h1V353.2h1V352.1h1V352.7h1V353.1h1V353.2h1V353h1V353.5h1V353.4h1V354h1V353.9h1V353.5h1V353.6h1V354.2h1V354.4h1V354h1V354.5h1V354.3h1V354.8h1V354.9h1V354.8h1V354.8h1V354.8h1V355.1h1V350.3h1V351.6h1V351.4h1V351.7h1V351.9h1V352.5h1V353.1h1V352.3h1V353.3h1V352.7h1V353.5h1V353.3h1V353.2h1V353.7h1V353.4h1V353.9h1V353.7h1V353.9h1V353.8h1V354h1V354.2h1V354.5h1V354.6h1V354.7h1V354.8h1V354.7h1V354.9h1V354.8h1V355h1V355h1V355.2h1V355.4h1V355.4h1V355.6h1V355.7h1V355.7h1V357.3h-1V357.4h-1V357.5h-1V357.5h-1V357.7h-1V357.7h-1V357.8h-1V358h-1V358h-1V358.2h-1V358.3h-1V358.3h-1V358.4h-1V358.7h-1V358.9h-1V359.1h-1V359.1h-1V359.4h-1V359.1h-1V358.9h-1V359.8h-1V359.9h-1V359.6h-1V360.2h-1V360.4h-1V359.5h-1V360.2h-1V360.7h-1V359.8h-1V360.2h-1V360.5h-1V360.5h-1V360.7h-1V360.3h-1V361.9h-1V362.1h-1V357.7h-1V358.1h-1V357.9h-1V358.4h-1V358.4h-1V358.6h-1V358.6h-1V358.9h-1V358.7h-1V359.3h-1V359.2h-1V359h-1V359.2h-1V359.1h-1V359.1h-1V359.9h-1V359.7h-1V359.9h-1V359.7h-1V360.2h-1V360.8h-1V359.7h-1V360.3h-1V360.6h-1V360.3h-1V360.5h-1V360.3h-1V360.9h-1V361.2h-1V361.9h-1V361.4h-1V361.3h-1V361.6h-1V361.4h-1V361.5h-1V362.9h-1V363.7h-1V357.8h-1V357.8h-1V358.1h-1V358h-1V358.1h-1V358.5h-1V358.7h-1V358.3h-1V358.7h-1V358.9h-1V359.1h-1V358.6h-1V359.5h-1V359.4h-1V359.4h-1V359.2h-1V359.2h-1V359.7h-1V359.8h-1V359.5h-1V359.8h-1V360h-1V359.8h-1V360.6h-1V360.7h-1V361.2h-1V361h-1V360.8h-1V361.8h-1V361.9h-1V361.4h-1V362.1h-1V362.3h-1V362.3h-1V362.3h-1V361.2h-1V362h-1V362.1h-1V365.2h-1zM598,356.5V349.3h1V350.1h1V351.1h1V350.8h1V351.8h1V352.4h1V351.6h1V352.1h1V351.3h1V351.7h1V351.9h1V352.9h1V352.4h1V352.4h1V352.4h1V352.8h1V352.6h1V353.5h1V353.2h1V353.8h1V353.7h1V354h1V354.3h1V354.3h1V354.4h1V354.2h1V354.3h1V354.6h1V354.7h1V354.9h1V355h1V355.3h1V355.4h1V355.5h1V355.6h1V355.6h1V357.3h-1V357.5h-1V357.5h-1V357.8h-1V358h-1V357.8h-1V358.2h-1V358.2h-1V358.4h-1V358.7h-1V358.4h-1V358.7h-1V358.7h-1V359h-1V358.9h-1V359.1h-1V359h-1V359.3h-1V360.1h-1V360.1h-1V359.8h-1V360.7h-1V360.4h-1V359.9h-1V360.6h-1V360.3h-1V360.2h-1V361.4h-1V360.6h-1V361.4h-1V361.8h-1V362.2h-1V361h-1V361.4h-1V362h-1V364.7h-1zM636,356.5V350.6h1V352.4h1V352.7h1V351.9h1V351.7h1V352.3h1V351.8h1V352.1h1V352.5h1V353.5h1V352.4h1V352.7h1V353.2h1V353.3h1V353.4h1V353.6h1V353.5h1V353.8h1V353.9h1V353.7h1V354.4h1V354.4h1V354.1h1V354.2h1V354.4h1V355h1V354.8h1V354.9h1V354.9h1V355.1h1V355.4h1V355.3h1V355.6h1V355.5h1V355.6h1V355.7h1V357.3h-1V357.4h-1V357.5h-1V357.4h-1V357.8h-1V357.6h-1V358h-1V357.8h-1V358.1h-1V358.3h-1V358.3h-1V358.6h-1V358.8h-1V358.9h-1V358.9h-1V358.7h-1V359h-1V359.1h-1V358.8h-1V359.2h-1V359.1h-1V359.4h-1V359.3h-1V359.3h-1V360.2h-1V360.2h-1V360.2h-1V359.7h-1V359.8h-1V360.2h-1V360h-1V360.1h-1V360.2h-1V361.7h-1V361.8h-1V361.9h-1zM674,356.5V352.8h1V352.5h1V352.6h1V353.3h1V353.7h1V353.5h1V353.3h1V353.3h1V353.8h1V353.9h1V353.9h1V353.6h1V354.1h1V354.2h1V354.3h1V354.4h1V354.4h1V354.2h1V354.2h1V354.8h1V354.7h1V354.7h1V354.8h1V354.7h1V355h1V354.9h1V355.2h1V355.2h1V355.2h1V355.4h1V355.5h1V355.5h1V355.5h1V355.7h1V355.7h1V357.3h-1V357.4h-1V357.4h-1V357.4h-1V357.6h-1V357.7h-1V357.8h-1V357.7h-1V358h-1V358.1h-1V357.9h-1V358.4h-1V358.2h-1V358.6h-1V358.2h-1V358.7h-1V358.6h-1V358.8h-1V358.6h-1V358.6h-1V359.2h-1V359h-1V359.2h-1V359.1h-1V359.3h-1V359h-1V359.8h-1V359.5h-1V359.5h-1V359.8h-1V360.1h-1V359.7h-1V359.9h-1V360.7h-1V360.3h-1zM712,356.5V353h1V353.8h1V353.1h1V353.9h1V353.3h1V353.3h1V353.9h1V354h1V354.3h1V354.1h1V354.2h1V354.4h1V354.1h1V354h1V353.9h1V354.5h1V354.5h1V354.2h1V354.7h1V354.5h1V354.4h1V354.7h1V354.6h1V354.9h1V354.6h1V354.8h1V355.1h1V355.1h1V355.2h1V355.2h1V355.2h1V355.3h1V355.4h1V355.5h1V355.4h1V355.5h1V355.6h1V355.5h1V355.6h1V355.7h1V355.7h1V357.2h-1V357.3h-1V357.4h-1V357.4h-1V357.5h-1V357.6h-1V357.6h-1V357.6h-1V357.6h-1V357.7h-1V357.9h-1V358h-1V357.7h-1V358.1h-1V357.9h-1V358.1h-1V357.9h-1V358.4h-1V358.3h-1V358.4h-1V358.7h-1V358.3h-1V358.4h-1V358.6h-1V358.8h-1V358.4h-1V358.5h-1V358.8h-1V358.9h-1V358.9h-1V358.7h-1V358.7h-1V358.8h-1V359.5h-1V358.9h-1V359.2h-1V359.6h-1V359.6h-1V359.2h-1V359.8h-1V360.8h-1zM825,356.5V347h1V347.2h1V349.1h1V348h1V349.2h1V349.9h1V347.7h1V350.2h1V349.2h1V348.6h1V349.3h1V350.9h1V350.3h1V348h1V351.4h1V349.8h1V348.8h1V349.9h1V349.5h1V349.7h1V347.9h1V349.3h1V348.2h1V348.9h1V348.7h1V348.1h1V349.1h1V348h1V347.5h1V347.9h1V347.2h1V345.2h1V347.9h1V349.9h1V350.6h1V346.7h1V347.9h1V347.8h1V349.9h1V350.1h1V348.1h1V349.8h1V348.3h1V347.1h1V348.3h1V347h1V347.8h1V349h1V347.9h1V348.3h1V349h1V346.6h1V348.1h1V348.1h1V349h1V350.1h1V349.3h1V350.3h1V348.1h1V348.4h1V348.6h1V350.1h1V350h1V350.4h1V349.4h1V347.8h1V350h1V350.4h1V351.3h1V350.7h1V348.2h1V349.6h1V350h1V345.5h1V349.8h1V349.5h1V349.3h1V349h1V350h1V349.9h1V348.4h1V348.9h1V349.9h1V348.6h1V349.3h1V348.4h1V348.6h1V346.5h1V348.4h1V350.2h1V348h1V349.3h1V345.1h1V348.1h1V346.7h1V349.4h1V349.6h1V345.6h1V350.2h1V348.9h1V348.1h1V350.1h1V350.3h1V350.4h1V350h1V349.6h1V349.4h1V350.4h1V348.8h1V350h1V348.9h1V349.2h1V350h1V350h1V348.2h1V350h1V348.6h1V350.3h1V348.7h1V347.8h1V348.6h1V349.3h1V349.1h1V348.4h1V348.3h1V348.1h1V348.2h1V347.9h1V347.8h1V349h1V348.9h1V347.5h1V349.1h1V348.4h1V349.2h1V350.5h1V350.1h1V362.8h-1V363.6h-1V363.4h-1V364.7h-1V364.5h-1V365.5h-1V365.8h-1V366.3h-1V367.2h-1V363.9h-1V363.4h-1V366.5h-1V365.9h-1V365.9h-1V365.5h-1V364.3h-1V364.4h-1V365.9h-1V363.1h-1V363.4h-1V363.9h-1V364.4h-1V363.6h-1V363.1h-1V364.2h-1V363.2h-1V363.7h-1V363.2h-1V363.5h-1V363.9h-1V365h-1V363.2h-1V364.7h-1V363.1h-1V364.4h-1V363.2h-1V364.6h-1V363h-1V363.6h-1V365.5h-1V363.2h-1V365.8h-1V366.1h-1V365.7h-1V368.6h-1V364.6h-1V364.3h-1V363.4h-1V362.4h-1V368.4h-1V363.4h-1V363.9h-1V363.4h-1V363.3h-1V364.3h-1V365.5h-1V362.7h-1V362.3h-1V364h-1V362.5h-1V364.5h-1V363h-1V363.8h-1V364.5h-1V363.7h-1V363.3h-1V364h-1V362.7h-1V361.7h-1V362.8h-1V364h-1V363.7h-1V363.4h-1V364.9h-1V362.9h-1V362.7h-1V364h-1V363.8h-1V363.2h-1V364.2h-1V364.3h-1V364.1h-1V363.9h-1V364.4h-1V365.3h-1V364.5h-1V364.5h-1V364.6h-1V364.6h-1V365h-1V365.4h-1V365.7h-1V362.8h-1V364.2h-1V365.4h-1V364.7h-1V363.4h-1V365.4h-1V364.9h-1V364.4h-1V366h-1V368.1h-1V363.7h-1V365h-1V363.6h-1V365.4h-1V366.1h-1V365.4h-1V365.3h-1V365h-1V363.9h-1V364.4h-1V366h-1V364.1h-1V366h-1V363.5h-1V367.4h-1V363.2h-1V362.2h-1V362.2h-1V362.5h-1V363.6h-1V362.5h-1V364.4h-1V363.4h-1V363.4h-1V363.4h-1V365.7h-1V364.4h-1V364.4h-1V363.4h-1V362.1h-1V362.6h-1V364.6h-1V365.2h-1V363.6h-1V365.8h-1z" fill="#45535d"/><rect x="164" y="387" width="807" height="1" fill="#45535d"/><path d="M181,387.5V378.6h1V381h1V381.3h1V382.4h1V382.1h1V383h1V381.9h1V383.1h1V383.1h1V383h1V383.3h1V383.4h1V383.9h1V384.4h1V383.9h1V383.9h1V384.7h1V384.6h1V385h1V385.3h1V384.9h1V385.5h1V385.8h1V385.6h1V386h1V386h1V386.2h1V386.5h1V386.5h1V386.7h1V388.2h-1V388.4h-1V388.6h-1V388.9h-1V388.7h-1V389.1h-1V389.4h-1V389.2h-1V389.4h-1V390.1h-1V389.8h-1V390.3h-1V389.9h-1V390.4h-1V390.6h-1V391.1h-1V390.8h-1V391.6h-1V392.1h-1V392.4h-1V391.8h-1V391.5h-1V392.7h-1V392.7h-1V392.8h-1V392.8h-1V393.1h-1V394.1h-1V393h-1V394h-1zM219,387.5V380.1h1V381.7h1V381.7h1V381h1V382.7h1V383h1V382.9h1V382.9h1V382.3h1V383.7h1V383.1h1V383h1V384.1h1V384.3h1V384.6h1V384.8h1V384.4h1V385h1V385h1V384.9h1V385.5h1V385.7h1V385.7h1V385.7h1V386h1V386.2h1V386.3h1V386.5h1V386.6h1V386.7h1V388.3h-1V388.3h-1V388.5h-1V388.7h-1V388.9h-1V389.1h-1V389.4h-1V389.3h-1V389.7h-1V389.5h-1V390.3h-1V390.6h-1V389.9h-1V390.6h-1V391.1h-1V391.1h-1V391.3h-1V391.1h-1V392h-1V391.2h-1V391.6h-1V392.3h-1V392.8h-1V392.3h-1V393.5h-1V393h-1V392.5h-1V393.4h-1V394.1h-1V394.5h-1zM257,387.5V381.1h1V381.3h1V382.1h1V381.6h1V382.3h1V382.4h1V383h1V383.1h1V383.2h1V383h1V384h1V384h1V383.6h1V384.4h1V383.9h1V384.3h1V384.4h1V384.9h1V384.7h1V384.9h1V385.6h1V385.2h1V385.7h1V385.7h1V385.8h1V386h1V386.4h1V386.4h1V386.6h1V386.8h1V388.3h-1V388.5h-1V388.5h-1V388.7h-1V388.7h-1V388.8h-1V389.2h-1V389.2h-1V389.5h-1V389.5h-1V390.1h-1V390.4h-1V390.2h-1V390.3h-1V390.7h-1V391h-1V390.5h-1V391.2h-1V390.6h-1V390.7h-1V392.1h-1V391.8h-1V391.9h-1V391.9h-1V392.3h-1V392.8h-1V393.1h-1V392.5h-1V393h-1V393.5h-1zM295,387.5V379h1V381.8h1V380.3h1V382.1h1V381.6h1V381.7h1V383.1h1V382h1V383.3h1V383h1V382.9h1V383h1V382.9h1V383.2h1V384.4h1V384.4h1V384.7h1V384.4h1V384.8h1V384.5h1V384.9h1V384.9h1V385.4h1V385.4h1V385.7h1V386h1V386.3h1V386.2h1V386.6h1V386.7h1V388.3h-1V388.4h-1V388.7h-1V388.8h-1V389.2h-1V389.1h-1V389.3h-1V389.5h-1V389.5h-1V390.1h-1V389.9h-1V390.2h-1V391.1h-1V390.4h-1V390.6h-1V391.6h-1V390.8h-1V391.9h-1V391.5h-1V391.4h-1V393h-1V392.9h-1V392.1h-1V392.3h-1V393.4h-1V393h-1V393.4h-1V394.2h-1V393.9h-1V396h-1zM333,387.5V379.9h1V381.3h1V382.1h1V382.1h1V383.5h1V383.1h1V383.8h1V382.5h1V383.6h1V383.4h1V384.2h1V383.9h1V384h1V384.6h1V384.9h1V385h1V384.8h1V384.8h1V384.9h1V385.6h1V385.6h1V385.8h1V385.5h1V386.1h1V385.9h1V386h1V386.4h1V386.5h1V386.7h1V388.4h-1V388.4h-1V388.6h-1V388.7h-1V389h-1V388.9h-1V389.2h-1V389.2h-1V389.4h-1V390h-1V390.1h-1V390.3h-1V390.6h-1V390.1h-1V391h-1V391h-1V390.6h-1V391.4h-1V391.3h-1V392h-1V391.1h-1V391.6h-1V391.2h-1V392.2h-1V392.3h-1V392.5h-1V392.4h-1V393.2h-1V394.8h-1zM371,387.5V380.5h1V381.1h1V382.2h1V381.6h1V381.9h1V381.8h1V382.6h1V381.8h1V382.9h1V382.2h1V383.3h1V383.5h1V382.9h1V384h1V383.6h1V383.9h1V384.6h1V384.1h1V385.1h1V384.7h1V385.2h1V385h1V385.4h1V385.4h1V385.8h1V386.2h1V386.2h1V386.3h1V386.5h1V386.7h1V388.3h-1V388.4h-1V388.5h-1V388.7h-1V388.9h-1V389.4h-1V389.5h-1V389.8h-1V390h-1V390h-1V390.4h-1V390.7h-1V390.8h-1V390.6h-1V391.4h-1V391.5h-1V391h-1V390.9h-1V392h-1V392.2h-1V391.5h-1V392.4h-1V392.7h-1V391.8h-1V392.3h-1V392.2h-1V393.1h-1V393.7h-1V393.5h-1V394.5h-1zM484,387.5V381h1V380.9h1V382.3h1V381.5h1V381.3h1V382.1h1V383.2h1V383.3h1V383h1V382.5h1V382.5h1V383h1V382.5h1V383.3h1V383.5h1V383.1h1V383.4h1V383.4h1V384.2h1V384.4h1V384.2h1V384h1V384.2h1V384.9h1V385.1h1V384.5h1V384.8h1V385.1h1V385h1V385.4h1V385.6h1V385.5h1V385.5h1V385.8h1V385.8h1V385.8h1V386h1V386.1h1V386.4h1V380.2h1V382.9h1V382.5h1V382.2h1V383.1h1V382.2h1V381.7h1V383h1V382.8h1V383.1h1V383.1h1V383.2h1V382.6h1V383.6h1V383.3h1V384.1h1V383.7h1V384h1V384.2h1V384.5h1V383.9h1V384.8h1V384.1h1V385h1V385h1V384.8h1V384.6h1V385.4h1V385.5h1V385.2h1V385.2h1V385.7h1V385.6h1V385.9h1V386h1V386.2h1V386h1V382.1h1V382.3h1V383.8h1V383.7h1V382.6h1V383.8h1V383.8h1V383.3h1V384h1V383.6h1V384h1V384.6h1V383.9h1V384.2h1V384.6h1V384.1h1V385h1V384.7h1V384.7h1V384.7h1V385.2h1V385.4h1V385.5h1V385.6h1V385.4h1V385.6h1V385.9h1V386h1V386.2h1V386h1V386.3h1V386.4h1V386.4h1V386.6h1V386.7h1V386.8h1V388.3h-1V388.4h-1V388.5h-1V388.5h-1V388.7h-1V388.6h-1V388.8h-1V389.1h-1V389h-1V389.2h-1V389.5h-1V389.6h-1V389.4h-1V389.7h-1V389.7h-1V390h-1V390.3h-1V390.2h-1V390.3h-1V390.5h-1V390.5h-1V390.2h-1V390.5h-1V390.8h-1V390.5h-1V390.5h-1V391.4h-1V391.1h-1V391.7h-1V391h-1V391.7h-1V392.3h-1V391.9h-1V392h-1V392.6h-1V393.7h-1V388.9h-1V389.2h-1V389.2h-1V389.4h-1V389.3h-1V389.2h-1V389.7h-1V389.6h-1V389.5h-1V390.1h-1V389.9h-1V389.7h-1V390.2h-1V390.5h-1V390.7h-1V390.2h-1V390.7h-1V390.3h-1V391.4h-1V390.8h-1V391.5h-1V391.2h-1V391h-1V391h-1V391h-1V391.6h-1V391.8h-1V392.8h-1V392.7h-1V392.2h-1V393h-1V392.9h-1V392h-1V392.8h-1V393.1h-1V393h-1V394.4h-1V388.8h-1V389h-1V389.1h-1V389.1h-1V389.3h-1V389.1h-1V389.6h-1V389.3h-1V389.4h-1V389.4h-1V389.5h-1V389.7h-1V390.4h-1V390.4h-1V390.3h-1V390.1h-1V391.1h-1V390.8h-1V390.5h-1V390.4h-1V391.3h-1V391.9h-1V390.9h-1V391.5h-1V391.4h-1V391.5h-1V392.6h-1V392.4h-1V391.7h-1V391.6h-1V393.3h-1V392.3h-1V391.8h-1V392.5h-1V392.4h-1V392.5h-1V393h-1V394.4h-1V394.7h-1zM598,387.5V381.3h1V382.1h1V381.7h1V382h1V382.7h1V383.2h1V382.2h1V383.6h1V382.8h1V383.9h1V383.5h1V383.6h1V383.1h1V384.2h1V384.4h1V384.5h1V384.3h1V383.8h1V384h1V384.3h1V384.7h1V384.7h1V385h1V385.1h1V385.1h1V385.2h1V385.8h1V385.9h1V385.6h1V386h1V386h1V386.1h1V386.2h1V386.6h1V386.6h1V386.7h1V388.3h-1V388.5h-1V388.6h-1V388.8h-1V388.8h-1V388.9h-1V389.1h-1V389.1h-1V389.1h-1V389.3h-1V389.8h-1V389.8h-1V390h-1V389.9h-1V389.9h-1V390.5h-1V390.6h-1V391h-1V390.8h-1V390.5h-1V390.5h-1V391.2h-1V391.7h-1V391.5h-1V392.2h-1V392.4h-1V391.7h-1V391.7h-1V392.1h-1V392.5h-1V391.7h-1V392h-1V393.3h-1V392h-1V392.6h-1V394h-1zM636,387.5V381.2h1V382.6h1V383h1V383.2h1V383h1V383.9h1V383.5h1V384.3h1V383.3h1V384.3h1V383.4h1V383.8h1V383.7h1V384.8h1V384.7h1V384.2h1V385h1V385h1V384.7h1V385.1h1V385.2h1V385.3h1V385.2h1V385.4h1V385.9h1V385.8h1V386h1V385.7h1V386.2h1V386.2h1V386.4h1V386.3h1V386.5h1V386.6h1V386.7h1V386.7h1V388.2h-1V388.4h-1V388.5h-1V388.5h-1V388.6h-1V388.8h-1V388.8h-1V388.9h-1V389.2h-1V389.1h-1V389h-1V389.3h-1V389.3h-1V389.5h-1V389.9h-1V389.8h-1V389.9h-1V390.3h-1V390.3h-1V390.2h-1V390.4h-1V390.9h-1V390.3h-1V390.4h-1V391.3h-1V390.6h-1V391.5h-1V391.1h-1V392h-1V391.6h-1V391.2h-1V391.1h-1V391.5h-1V391.5h-1V391.9h-1V393.4h-1zM674,387.5V383.5h1V383.6h1V384.2h1V384.2h1V383.8h1V383.9h1V384.2h1V384h1V384h1V384.3h1V384.9h1V384.5h1V385.1h1V384.7h1V385.4h1V385.3h1V384.9h1V385.1h1V385.6h1V385.6h1V385.8h1V385.7h1V385.8h1V385.9h1V385.9h1V386h1V386.2h1V386.2h1V386.4h1V386.3h1V386.3h1V386.5h1V386.7h1V386.6h1V386.7h1V388.3h-1V388.4h-1V388.4h-1V388.5h-1V388.5h-1V388.5h-1V388.6h-1V388.8h-1V388.7h-1V388.9h-1V389h-1V388.9h-1V389.3h-1V389.3h-1V389.2h-1V389.3h-1V389.7h-1V389.4h-1V389.8h-1V389.8h-1V389.8h-1V390h-1V390.4h-1V390.4h-1V390.2h-1V390h-1V390.2h-1V390.2h-1V391.1h-1V391.2h-1V390.6h-1V390.9h-1V391h-1V391.4h-1V391.7h-1zM712,387.5V383.4h1V384.2h1V384.1h1V384.4h1V384.6h1V384.7h1V384.5h1V384.6h1V384.8h1V385.3h1V385.1h1V385.3h1V385.4h1V385.2h1V385.4h1V385.6h1V385.2h1V385.3h1V385.7h1V385.4h1V385.4h1V385.9h1V385.8h1V385.6h1V386h1V386h1V386.1h1V386.1h1V386.1h1V386h1V386.1h1V386.3h1V386.3h1V386.3h1V386.3h1V386.6h1V386.6h1V386.5h1V386.7h1V386.6h1V386.7h1V388.2h-1V388.4h-1V388.3h-1V388.4h-1V388.5h-1V388.5h-1V388.5h-1V388.6h-1V388.7h-1V388.7h-1V388.9h-1V389h-1V389h-1V389h-1V389h-1V389.2h-1V389.1h-1V389.4h-1V389.1h-1V389.3h-1V389.4h-1V389.2h-1V389.6h-1V389.4h-1V389.9h-1V389.5h-1V390h-1V390h-1V390.1h-1V390h-1V390.3h-1V390h-1V390.5h-1V390.3h-1V389.8h-1V390.6h-1V390.4h-1V390.4h-1V390.7h-1V390.9h-1V391.3h-1zM825,387.5V377.9h1V378.7h1V379.5h1V378.2h1V380.7h1V381.5h1V381h1V380.9h1V378.4h1V378.3h1V379.4h1V380.4h1V380.2h1V378.4h1V382.4h1V380.8h1V379.7h1V380.3h1V380.8h1V381.1h1V376.6h1V379.5h1V380.3h1V379.3h1V380.3h1V379.4h1V380h1V380.1h1V378.7h1V380.9h1V378.5h1V376.9h1V380.3h1V379.7h1V379.9h1V376.4h1V378.3h1V379.1h1V379.7h1V379.6h1V379.1h1V380.3h1V379.1h1V376.8h1V378.9h1V377.6h1V378.5h1V381.5h1V379.8h1V379.2h1V377.7h1V379.2h1V380.7h1V379.9h1V379.9h1V381.1h1V381.5h1V381.3h1V380.8h1V380.5h1V380.6h1V381.1h1V380.3h1V379.6h1V379.6h1V380.9h1V379.5h1V379.6h1V382.1h1V381.1h1V381.4h1V380.4h1V378.9h1V379.6h1V381.3h1V381.6h1V381.1h1V379.9h1V380.2h1V381.5h1V381.2h1V380.1h1V379.1h1V379.6h1V382.2h1V381.2h1V378.4h1V377.6h1V379.9h1V379.9h1V379h1V378.4h1V377.2h1V378.6h1V378.2h1V379.6h1V380h1V377h1V381.4h1V379.1h1V380.1h1V381.8h1V380.6h1V379.2h1V381h1V381.5h1V380.1h1V381.2h1V380.8h1V380.5h1V381.1h1V379.6h1V380h1V380.4h1V379.6h1V381.5h1V379.7h1V380.9h1V380.7h1V380.8h1V381.3h1V380.5h1V379.7h1V379.8h1V378.3h1V377.1h1V380.1h1V380h1V379.4h1V378.1h1V378.3h1V378.9h1V379.2h1V380.9h1V381.4h1V381.9h1V381.5h1V392.7h-1V394.6h-1V394.3h-1V394.9h-1V394.4h-1V396.8h-1V396.7h-1V394.4h-1V396.1h-1V396.8h-1V395.9h-1V396.1h-1V394.9h-1V395.8h-1V394.8h-1V393.7h-1V396h-1V394.9h-1V395.8h-1V392.9h-1V395.3h-1V395.5h-1V394.1h-1V395h-1V393.8h-1V393.3h-1V395.6h-1V393.4h-1V395.6h-1V395.3h-1V394.7h-1V393.2h-1V394h-1V394.1h-1V394.5h-1V392.9h-1V393.5h-1V396.5h-1V396.2h-1V397.2h-1V396.3h-1V397.3h-1V395.9h-1V395.9h-1V399.7h-1V396.5h-1V394.3h-1V396.2h-1V393.4h-1V395.8h-1V395.6h-1V396.1h-1V394.7h-1V394.9h-1V393.7h-1V395h-1V395.1h-1V394.8h-1V394.9h-1V395.3h-1V394.8h-1V394.1h-1V393.6h-1V397.5h-1V394.4h-1V394h-1V395.8h-1V393.8h-1V393.9h-1V394.9h-1V395.7h-1V394.4h-1V395.1h-1V395.1h-1V394.5h-1V393.7h-1V393.2h-1V393.9h-1V394.7h-1V395.1h-1V393h-1V394.8h-1V397h-1V396.2h-1V395.7h-1V396.1h-1V395.2h-1V395.4h-1V397.2h-1V394.3h-1V395h-1V395.7h-1V395.8h-1V396.8h-1V395.4h-1V393.7h-1V395.2h-1V395.4h-1V394h-1V396.4h-1V397.2h-1V398.3h-1V395.7h-1V393.6h-1V393.9h-1V397.1h-1V396.9h-1V396.6h-1V395.6h-1V395.6h-1V395h-1V395.1h-1V394.3h-1V395.3h-1V395.5h-1V394.6h-1V397.8h-1V392.6h-1V393.5h-1V394.7h-1V393.9h-1V395.2h-1V394h-1V394.2h-1V395.1h-1V393.3h-1V395.6h-1V396.5h-1V396.6h-1V394.1h-1V396.3h-1V394.3h-1V394.7h-1V396h-1V395.6h-1V395.6h-1V397.1h-1z" fill="#45535d"/><rect x="174" y="405" width="637" height="61" fill="#fba87b"/><rect x="163.5" y="466" width="648" height="1" fill="#0a0a0a"/><rect x="334" y="405" width="225" height="61" fill="#9fa6bf"/><polygon points="164,410 169,405 173,405 173,466 164,466" fill="url(#pguitars)"/><rect x="173" y="405" width="1" height="61" fill="#15222a"/><rect x="164" y="420" width="647" height="1" fill="#7b5546"/><path d="M181,420.5V416.2h1V413.3h1V413.1h1V410.4h1V412.5h1V415.7h1V416.6h1V414.1h1V415.2h1V416.8h1V415.8h1V413.4h1V415.8h1V415.3h1V415.2h1V412.8h1V414.2h1V413.4h1V415.2h1V415.5h1V413h1V414h1V411.7h1V414.7h1V413.5h1V414.4h1V415.7h1V414.2h1V416.5h1V415.5h1V415.2h1V414.3h1V412.6h1V413.1h1V412.7h1V415.1h1V415h1V415.8h1V414.5h1V412.8h1V414.6h1V412.3h1V414.7h1V415.5h1V416.5h1V414.2h1V414h1V414.1h1V414.8h1V413.4h1V416.1h1V415.3h1V409.8h1V414.3h1V416h1V413.9h1V415.5h1V415.4h1V414.6h1V415.2h1V414.4h1V414.9h1V415.3h1V415.6h1V413.7h1V416.2h1V416.4h1V416.3h1V412.1h1V415.3h1V414.8h1V415.7h1V415h1V415.1h1V413.4h1V413.6h1V415.7h1V413.6h1V414.9h1V412.1h1V413.6h1V413.5h1V414.3h1V412.3h1V415.1h1V411.3h1V414.8h1V415.3h1V415.6h1V412.6h1V414.3h1V413h1V414.9h1V413.3h1V415.5h1V415.8h1V414.4h1V415.3h1V415.3h1V411.4h1V414.9h1V415.8h1V414.3h1V414.7h1V412.2h1V415.4h1V415.4h1V415.7h1V414.6h1V415.1h1V414.4h1V415.2h1V412.3h1V413.3h1V415.9h1V414.5h1V414.6h1V415.6h1V411.4h1V415.9h1V416.8h1V415.7h1V414.3h1V416.4h1V415.5h1V416.6h1V413.9h1V412.8h1V413.5h1V412.6h1V414.8h1V413h1V414.7h1V416.2h1V415.7h1V415.8h1V413.8h1V412.4h1V414.3h1V415.7h1V414.5h1V413.5h1V412h1V414.7h1V415h1V414.4h1V411.3h1V411.8h1V415.3h1V416.1h1V414h1V415.1h1V415.3h1V416.9h1V416.7h1V414.3h1V409.1h1V413.4h1V415.4h1V415.8h1V414h1V414.3h1V415.4h1V413.4h1V415.3h1V415.3h1V415.5h1V415.6h1V413.5h1V412.3h1V413.5h1V413.9h1V414.4h1V415.3h1V415.8h1V414.7h1V413.6h1V412.4h1V413h1V413.6h1V411.5h1V413.7h1V415h1V415.5h1V415.1h1V415.8h1V414.1h1V412.9h1V410.8h1V413.7h1V414h1V414.3h1V415.7h1V416.5h1V412.9h1V413.7h1V414.5h1V415.2h1V414.5h1V413.9h1V414.8h1V416.8h1V416.4h1V412.9h1V414.4h1V415h1V414.5h1V415h1V411.9h1V414.5h1V412.8h1V412.9h1V415.3h1V411.6h1V413.5h1V413.7h1V414.6h1V414.5h1V416h1V414.6h1V411.6h1V413.5h1V412.7h1V409.8h1V412.7h1V411.5h1V412.6h1V415.8h1V414.1h1V417h1V417.3h1V417.9h1V416.8h1V417.5h1V416.9h1V417.5h1V418.7h1V418.1h1V418.1h1V418h1V418.7h1V418.6h1V418.5h1V418.9h1V418.6h1V419.5h1V419.2h1V419.4h1V419.6h1V419.7h1V419.8h1V421.3h-1V421.3h-1V421.4h-1V421.5h-1V421.8h-1V421.7h-1V422.1h-1V422.1h-1V422.1h-1V422.6h-1V422.1h-1V422.9h-1V422.6h-1V422.6h-1V422.3h-1V423.7h-1V424.1h-1V423.6h-1V424.2h-1V423.1h-1V423.9h-1V424h-1V426.5h-1V425.1h-1V427.3h-1V429h-1V427.9h-1V431h-1V428.5h-1V426.8h-1V428.6h-1V426.2h-1V424.8h-1V427.4h-1V426.1h-1V427.1h-1V428.3h-1V427.7h-1V426.8h-1V426.3h-1V426.6h-1V428.4h-1V427.5h-1V428.1h-1V426.3h-1V425h-1V425.4h-1V426.9h-1V424.7h-1V424.8h-1V425.8h-1V426.5h-1V426.1h-1V425.5h-1V425.5h-1V426.3h-1V429.7h-1V425.1h-1V425h-1V425.9h-1V427.6h-1V426.5h-1V429.3h-1V426.9h-1V427.9h-1V426.4h-1V426.8h-1V426.3h-1V424.8h-1V426.1h-1V430h-1V427.6h-1V427.1h-1V430.5h-1V426.7h-1V426.5h-1V426.1h-1V425.5h-1V428.1h-1V426.3h-1V426.4h-1V427h-1V427.9h-1V426.3h-1V425.8h-1V425.6h-1V424.8h-1V426.4h-1V426.2h-1V425.8h-1V426.1h-1V425.4h-1V425.3h-1V427h-1V430.7h-1V427.1h-1V424.4h-1V424.4h-1V426.4h-1V426.2h-1V425.8h-1V425h-1V427.8h-1V428.7h-1V429.8h-1V426.4h-1V425.9h-1V427.7h-1V431.1h-1V428.1h-1V427.6h-1V425h-1V428.5h-1V428.7h-1V426.9h-1V424.6h-1V425.2h-1V424.9h-1V425.9h-1V430.1h-1V426.9h-1V427.5h-1V429.3h-1V427.7h-1V427.3h-1V425.1h-1V426.2h-1V424.9h-1V426.3h-1V424.6h-1V425.7h-1V426.6h-1V431.2h-1V424.5h-1V425.1h-1V426h-1V425.7h-1V426.6h-1V427.9h-1V427.1h-1V426.4h-1V425.7h-1V426.1h-1V424.8h-1V425.4h-1V426.9h-1V427.8h-1V425.7h-1V425.8h-1V426.7h-1V426.1h-1V429.8h-1V424.9h-1V425.5h-1V427.4h-1V426.2h-1V425.9h-1V426.8h-1V425.8h-1V427.9h-1V425.9h-1V428h-1V425.3h-1V426h-1V427.7h-1V429.5h-1V426.5h-1V428.9h-1V427.6h-1V426.7h-1V427.2h-1V428.8h-1V426h-1V428.5h-1V426h-1V426.2h-1V428.2h-1V425.3h-1V426.1h-1V425.2h-1V426.9h-1V425.9h-1V428.6h-1V424.9h-1V425.6h-1V426h-1V426.4h-1V425.3h-1V425.1h-1V425.5h-1V428.1h-1V426.2h-1V427.8h-1V426.5h-1V426.1h-1V426.7h-1V425.7h-1V428.3h-1V428.6h-1V427.5h-1V424.5h-1V425.9h-1V425.9h-1V426.3h-1V426.3h-1V427.7h-1V424.7h-1V425.5h-1V425.8h-1V429.1h-1V425.8h-1V427.6h-1V425.8h-1V425.2h-1V425.2h-1V425.4h-1V427.7h-1V426.8h-1V427.4h-1V426.5h-1V426.5h-1V426.4h-1V425.2h-1V425.9h-1V426.5h-1V427.4h-1V427.5h-1V425.9h-1V430.8h-1V425.6h-1V427.3h-1V425h-1V424.8h-1V427.6h-1V427.8h-1V428.5h-1V427.8h-1V426.4h-1V425.5h-1V427.7h-1V425.3h-1V424.2h-1V427h-1V426.6h-1V425.6h-1V425.5h-1V426.6h-1V433h-1V429.6h-1V427.7h-1V426.3h-1z" fill="#7b5546"/><rect x="164" y="451" width="647" height="1" fill="#7b5546"/><path d="M181,451.5V446.5h1V445.6h1V444.8h1V441.9h1V444.4h1V445.8h1V446.6h1V444.5h1V445.8h1V447.1h1V446.6h1V444.1h1V446.7h1V445.3h1V444.9h1V444.4h1V445.5h1V446h1V447.4h1V446.1h1V444.9h1V445.8h1V443.2h1V446.8h1V446h1V444.4h1V445.4h1V446.3h1V447.2h1V446.3h1V446.2h1V446.3h1V444.7h1V442.9h1V443.6h1V445h1V445.7h1V446.3h1V445.1h1V444h1V446.4h1V440.8h1V447h1V447.2h1V446.9h1V445.2h1V446.3h1V444.9h1V445.9h1V444.4h1V446.9h1V445.2h1V441.5h1V445.2h1V446.9h1V446.2h1V447h1V445.5h1V446h1V447.3h1V445h1V445.5h1V446.6h1V446.8h1V445.2h1V447.2h1V446.7h1V447.6h1V443.1h1V446.8h1V445.8h1V447.4h1V445.8h1V447.1h1V445.7h1V445.2h1V445.1h1V445h1V447h1V444.8h1V444.1h1V443.5h1V443.8h1V444.5h1V445.9h1V442.9h1V445.7h1V445.6h1V447h1V441.8h1V445.4h1V444.1h1V445.7h1V444.9h1V446h1V446.3h1V445.5h1V445.9h1V446.4h1V441.4h1V446.1h1V446.2h1V446.8h1V446h1V444.4h1V444.5h1V447.3h1V447.6h1V446.2h1V446.8h1V446.4h1V445h1V444.6h1V445.6h1V445.5h1V445.3h1V445.9h1V447.7h1V441.6h1V446.9h1V447.6h1V447.1h1V446.5h1V446.4h1V447.3h1V446.4h1V445.5h1V443.7h1V443.4h1V443.2h1V446.6h1V440.8h1V446.4h1V446.1h1V447.4h1V446.2h1V444.9h1V443.5h1V443.8h1V446.8h1V445h1V444h1V441.9h1V445.7h1V445.1h1V446.6h1V442h1V443.9h1V444.8h1V445.9h1V446.3h1V445.3h1V446.2h1V447.8h1V446.5h1V444.2h1V442.7h1V445.7h1V447.5h1V446.5h1V446.1h1V445.9h1V446.7h1V445h1V446.9h1V445.8h1V446.3h1V446.5h1V445.3h1V445.3h1V445h1V444.8h1V443h1V445.8h1V445.7h1V445.7h1V444.8h1V440.7h1V445.1h1V445h1V444.3h1V445.8h1V445.6h1V445.1h1V444.3h1V446.5h1V446.1h1V445.4h1V444.1h1V445.6h1V444.3h1V445.6h1V446.3h1V446.9h1V442h1V445.7h1V446.1h1V445.1h1V445.2h1V446.2h1V446.8h1V447.1h1V447.2h1V444.5h1V445.7h1V447h1V445.2h1V444.6h1V444.2h1V444.2h1V445.2h1V444.5h1V445.6h1V442.8h1V443.6h1V445.7h1V444.6h1V443.7h1V447.3h1V446h1V444.1h1V445.1h1V445.6h1V441.6h1V445.5h1V440.1h1V443h1V447.3h1V445.1h1V447.6h1V448.8h1V449.1h1V448.3h1V448.2h1V447.7h1V449.2h1V449.7h1V449.5h1V449.6h1V449.1h1V449.4h1V449.4h1V449.8h1V450h1V449.6h1V450.4h1V450.2h1V450.6h1V450.6h1V450.6h1V450.7h1V452.3h-1V452.3h-1V452.3h-1V452.5h-1V453h-1V452.6h-1V453.2h-1V452.9h-1V453.4h-1V453.8h-1V453.6h-1V453.7h-1V453.6h-1V453.6h-1V453.3h-1V454.2h-1V454.9h-1V454h-1V455.8h-1V454.4h-1V454.1h-1V454.9h-1V457.9h-1V456.2h-1V458.2h-1V462.6h-1V459.3h-1V460.1h-1V457.6h-1V458.1h-1V458.9h-1V458.1h-1V455.2h-1V457.6h-1V457.1h-1V457.6h-1V458.4h-1V458.2h-1V456.8h-1V457.7h-1V458.8h-1V457.6h-1V457.5h-1V457.4h-1V459.2h-1V456.6h-1V457.8h-1V457.7h-1V455.5h-1V455.6h-1V456.9h-1V458.6h-1V456.5h-1V456.1h-1V456.6h-1V457.2h-1V459.6h-1V455.9h-1V456.3h-1V456.4h-1V458.6h-1V459.3h-1V458.9h-1V458.5h-1V459.1h-1V456.9h-1V456.7h-1V457.2h-1V456.3h-1V456.5h-1V461.1h-1V457.3h-1V457.5h-1V461.9h-1V457.6h-1V457.1h-1V456.3h-1V457h-1V459.5h-1V459.1h-1V458.1h-1V458.7h-1V458.9h-1V457.1h-1V456.8h-1V457h-1V456h-1V457.5h-1V457.4h-1V457h-1V458.3h-1V455.8h-1V455.2h-1V458.5h-1V461h-1V457.1h-1V456.7h-1V456.3h-1V456.4h-1V458.6h-1V456.8h-1V456.7h-1V456.9h-1V459.6h-1V462.1h-1V457.6h-1V456.8h-1V458.8h-1V462.4h-1V459.4h-1V457.9h-1V457h-1V459h-1V459.2h-1V456.9h-1V456.7h-1V457h-1V456h-1V457.8h-1V459h-1V456.7h-1V457.7h-1V458.2h-1V459.3h-1V457.1h-1V456.3h-1V456.4h-1V455.5h-1V457.1h-1V455.9h-1V456.4h-1V457.4h-1V460.9h-1V456.4h-1V456.3h-1V458.4h-1V457h-1V457.5h-1V460.4h-1V458.1h-1V456.3h-1V456.1h-1V456.3h-1V455.9h-1V457h-1V458.1h-1V460.5h-1V456.5h-1V456.2h-1V456.6h-1V456.6h-1V462.6h-1V455.5h-1V456.5h-1V457.9h-1V456.3h-1V455.7h-1V458.1h-1V457.7h-1V459.3h-1V458.7h-1V459.3h-1V456.3h-1V457.6h-1V458h-1V461.1h-1V457.6h-1V459h-1V457.7h-1V458.5h-1V458.1h-1V461h-1V456.1h-1V458.3h-1V457.3h-1V457.3h-1V458.9h-1V456.4h-1V457.8h-1V456.3h-1V456.9h-1V456.5h-1V460.1h-1V456.8h-1V455.6h-1V456.4h-1V458.9h-1V457.9h-1V456.2h-1V457h-1V457.5h-1V455.9h-1V458.5h-1V456.3h-1V457h-1V456.4h-1V455.9h-1V458.2h-1V459.4h-1V458.2h-1V456.8h-1V456.7h-1V457.4h-1V457.8h-1V458h-1V457.4h-1V457h-1V456.5h-1V457h-1V461.4h-1V456.7h-1V457.3h-1V456.5h-1V456.7h-1V456.2h-1V456.9h-1V459.6h-1V459.6h-1V459.7h-1V457.5h-1V458.4h-1V457.3h-1V455.8h-1V456.6h-1V456.4h-1V457.3h-1V458.6h-1V457h-1V461.9h-1V457.3h-1V459.3h-1V457.3h-1V455.5h-1V457.3h-1V458h-1V458.6h-1V457.4h-1V458.2h-1V457.4h-1V457.8h-1V455.3h-1V456.4h-1V457.8h-1V456.9h-1V456.2h-1V458.3h-1V458.9h-1V463.4h-1V458.5h-1V458.2h-1V457.1h-1z" fill="#7b5546"/><rect x="174" y="435" width="637" height="1" fill="#5d5248"/><rect x="813" y="405" width="157" height="61" fill="#fba87b"/><rect x="812.5" y="466" width="167" height="1" fill="#0a0a0a"/><rect x="970" y="445.5" width="9" height="20.5" fill="#fba87b"/><polygon points="971,405 974,405 979,410 979,445.5 971,445.5" fill="url(#pguitars)"/><rect x="970" y="405" width="1" height="61" fill="#101418"/><path d="M971.2,405.3 C975,412 974.5,429 976.5,445.5" fill="none" stroke="#0a1ef0" stroke-width="1.2"/><rect x="813" y="420" width="166" height="1" fill="#7b5546"/><path d="M851,420.5V414.6h1V414.6h1V415h1V414.1h1V415.7h1V415.5h1V414.3h1V415.6h1V415.6h1V414.8h1V413.9h1V415.4h1V411.3h1V411h1V413h1V413.7h1V413.6h1V413.4h1V415h1V413.2h1V414.9h1V414h1V414.2h1V413.9h1V413.1h1V414.6h1V414.5h1V413.7h1V413h1V414.4h1V414h1V415.1h1V415.5h1V413.7h1V415.4h1V414.7h1V415h1V412.6h1V414.3h1V415.9h1V412.3h1V415.1h1V413.3h1V415.1h1V413.7h1V415.4h1V413.2h1V413.5h1V414.9h1V413.3h1V414.6h1V413.5h1V414.3h1V413.6h1V414.4h1V415h1V414.3h1V413.9h1V413h1V414.7h1V415.4h1V414.6h1V414.4h1V414h1V415.6h1V415.2h1V414.4h1V414.3h1V414.4h1V414.4h1V414h1V413.7h1V415h1V414.6h1V414.1h1V415.3h1V415.7h1V415.3h1V415.6h1V414.8h1V414.4h1V415.1h1V415.3h1V416h1V414.9h1V413.6h1V413.9h1V415.4h1V414.1h1V413.4h1V415.3h1V414.1h1V414.7h1V414.8h1V414.8h1V415.6h1V415.8h1V415.6h1V413.9h1V413.9h1V412.5h1V414.3h1V415h1V414.6h1V410.7h1V415.5h1V414.2h1V415.6h1V414.6h1V414.8h1V413.2h1V426.3h-1V425h-1V426.3h-1V426.9h-1V425.5h-1V427h-1V429.8h-1V427.3h-1V427.3h-1V425.8h-1V428.4h-1V426.2h-1V426.5h-1V425.4h-1V425.9h-1V426.8h-1V426.5h-1V428.1h-1V427.3h-1V427.1h-1V425.7h-1V427.6h-1V427.6h-1V425.8h-1V425.5h-1V427.1h-1V425.9h-1V425.4h-1V426.5h-1V426h-1V426.2h-1V425h-1V425.7h-1V425.9h-1V426h-1V426.6h-1V426.9h-1V425.7h-1V425.7h-1V426h-1V427.2h-1V427h-1V425.7h-1V425.6h-1V425.4h-1V427.4h-1V425.9h-1V425.4h-1V425.8h-1V427.5h-1V426.7h-1V427h-1V428.1h-1V427.1h-1V427.9h-1V427.2h-1V427.2h-1V428.1h-1V426.5h-1V427.3h-1V426.9h-1V426.1h-1V427h-1V426h-1V427.2h-1V426.2h-1V425.6h-1V427.2h-1V425.7h-1V426.2h-1V428.6h-1V426.8h-1V427.3h-1V426.9h-1V426.9h-1V426.5h-1V425.5h-1V426.7h-1V425.7h-1V425.5h-1V426.5h-1V426.8h-1V425.9h-1V427.1h-1V426.5h-1V426.7h-1V426.3h-1V425.3h-1V427.5h-1V426.7h-1V426.7h-1V428.1h-1V426.1h-1V425.6h-1V427.8h-1V428.3h-1V427.8h-1V430h-1V429.7h-1V426.8h-1V427.7h-1V425.5h-1V425.9h-1V426.2h-1V425.4h-1V426.3h-1V425.9h-1V425.6h-1V426h-1V426.6h-1V426.8h-1z" fill="#7b5546"/><rect x="813" y="451" width="157" height="1" fill="#7b5546"/><path d="M825,451.5V445.4h1V445.7h1V444.4h1V445.3h1V446.3h1V445.9h1V445.8h1V444.5h1V445.9h1V444.6h1V446.1h1V445.8h1V446.4h1V446.1h1V446.2h1V446.1h1V446.6h1V442.8h1V444.3h1V446.6h1V444.4h1V445.1h1V445.5h1V443.6h1V444.2h1V446.3h1V445.1h1V446.6h1V445.3h1V446.2h1V444.6h1V444.4h1V445.2h1V444.9h1V445.8h1V445.9h1V445.2h1V444.6h1V445.2h1V444.9h1V446.2h1V447.2h1V445.9h1V446.3h1V445.3h1V444.6h1V445.7h1V444.4h1V444.8h1V442.8h1V444.8h1V444.4h1V445.4h1V445.2h1V445.9h1V444.9h1V445.2h1V445.1h1V446.4h1V444.6h1V446.7h1V444.2h1V446.5h1V446.2h1V446h1V442h1V444.9h1V442.9h1V446.5h1V445.8h1V446.5h1V446.3h1V446.6h1V445.2h1V445.4h1V446.3h1V443.7h1V445.3h1V446.1h1V445.1h1V442.7h1V445.7h1V443.9h1V446h1V445.1h1V443.6h1V445.7h1V446.3h1V446.7h1V447h1V445.8h1V445.3h1V444.6h1V445.1h1V445.8h1V446.3h1V446h1V445.7h1V445.9h1V444.2h1V446.3h1V444.5h1V445.9h1V444.9h1V445.1h1V444.8h1V445.2h1V444.8h1V444.9h1V444.7h1V444.7h1V443.4h1V444.8h1V444.8h1V445.7h1V458.4h-1V457.8h-1V457.7h-1V460.9h-1V457h-1V459.1h-1V457.5h-1V458.2h-1V458h-1V458.7h-1V456.8h-1V458h-1V458.3h-1V456.5h-1V456.8h-1V458.7h-1V459h-1V457h-1V457.2h-1V456.7h-1V456.2h-1V456.7h-1V457.2h-1V457.5h-1V458.3h-1V456.1h-1V457.1h-1V456.7h-1V456.8h-1V458.8h-1V457.1h-1V456.8h-1V461h-1V456h-1V459.9h-1V456.8h-1V457.3h-1V458.5h-1V461h-1V456.5h-1V455.9h-1V457.7h-1V457.2h-1V457.3h-1V456h-1V456.7h-1V457.6h-1V458.5h-1V458.7h-1V460.6h-1V458.4h-1V456.5h-1V457.4h-1V457.4h-1V457.3h-1V458h-1V457.1h-1V456.7h-1V457h-1V457.3h-1V458.2h-1V458.9h-1V457.8h-1V457.5h-1V458.8h-1V461.9h-1V458.2h-1V458.5h-1V457h-1V457.9h-1V459.2h-1V457.7h-1V456.8h-1V457.2h-1V457h-1V456.7h-1V457.4h-1V458.3h-1V458.3h-1V457.5h-1V457.7h-1V458.6h-1V458.9h-1V458.6h-1V456.8h-1V457h-1V457.5h-1V458.4h-1V456.8h-1V457.8h-1V459.2h-1V461h-1V457.1h-1V457.8h-1V457.2h-1V458h-1V458.9h-1V459h-1V458.1h-1V457.9h-1V458h-1V457.3h-1V457.2h-1V457.5h-1V456.4h-1V459.9h-1V456.2h-1V458.2h-1V456.3h-1V456.5h-1V457.1h-1V458.8h-1V458.4h-1V457.4h-1V457.1h-1zM946,451.5V450.3h1V452.5h-1zM950,451.5V450.3h1V452.6h-1zM955,451.5V450.3h1V452.5h-1z" fill="#7b5546"/><rect x="813" y="435" width="166" height="1" fill="#5d5248"/><rect x="0" y="469" width="415" height="59" fill="#c48693"/><rect x="-0.5" y="528" width="416" height="1" fill="#0a0a0a"/><rect x="334" y="469" width="81" height="59" fill="#7f93c4"/><rect x="0" y="482" width="415" height="1" fill="#e2c8cf"/><path d="M0,482.5V481.7h1V481.7h1V481.7h1V483.3h-1V483.4h-1V483.3h-1zM5,482.5V481.5h1V481.6h1V481.7h1V483.3h-1V483.4h-1V483.4h-1zM9,482.5V481.5h1V481.6h1V483.5h-1V483.5h-1zM12,482.5V481.6h1V481.5h1V481.4h1V481.8h1V481.7h1V481.6h1V483.4h-1V483.2h-1V483.3h-1V483.4h-1V483.6h-1V483.3h-1zM21,482.5V481.7h1V483.3h-1zM23,482.5V481.7h1V483.3h-1zM25,482.5V481.7h1V483.3h-1zM31,482.5V480.2h1V480.3h1V480.5h1V480.6h1V480.9h1V480.9h1V481h1V481.1h1V481.3h1V481.5h1V481.6h1V481.7h1V481.6h1V481.6h1V483.4h-1V483.3h-1V483.3h-1V483.3h-1V483.6h-1V483.7h-1V483.6h-1V483.7h-1V483.9h-1V484h-1V484.2h-1V484.4h-1V484.3h-1V485.3h-1zM46,482.5V481.6h1V483.3h-1zM48,482.5V481.8h1V483.3h-1zM51,482.5V481.5h1V481.4h1V481.7h1V481.6h1V483.3h-1V483.3h-1V483.4h-1V483.6h-1zM56,482.5V481.6h1V483.4h-1zM58,482.5V481.5h1V481.6h1V481.6h1V481.4h1V483.6h-1V483.5h-1V483.5h-1V483.5h-1zM69,482.5V479.9h1V480.4h1V480.5h1V480.3h1V480.7h1V480.8h1V481h1V481h1V481.3h1V481.4h1V481.5h1V481.7h1V481.4h1V481.7h1V481.4h1V481.5h1V483.4h-1V483.6h-1V483.3h-1V483.5h-1V483.3h-1V483.4h-1V483.7h-1V483.8h-1V483.9h-1V484.1h-1V484.4h-1V484.5h-1V484.6h-1V484.9h-1V485.1h-1V485.1h-1zM86,482.5V481.7h1V483.3h-1zM89,482.5V481.5h1V483.5h-1zM91,482.5V481.7h1V481.6h1V481.5h1V481.6h1V483.4h-1V483.6h-1V483.3h-1V483.4h-1zM96,482.5V481.7h1V483.2h-1zM98,482.5V481.4h1V481.5h1V483.6h-1V483.6h-1zM107,482.5V479.7h1V480.1h1V479.9h1V480.3h1V480.8h1V480.9h1V480.8h1V480.9h1V481h1V481.3h1V481.5h1V481.5h1V483.6h-1V483.6h-1V483.6h-1V483.7h-1V484h-1V484h-1V484.2h-1V484.6h-1V484.6h-1V484.9h-1V485.1h-1V485.7h-1zM120,482.5V481.6h1V481.6h1V481.7h1V481.5h1V483.5h-1V483.4h-1V483.4h-1V483.4h-1zM126,482.5V481.6h1V481.4h1V481.6h1V483.4h-1V483.6h-1V483.5h-1zM130,482.5V481.7h1V481.6h1V483.5h-1V483.3h-1zM136,482.5V481.7h1V483.3h-1zM145,482.5V478.6h1V479.7h1V479.6h1V480.4h1V480.2h1V480.4h1V480.6h1V480.8h1V480.9h1V481.3h1V481.4h1V481.6h1V481.4h1V483.5h-1V483.4h-1V483.5h-1V483.8h-1V483.9h-1V484.3h-1V484.3h-1V484.4h-1V484.6h-1V485.1h-1V485.3h-1V485.1h-1V486.1h-1zM159,482.5V481.5h1V481.6h1V481.4h1V483.5h-1V483.5h-1V483.5h-1zM163,482.5V481.7h1V483.3h-1zM165,482.5V481.5h1V481.5h1V481.6h1V481.7h1V483.2h-1V483.4h-1V483.4h-1V483.5h-1zM170,482.5V481.5h1V481.8h1V481.7h1V483.3h-1V483.3h-1V483.4h-1zM176,482.5V481.6h1V481.7h1V483.3h-1V483.4h-1zM182,482.5V477.5h1V478.3h1V478.6h1V477.8h1V479.6h1V478.6h1V478.7h1V479.4h1V478.5h1V479.6h1V479.9h1V479.8h1V479.1h1V480.4h1V480.1h1V480.3h1V480.2h1V480.2h1V481.1h1V478.5h1V480.7h1V480.2h1V480.6h1V480.7h1V480.9h1V481.2h1V481h1V481.5h1V481.4h1V481.5h1V483.5h-1V483.7h-1V483.7h-1V483.9h-1V483.8h-1V484.2h-1V484.3h-1V484.3h-1V484.9h-1V484.5h-1V485.7h-1V484h-1V485.1h-1V485.3h-1V485.1h-1V485.4h-1V485.1h-1V486.1h-1V485.9h-1V485.1h-1V485.8h-1V485.5h-1V485.6h-1V485.6h-1V485.8h-1V485.9h-1V486.4h-1V486h-1V486.7h-1V487.8h-1zM216,482.5V481.7h1V483.4h-1zM220,482.5V478.4h1V478.8h1V479h1V479.4h1V478.6h1V479.9h1V478.5h1V479h1V479.1h1V479.9h1V478.9h1V479.5h1V480.1h1V479.8h1V480.3h1V480h1V480.7h1V480.5h1V480.8h1V478.9h1V479.6h1V479.9h1V480.8h1V480.5h1V480.8h1V481.1h1V480.8h1V481.2h1V481.4h1V481.3h1V481.7h1V483.2h-1V483.9h-1V483.6h-1V483.6h-1V484h-1V483.9h-1V484.3h-1V484.6h-1V484.2h-1V485.1h-1V485.3h-1V485.9h-1V484.1h-1V484.4h-1V484h-1V484.5h-1V484.7h-1V484.9h-1V485.1h-1V485.5h-1V485.7h-1V485.3h-1V485.1h-1V485.6h-1V486.1h-1V485.5h-1V486.5h-1V485.7h-1V485.7h-1V485.6h-1V487h-1zM252,482.5V481.7h1V483.3h-1zM255,482.5V481.6h1V481.7h1V481.7h1V477.6h1V476.4h1V477.9h1V477.8h1V478.9h1V478h1V479.6h1V478.4h1V478.1h1V478.3h1V479.5h1V479.2h1V479.4h1V479.5h1V479.4h1V479.7h1V479.5h1V480.3h1V480.7h1V480.1h1V479.9h1V480.3h1V480.6h1V480.5h1V480.7h1V481h1V480.6h1V481h1V481.3h1V481.4h1V481.6h1V483.4h-1V483.5h-1V483.7h-1V483.9h-1V484.2h-1V484h-1V484.1h-1V484.2h-1V484.2h-1V484.5h-1V485.1h-1V484.5h-1V484.7h-1V484.6h-1V485.4h-1V485h-1V485.3h-1V485.6h-1V485.6h-1V486.1h-1V485.5h-1V487h-1V486.1h-1V487.4h-1V485.3h-1V485.7h-1V486.6h-1V487.1h-1V486.7h-1V487.7h-1V487.3h-1V483.3h-1V483.4h-1V483.4h-1zM295,482.5V481.7h1V481.7h1V478.3h1V477.5h1V478.8h1V477.9h1V479.8h1V477.7h1V479.2h1V479.1h1V478.8h1V478.5h1V479h1V478.9h1V478.9h1V479.7h1V479.4h1V479.8h1V479.9h1V480.2h1V480.2h1V478.6h1V479.6h1V479.6h1V480.3h1V480.7h1V480h1V480.9h1V481.1h1V481.2h1V481.4h1V481.6h1V481.6h1V483.6h-1V483.5h-1V483.6h-1V483.7h-1V483.7h-1V484.4h-1V484.5h-1V484.8h-1V485.1h-1V484.8h-1V485.7h-1V486.6h-1V484.5h-1V484.5h-1V485h-1V485.4h-1V485.3h-1V485.3h-1V486.1h-1V485.7h-1V486h-1V485.8h-1V486.3h-1V485.6h-1V485.5h-1V486.6h-1V486.2h-1V485.9h-1V485.7h-1V487h-1V486.6h-1V483.4h-1V483.4h-1zM329,482.5V481.6h1V483.4h-1zM332,482.5V481.8h1V481.6h1V483.4h-1V483.4h-1zM335,482.5V476.7h1V479.2h1V478.3h1V478.6h1V479.5h1V478.9h1V478.5h1V478.3h1V479.7h1V479.1h1V479h1V480h1V478.8h1V480h1V479.5h1V479.8h1V480.3h1V480.7h1V480.4h1V479.9h1V479.8h1V480h1V480.6h1V480.8h1V481h1V481.2h1V481.1h1V481.4h1V481.4h1V481.5h1V481.6h1V483.4h-1V483.5h-1V483.6h-1V483.8h-1V484.3h-1V483.9h-1V484.2h-1V484.3h-1V484.2h-1V484.7h-1V485h-1V484.9h-1V484.4h-1V484.4h-1V485.2h-1V485h-1V485.3h-1V484.6h-1V486.2h-1V484.6h-1V485.4h-1V485.5h-1V485.7h-1V486.7h-1V486h-1V485.8h-1V485.2h-1V487.1h-1V485.9h-1V486h-1V487.9h-1zM370,482.5V481.6h1V481.6h1V483.3h-1V483.4h-1zM373,482.5V476h1V477.9h1V479h1V479.2h1V478h1V478.5h1V479.5h1V478.5h1V478.6h1V479.4h1V478.5h1V479.3h1V479.3h1V479.6h1V479.6h1V480.1h1V480.4h1V480.1h1V480.4h1V480.1h1V480.3h1V479.7h1V480.6h1V480.6h1V480.7h1V480.8h1V481h1V481.5h1V481.7h1V481.6h1V481.6h1V483.4h-1V483.5h-1V483.4h-1V483.7h-1V483.7h-1V484.2h-1V484.2h-1V484.7h-1V484.3h-1V485.2h-1V484.7h-1V485.6h-1V484.9h-1V484.5h-1V484.9h-1V484.7h-1V485.3h-1V485.7h-1V485.9h-1V485h-1V486.2h-1V485.5h-1V485.4h-1V486.1h-1V485.9h-1V486.2h-1V486.4h-1V486h-1V486.6h-1V486.7h-1V488h-1zM406,482.5V481.7h1V483.3h-1zM408,482.5V481.7h1V481.6h1V483.3h-1V483.3h-1z" fill="#e2c8cf"/><rect x="0" y="513" width="415" height="1" fill="#e2c8cf"/><path d="M0,513.5V512.7h1V512.7h1V512.8h1V514.3h-1V514.3h-1V514.4h-1zM5,513.5V512.5h1V512.6h1V512.7h1V514.3h-1V514.4h-1V514.4h-1zM9,513.5V512.5h1V512.5h1V514.4h-1V514.5h-1zM12,513.5V512.6h1V512.4h1V512.6h1V512.7h1V512.8h1V512.7h1V514.3h-1V514.3h-1V514.3h-1V514.5h-1V514.5h-1V514.3h-1zM21,513.5V512.6h1V514.4h-1zM23,513.5V512.6h1V514.4h-1zM25,513.5V512.7h1V514.3h-1zM31,513.5V511.2h1V511.6h1V511.5h1V511.8h1V512h1V512h1V512.1h1V512.1h1V512.4h1V512.4h1V512.6h1V512.7h1V512.6h1V512.6h1V514.5h-1V514.4h-1V514.3h-1V514.4h-1V514.6h-1V514.7h-1V514.7h-1V514.8h-1V515.2h-1V515h-1V515h-1V515.1h-1V515.3h-1V515.9h-1zM46,513.5V512.7h1V514.4h-1zM48,513.5V512.7h1V514.3h-1zM51,513.5V512.5h1V512.5h1V512.7h1V512.7h1V514.3h-1V514.3h-1V514.5h-1V514.6h-1zM56,513.5V512.6h1V514.4h-1zM58,513.5V512.6h1V512.5h1V512.5h1V512.5h1V514.5h-1V514.4h-1V514.5h-1V514.6h-1zM69,513.5V511h1V511.3h1V511.7h1V511.3h1V511.8h1V511.9h1V512.1h1V511.9h1V512.1h1V512.4h1V512.5h1V512.7h1V512.5h1V512.8h1V512.6h1V512.6h1V514.5h-1V514.5h-1V514.3h-1V514.5h-1V514.3h-1V514.5h-1V514.6h-1V514.9h-1V514.9h-1V515.1h-1V515.2h-1V515.3h-1V515.5h-1V515.4h-1V515.7h-1V516.3h-1zM86,513.5V512.7h1V514.4h-1zM89,513.5V512.4h1V514.6h-1zM91,513.5V512.7h1V512.7h1V512.5h1V512.7h1V514.3h-1V514.5h-1V514.3h-1V514.3h-1zM96,513.5V512.7h1V514.2h-1zM98,513.5V512.5h1V512.5h1V514.6h-1V514.6h-1zM107,513.5V510.9h1V510.8h1V511.4h1V511.4h1V511.5h1V511.5h1V511.7h1V512h1V512.3h1V512.2h1V512.6h1V512.6h1V514.4h-1V514.6h-1V514.7h-1V514.7h-1V515.1h-1V515.3h-1V515.5h-1V515.6h-1V515.6h-1V515.8h-1V516h-1V516.6h-1zM120,513.5V512.5h1V512.6h1V512.6h1V512.4h1V514.6h-1V514.3h-1V514.4h-1V514.4h-1zM126,513.5V512.5h1V512.4h1V512.7h1V514.4h-1V514.5h-1V514.4h-1zM130,513.5V512.7h1V512.6h1V514.4h-1V514.3h-1zM136,513.5V512.8h1V514.3h-1zM145,513.5V509.4h1V510.8h1V511.2h1V511.1h1V511.6h1V511.4h1V511.8h1V512h1V512h1V512.3h1V512.4h1V512.6h1V512.6h1V514.6h-1V514.4h-1V514.6h-1V514.8h-1V514.8h-1V515.1h-1V515.2h-1V515.6h-1V515.4h-1V515.6h-1V515.7h-1V515.8h-1V516.9h-1zM159,513.5V512.5h1V512.5h1V512.6h1V514.6h-1V514.5h-1V514.4h-1zM163,513.5V512.8h1V514.3h-1zM165,513.5V512.5h1V512.4h1V512.7h1V512.8h1V514.3h-1V514.4h-1V514.5h-1V514.5h-1zM170,513.5V512.5h1V512.8h1V512.6h1V514.4h-1V514.2h-1V514.5h-1zM176,513.5V512.6h1V512.7h1V514.3h-1V514.5h-1zM182,513.5V508h1V509.8h1V510.3h1V509.8h1V510.4h1V510h1V510.1h1V510.1h1V510.1h1V510.1h1V510.8h1V510.5h1V510.4h1V511.1h1V510.3h1V510.8h1V511.2h1V510.9h1V511.8h1V510.4h1V511.6h1V511h1V511.7h1V511.7h1V511.9h1V512.2h1V512.2h1V512.4h1V512.2h1V512.4h1V514.6h-1V514.7h-1V514.5h-1V514.9h-1V514.6h-1V515.2h-1V515.2h-1V515.3h-1V516.2h-1V515.7h-1V516.4h-1V515.2h-1V515.8h-1V516.2h-1V516.2h-1V516.7h-1V515.6h-1V516.8h-1V516.8h-1V516.7h-1V516.8h-1V516.6h-1V516.7h-1V516.8h-1V517.7h-1V517.1h-1V518.7h-1V517h-1V517h-1V517.5h-1zM216,513.5V512.6h1V514.3h-1zM220,513.5V509.1h1V510.2h1V509.6h1V510.7h1V509.4h1V510.3h1V509.1h1V510.4h1V510.5h1V511.1h1V510.7h1V510.9h1V511.3h1V510.7h1V511.5h1V511.4h1V511.6h1V511.6h1V511.9h1V510.2h1V510.9h1V511.1h1V511.8h1V511.2h1V511.9h1V511.8h1V512h1V512.1h1V512.5h1V512.4h1V512.7h1V514.4h-1V514.6h-1V514.7h-1V514.8h-1V515.1h-1V515.1h-1V514.9h-1V515.9h-1V515.2h-1V516.6h-1V515.9h-1V517.2h-1V515h-1V515.4h-1V515.1h-1V515.6h-1V515.2h-1V515.8h-1V515.9h-1V516.6h-1V516.4h-1V516.4h-1V516h-1V516.2h-1V517.6h-1V516.3h-1V517h-1V516.2h-1V517.3h-1V516.5h-1V517.5h-1zM252,513.5V512.6h1V514.3h-1zM255,513.5V512.7h1V512.6h1V512.7h1V508.5h1V507.1h1V509.7h1V509h1V510.1h1V510.1h1V510.2h1V508.8h1V508.8h1V509.7h1V509.4h1V510.8h1V509.9h1V510.7h1V511.1h1V511.1h1V510.5h1V510.9h1V511.4h1V511.2h1V511h1V511.5h1V511.6h1V511.9h1V511.8h1V512.1h1V511.7h1V512.2h1V512.4h1V512.4h1V512.6h1V514.5h-1V514.6h-1V514.8h-1V514.8h-1V515.3h-1V515.1h-1V515.3h-1V515.1h-1V515.3h-1V515.9h-1V516.4h-1V515.8h-1V515.3h-1V515.5h-1V516.6h-1V515.9h-1V516.1h-1V516.1h-1V516.5h-1V516.8h-1V516.5h-1V516.8h-1V518h-1V518.7h-1V516.7h-1V517.8h-1V517.7h-1V518.1h-1V517.9h-1V518.7h-1V517.4h-1V514.4h-1V514.4h-1V514.3h-1zM295,513.5V512.6h1V512.7h1V509.5h1V509.4h1V509.8h1V509h1V510.6h1V508.8h1V510.4h1V509.7h1V509.3h1V510h1V509.7h1V510.1h1V510.4h1V510.4h1V510.9h1V511.1h1V511.1h1V511.6h1V511.4h1V509.4h1V511.1h1V511.1h1V511h1V511.8h1V511.3h1V511.6h1V512.3h1V512.2h1V512.5h1V512.6h1V512.5h1V514.5h-1V514.5h-1V514.5h-1V514.8h-1V515h-1V515.4h-1V515.8h-1V515.6h-1V515.5h-1V516.6h-1V516h-1V517h-1V516.2h-1V515.9h-1V516.2h-1V516.3h-1V516.1h-1V516.6h-1V516.8h-1V517.2h-1V516.6h-1V517.5h-1V517h-1V516.6h-1V516.5h-1V518.7h-1V517h-1V518.1h-1V516.5h-1V517.8h-1V518.4h-1V514.4h-1V514.4h-1zM329,513.5V512.7h1V514.3h-1zM332,513.5V512.7h1V512.6h1V514.4h-1V514.4h-1zM335,513.5V508.9h1V510.3h1V510.2h1V509.5h1V510.2h1V509.8h1V510.1h1V509.7h1V510.8h1V510.5h1V510.3h1V511h1V510.2h1V511.3h1V510.9h1V511.2h1V510.8h1V511.6h1V511.7h1V510.9h1V510.9h1V511.3h1V511.5h1V511.3h1V511.6h1V512.3h1V512.1h1V512.4h1V512.3h1V512.6h1V512.4h1V514.5h-1V514.6h-1V514.7h-1V514.8h-1V515h-1V514.9h-1V515.2h-1V515.7h-1V515.5h-1V515.5h-1V515.7h-1V515.9h-1V515.4h-1V515.3h-1V515.9h-1V516h-1V516.1h-1V516.1h-1V516.7h-1V515.7h-1V517h-1V516.5h-1V516.2h-1V517.2h-1V516.9h-1V516.4h-1V516.6h-1V517.5h-1V517.1h-1V517.7h-1V519.8h-1zM370,513.5V512.7h1V512.7h1V514.4h-1V514.4h-1zM373,513.5V506.7h1V508.8h1V509.4h1V510h1V509.8h1V509.6h1V510.3h1V510.4h1V509.9h1V510.4h1V509.3h1V510.4h1V510.8h1V510.8h1V510.4h1V511h1V511.5h1V510.9h1V511.1h1V510.9h1V510.9h1V511h1V511.7h1V511.5h1V511.8h1V512h1V512.1h1V512.4h1V512.7h1V512.6h1V512.5h1V514.4h-1V514.4h-1V514.4h-1V514.6h-1V514.8h-1V515.1h-1V515h-1V515.7h-1V515.8h-1V516.2h-1V516.1h-1V515.9h-1V515.9h-1V515.7h-1V515.5h-1V515.9h-1V516.1h-1V516.5h-1V516.2h-1V516.8h-1V517.8h-1V516h-1V517.1h-1V517.3h-1V516.9h-1V517.3h-1V517.7h-1V516.9h-1V517.5h-1V518h-1V519.1h-1zM406,513.5V512.7h1V514.4h-1zM408,513.5V512.7h1V512.6h1V514.4h-1V514.3h-1z" fill="#e2c8cf"/><rect x="0" y="498" width="415" height="1" fill="#5e444c"/><rect x="418" y="469" width="103.5" height="59" fill="#c48693"/><rect x="417.5" y="528" width="104.5" height="1" fill="#0a0a0a"/><rect x="418" y="469" width="103.5" height="59" fill="#7f93c4"/><rect x="418" y="482" width="103.5" height="1" fill="#e2c8cf"/><path d="M453,482.5V481.8h1V481.7h1V481.7h1V481.6h1V481.5h1V481.3h1V481.5h1V481.4h1V481.3h1V481.3h1V480.9h1V480.9h1V480.7h1V481h1V480.8h1V480.2h1V480.5h1V480.2h1V480.2h1V479.7h1V479.5h1V479.4h1V479.4h1V479.7h1V479.5h1V478.5h1V478.7h1V479.1h1V478.7h1V478.5h1V478.6h1V478.5h1V478.4h1V478.6h1V478.6h1V478.2h1V478.8h1V479.4h1V478.2h1V479.7h1V480h1V479.2h1V479.5h1V479.8h1V479.8h1V480.1h1V480.7h1V480.1h1V480.5h1V480.5h1V480h1V480.6h1V480.1h1V480.1h1V481.1h1V481h1V481h1V481.3h1V481.5h1V481.5h1V481.7h1V481.6h1V481.8h1V483.3h-1V483.5h-1V483.3h-1V483.4h-1V483.5h-1V483.7h-1V484h-1V484.1h-1V484h-1V484.7h-1V484.7h-1V484.4h-1V485h-1V484.5h-1V484.4h-1V484.4h-1V484.6h-1V485h-1V484.7h-1V485h-1V485.4h-1V485.6h-1V485.6h-1V485.5h-1V486.6h-1V486.3h-1V486.1h-1V487.5h-1V487h-1V486.4h-1V486.3h-1V488h-1V486.7h-1V486.5h-1V485.8h-1V486.9h-1V486.1h-1V486h-1V485.8h-1V485.7h-1V485h-1V485.2h-1V485.2h-1V484.6h-1V484.9h-1V484.6h-1V484.7h-1V484.3h-1V484.4h-1V484.2h-1V484.2h-1V484.1h-1V484.1h-1V483.8h-1V483.7h-1V483.6h-1V483.7h-1V483.7h-1V483.5h-1V483.4h-1V483.4h-1V483.3h-1V483.2h-1z" fill="#e2c8cf"/><rect x="418" y="513" width="103.5" height="1" fill="#e2c8cf"/><path d="M453,513.5V512.8h1V512.7h1V512.7h1V512.5h1V512.6h1V512.3h1V512.3h1V512.2h1V512.1h1V512.3h1V512h1V512h1V511.7h1V512h1V511.7h1V511.4h1V511.3h1V511.5h1V511h1V510.7h1V510.6h1V511h1V510.9h1V510h1V510.1h1V510.1h1V510.2h1V510.2h1V509.1h1V509.8h1V509.6h1V509.6h1V510h1V510.2h1V509.8h1V509.9h1V510.3h1V510.3h1V509.4h1V510.2h1V510.7h1V510.6h1V511.1h1V511.1h1V510.9h1V511h1V511.3h1V511.3h1V511.6h1V511.5h1V511.4h1V511.6h1V511.2h1V511.1h1V511.9h1V512.1h1V511.9h1V512.1h1V512.4h1V512.5h1V512.6h1V512.6h1V512.7h1V514.3h-1V514.4h-1V514.2h-1V514.5h-1V514.5h-1V514.8h-1V514.9h-1V515h-1V514.9h-1V515.9h-1V515.8h-1V515.7h-1V516.1h-1V515.3h-1V515.1h-1V515.8h-1V515.9h-1V516h-1V515.9h-1V515.8h-1V516.2h-1V516h-1V516.1h-1V516.8h-1V516.6h-1V516.8h-1V517.3h-1V517.9h-1V517.7h-1V517.6h-1V517.3h-1V518.5h-1V517.6h-1V517.7h-1V516.8h-1V516.8h-1V517.7h-1V516.8h-1V517.3h-1V516.6h-1V516.7h-1V516.1h-1V516.4h-1V516.1h-1V515.5h-1V516h-1V515.6h-1V515.3h-1V515.2h-1V515.5h-1V515.1h-1V515h-1V514.9h-1V515h-1V514.9h-1V514.6h-1V514.8h-1V514.6h-1V514.4h-1V514.5h-1V514.3h-1V514.3h-1V514.2h-1z" fill="#e2c8cf"/><rect x="418" y="498" width="103.5" height="1" fill="#5e444c"/><rect x="523" y="469" width="268.5" height="59" fill="#c48693"/><rect x="522.5" y="528" width="269.5" height="1" fill="#0a0a0a"/><rect x="523" y="469" width="36" height="59" fill="#7f93c4"/><rect x="523" y="482" width="268.5" height="1" fill="#e2c8cf"/><path d="M523,482.5V478.2h1V479h1V478.1h1V479.3h1V478.3h1V480.1h1V479.2h1V479.3h1V479.8h1V479.2h1V479h1V479.9h1V480.1h1V479.5h1V480.1h1V480h1V480.7h1V480.3h1V479.3h1V480.3h1V479.9h1V480.4h1V480.3h1V480.9h1V481.2h1V481.1h1V481.4h1V481.2h1V481.6h1V481.8h1V483.2h-1V483.4h-1V483.7h-1V483.5h-1V483.9h-1V483.9h-1V483.9h-1V484.7h-1V484.5h-1V484.7h-1V485h-1V485.5h-1V484.5h-1V484.5h-1V484.7h-1V485.3h-1V485h-1V485h-1V485h-1V485.9h-1V485.2h-1V485.9h-1V485.7h-1V485.8h-1V485.1h-1V486.8h-1V485.1h-1V487h-1V486.1h-1V486.4h-1zM554,482.5V481.7h1V483.3h-1zM556,482.5V481.7h1V481.7h1V483.3h-1V483.3h-1zM560,482.5V477.7h1V478.9h1V479.4h1V478.9h1V478.8h1V479.7h1V479.3h1V479.2h1V479.9h1V478.6h1V479.9h1V478.7h1V480h1V480h1V480.2h1V479.9h1V479.9h1V480.1h1V480.7h1V479.9h1V479.7h1V480.6h1V479.8h1V480.8h1V480.6h1V481.1h1V480.9h1V481.3h1V481.2h1V483.7h-1V483.7h-1V483.9h-1V483.9h-1V484.4h-1V484.4h-1V485.3h-1V484.2h-1V485.4h-1V485.1h-1V484h-1V484.8h-1V485h-1V485h-1V484.8h-1V484.9h-1V484.7h-1V486.1h-1V485.3h-1V485.6h-1V484.7h-1V485h-1V485.7h-1V485.4h-1V486h-1V486h-1V486.3h-1V485.6h-1V487.5h-1zM590,482.5V481.6h1V481.8h1V481.7h1V483.3h-1V483.3h-1V483.4h-1zM597,482.5V481.6h1V478.6h1V479.1h1V478.9h1V478.8h1V478.6h1V479.1h1V479.1h1V479.6h1V479.8h1V479.9h1V479.7h1V479.6h1V480.6h1V480.2h1V479.4h1V480.2h1V480.5h1V480.6h1V480.7h1V479.6h1V479.7h1V480.8h1V480.8h1V481.1h1V481h1V481.2h1V481.3h1V481.4h1V481.4h1V483.4h-1V483.5h-1V483.7h-1V483.8h-1V483.9h-1V483.8h-1V484.3h-1V484.5h-1V485.1h-1V484.9h-1V484.8h-1V484.2h-1V484.8h-1V485.5h-1V485.5h-1V484.9h-1V484.6h-1V484.7h-1V484.9h-1V485.5h-1V486.2h-1V485.2h-1V485.5h-1V485.9h-1V486.3h-1V487.2h-1V485.8h-1V486.1h-1V486.5h-1V483.3h-1zM628,482.5V481.7h1V481.7h1V483.3h-1V483.3h-1zM636,482.5V479h1V478.3h1V478.9h1V479.5h1V478.2h1V479.3h1V479.7h1V479h1V479.5h1V480.1h1V479.9h1V480.3h1V480.5h1V480.1h1V479.8h1V480.1h1V479.8h1V480.5h1V480.7h1V479.1h1V480.6h1V480.1h1V480.7h1V480.5h1V480.8h1V480.9h1V481.1h1V481.3h1V481.3h1V483.6h-1V483.6h-1V483.9h-1V484.1h-1V484.4h-1V484h-1V484.5h-1V485h-1V484.7h-1V486.1h-1V484.4h-1V484.2h-1V485h-1V484.7h-1V485h-1V485.1h-1V484.4h-1V484.8h-1V484.8h-1V485h-1V485.2h-1V485.6h-1V485.1h-1V485h-1V486.1h-1V486.5h-1V486.2h-1V486.7h-1V486.5h-1zM666,482.5V481.7h1V483.4h-1zM671,482.5V481.7h1V483.3h-1zM674,482.5V477.9h1V479.6h1V479h1V479.5h1V479.5h1V478.9h1V479.3h1V480.4h1V480.3h1V480.2h1V480.3h1V480.1h1V480.2h1V480.4h1V480.6h1V480.6h1V481.2h1V480.6h1V480.9h1V480.1h1V480.6h1V480.3h1V480.4h1V480.9h1V480.8h1V481.2h1V481.2h1V481.3h1V481.6h1V481.6h1V483.4h-1V483.5h-1V483.6h-1V484.1h-1V483.7h-1V483.9h-1V484.1h-1V484.2h-1V484.3h-1V484.7h-1V485h-1V483.9h-1V484.1h-1V484.1h-1V484.7h-1V484.4h-1V484.5h-1V484.4h-1V484.5h-1V484.5h-1V484.9h-1V485.4h-1V485h-1V485.7h-1V485.8h-1V485.8h-1V486.2h-1V485.6h-1V486.1h-1V486.9h-1zM707,482.5V481.6h1V483.3h-1zM711,482.5V481.7h1V478.9h1V479.1h1V479.9h1V480.2h1V479.1h1V479.8h1V479.8h1V480.7h1V480h1V480.6h1V480.6h1V480.9h1V480.7h1V480.8h1V481.1h1V481h1V480.9h1V481.1h1V481.1h1V481h1V481.4h1V479.9h1V480.9h1V480.7h1V480.1h1V480.8h1V480.8h1V481h1V480.7h1V481h1V481.1h1V481h1V481.1h1V481.4h1V481.2h1V481.3h1V481.2h1V481.5h1V481.6h1V481.5h1V481.5h1V481.5h1V481.6h1V481.7h1V483.3h-1V483.4h-1V483.4h-1V483.4h-1V483.5h-1V483.4h-1V483.5h-1V483.9h-1V483.7h-1V484.1h-1V483.6h-1V484h-1V483.7h-1V484h-1V484h-1V484.1h-1V484.1h-1V484.2h-1V484.3h-1V484.8h-1V484.4h-1V484.1h-1V485.4h-1V483.6h-1V483.8h-1V483.9h-1V484.2h-1V484h-1V484.2h-1V484.1h-1V484h-1V484.5h-1V484.1h-1V484.9h-1V485h-1V485h-1V484.8h-1V485.3h-1V485.6h-1V485.9h-1V485.1h-1V484.7h-1V485.6h-1V486.4h-1V483.4h-1zM757,482.5V481.7h1V483.4h-1zM759,482.5V481.7h1V480.7h1V480.7h1V481.4h1V481.1h1V481.2h1V480.9h1V481.3h1V481.6h1V481.3h1V481.4h1V481.3h1V481.5h1V481.3h1V481.7h1V481.5h1V481.4h1V481.5h1V481.5h1V481.4h1V481.6h1V481.7h1V481.5h1V481.7h1V481.6h1V481.8h1V483.3h-1V483.4h-1V483.3h-1V483.4h-1V483.4h-1V483.4h-1V483.5h-1V483.5h-1V483.4h-1V483.6h-1V483.5h-1V483.3h-1V484h-1V483.5h-1V483.7h-1V483.7h-1V483.7h-1V483.5h-1V483.8h-1V483.9h-1V483.8h-1V483.9h-1V483.7h-1V484.1h-1V484h-1V483.3h-1zM789,482.5V481.6h1V483.3h-1z" fill="#e2c8cf"/><rect x="523" y="513" width="268.5" height="1" fill="#e2c8cf"/><path d="M523,513.5V509.3h1V510.5h1V509h1V510.6h1V509.9h1V510.6h1V510.4h1V510.8h1V510.3h1V510.6h1V510.9h1V511.2h1V511.1h1V511.1h1V510.7h1V511.5h1V511.7h1V511.6h1V509.7h1V511h1V510.7h1V511.7h1V511.3h1V511.9h1V512.3h1V512.2h1V512.3h1V512.2h1V512.6h1V512.8h1V514.3h-1V514.4h-1V514.7h-1V514.5h-1V514.8h-1V514.7h-1V515.4h-1V515.5h-1V515.2h-1V516h-1V516h-1V516.3h-1V515.5h-1V515.5h-1V516h-1V516.2h-1V516.1h-1V516.7h-1V515.6h-1V516.1h-1V516h-1V516.9h-1V516.6h-1V516h-1V516.4h-1V517.6h-1V516.7h-1V517.7h-1V516.9h-1V518.6h-1zM554,513.5V512.7h1V514.3h-1zM556,513.5V512.7h1V512.8h1V514.3h-1V514.3h-1zM560,513.5V507.2h1V510.4h1V509.8h1V510.7h1V510h1V510.1h1V510.5h1V510h1V510.7h1V510.2h1V511h1V510.2h1V511.5h1V510.9h1V510.9h1V511.1h1V510.8h1V511.3h1V511.9h1V511.3h1V510.7h1V511.6h1V511.3h1V511.5h1V511.3h1V512.3h1V512.2h1V512.1h1V512.4h1V514.7h-1V514.8h-1V514.9h-1V514.7h-1V515.3h-1V515.6h-1V515.6h-1V515.8h-1V515.7h-1V516.3h-1V515.2h-1V515.6h-1V515.6h-1V515.7h-1V516h-1V515.6h-1V515.6h-1V516.5h-1V516.2h-1V516.7h-1V515.8h-1V516.4h-1V516.2h-1V516.4h-1V517.1h-1V516.4h-1V516.6h-1V516.6h-1V518.9h-1zM590,513.5V512.6h1V512.8h1V512.7h1V514.3h-1V514.2h-1V514.3h-1zM597,513.5V512.6h1V509.8h1V509.9h1V509.9h1V508.8h1V509.7h1V510.6h1V510.4h1V511h1V510.1h1V509.9h1V510.9h1V511.1h1V511.3h1V511.4h1V510.7h1V511h1V510.9h1V511.7h1V511.5h1V510.6h1V511.1h1V511.6h1V511.8h1V512.2h1V512h1V512.2h1V512.3h1V512.4h1V512.5h1V514.6h-1V514.7h-1V514.7h-1V514.8h-1V515h-1V515h-1V515.5h-1V515.2h-1V516.1h-1V515.8h-1V515.3h-1V515.2h-1V515.6h-1V516.1h-1V516.2h-1V515.6h-1V515.8h-1V516.3h-1V516.2h-1V516.5h-1V516.4h-1V516.3h-1V516.8h-1V517.1h-1V517.8h-1V517.2h-1V517.8h-1V517.4h-1V517.2h-1V514.4h-1zM628,513.5V512.7h1V512.7h1V514.3h-1V514.3h-1zM636,513.5V509.9h1V509.8h1V510.4h1V509.5h1V509.3h1V510.9h1V510.4h1V510.1h1V510.5h1V511h1V510.8h1V511.5h1V511.5h1V511.2h1V511.4h1V511.1h1V511.3h1V511.7h1V511.5h1V509.9h1V511.7h1V510.7h1V511.2h1V511.7h1V511.6h1V512h1V512.1h1V512.3h1V512.3h1V514.6h-1V514.7h-1V514.9h-1V515.1h-1V515.5h-1V515.5h-1V515.3h-1V515.9h-1V515.7h-1V517.3h-1V515.1h-1V515.1h-1V516h-1V515.9h-1V515.9h-1V516.3h-1V515.5h-1V515.5h-1V516.1h-1V516h-1V516.4h-1V516.3h-1V516.1h-1V516h-1V517.9h-1V516.9h-1V516.5h-1V517.5h-1V517.6h-1zM666,513.5V512.6h1V514.4h-1zM671,513.5V512.7h1V514.3h-1zM674,513.5V509.2h1V509.4h1V510.8h1V510.4h1V510.4h1V509.8h1V510.2h1V511.5h1V510.7h1V510.8h1V511.3h1V511.3h1V511.1h1V511.5h1V511.6h1V511.5h1V512.1h1V511.7h1V512h1V511.4h1V511.4h1V511.8h1V511.7h1V511.8h1V511.8h1V512.3h1V512h1V512.2h1V512.5h1V512.5h1V514.3h-1V514.5h-1V514.6h-1V515.1h-1V514.6h-1V514.9h-1V515.1h-1V515.1h-1V515.3h-1V515.6h-1V515.5h-1V514.9h-1V515.1h-1V514.9h-1V515.8h-1V515.1h-1V515.5h-1V515.3h-1V516.1h-1V515.4h-1V515.7h-1V516.4h-1V515.4h-1V516.7h-1V516.9h-1V516.7h-1V516.8h-1V516.6h-1V517.2h-1V517h-1zM707,513.5V512.6h1V514.4h-1zM711,513.5V512.6h1V509.9h1V510.3h1V510.9h1V510.7h1V510.8h1V510.8h1V511h1V511.6h1V511.3h1V511.5h1V511.4h1V511.5h1V511.2h1V511.8h1V512h1V511.9h1V512.2h1V511.8h1V512.1h1V512.1h1V512.5h1V510.6h1V511.9h1V511.8h1V511.3h1V511.9h1V511.9h1V511.8h1V512h1V512h1V512.2h1V512h1V512.3h1V512.3h1V512h1V512.4h1V512.1h1V512.5h1V512.6h1V512.6h1V512.5h1V512.4h1V512.6h1V512.7h1V514.3h-1V514.4h-1V514.4h-1V514.5h-1V514.3h-1V514.4h-1V514.4h-1V514.7h-1V514.8h-1V515h-1V514.7h-1V514.9h-1V515h-1V515h-1V514.9h-1V515.1h-1V515.1h-1V515.1h-1V515.6h-1V515.5h-1V515h-1V515.4h-1V516.1h-1V514.6h-1V515h-1V514.8h-1V515.3h-1V514.9h-1V515h-1V515h-1V515.1h-1V515.7h-1V515h-1V515.4h-1V515.6h-1V516.2h-1V515.5h-1V516.3h-1V516.8h-1V516.4h-1V516.1h-1V515.9h-1V516.5h-1V517h-1V514.3h-1zM757,513.5V512.7h1V514.4h-1zM759,513.5V512.6h1V511.9h1V512h1V512.4h1V512.2h1V512.1h1V512h1V512.2h1V512.4h1V512.2h1V512.4h1V512.3h1V512.6h1V512.2h1V512.6h1V512.5h1V512.4h1V512.5h1V512.4h1V512.4h1V512.6h1V512.7h1V512.6h1V512.7h1V512.7h1V512.7h1V514.3h-1V514.4h-1V514.3h-1V514.4h-1V514.3h-1V514.4h-1V514.6h-1V514.5h-1V514.5h-1V514.6h-1V514.4h-1V514.4h-1V514.7h-1V514.5h-1V514.8h-1V514.6h-1V514.7h-1V514.6h-1V514.7h-1V515h-1V514.8h-1V515.1h-1V514.7h-1V515h-1V515.2h-1V514.4h-1zM789,513.5V512.6h1V514.4h-1z" fill="#e2c8cf"/><rect x="523" y="498" width="268.5" height="1" fill="#5e444c"/><rect x="793.5" y="469" width="58.5" height="59" fill="#c48693"/><rect x="793" y="528" width="59.5" height="1" fill="#0a0a0a"/><rect x="793.5" y="482" width="58.5" height="1" fill="#e2c8cf"/><path d="M795,482.5V480.1h1V480.7h1V481.1h1V481.2h1V481h1V481.3h1V481.4h1V481.4h1V481.5h1V481.6h1V481.7h1V483.3h-1V483.5h-1V483.5h-1V483.6h-1V483.8h-1V483.6h-1V484h-1V483.9h-1V483.9h-1V484.4h-1V484.4h-1zM815,482.5V479.4h1V480.1h1V480.7h1V480.5h1V480.6h1V480.9h1V480.8h1V481.1h1V481.3h1V481.5h1V481.4h1V481.7h1V483.3h-1V483.5h-1V483.6h-1V483.9h-1V483.9h-1V484h-1V484.3h-1V484.4h-1V484.7h-1V484.4h-1V484.6h-1V485.7h-1zM833,482.5V480.1h1V480.4h1V480.4h1V480.9h1V480.7h1V480.9h1V481.3h1V481.3h1V481.3h1V481.5h1V481.7h1V481.7h1V483.3h-1V483.5h-1V483.5h-1V483.7h-1V483.8h-1V483.9h-1V484.1h-1V484.2h-1V484.3h-1V484.3h-1V484.5h-1V485.2h-1z" fill="#e2c8cf"/><rect x="793.5" y="513" width="58.5" height="1" fill="#e2c8cf"/><path d="M795,513.5V511.4h1V511.8h1V511.7h1V512h1V512.2h1V512.4h1V512.2h1V512.5h1V512.5h1V512.6h1V512.7h1V514.4h-1V514.4h-1V514.6h-1V514.6h-1V514.6h-1V514.8h-1V514.8h-1V515h-1V515.2h-1V515h-1V515.8h-1zM815,513.5V510.4h1V511.5h1V511.3h1V511.7h1V511.5h1V511.7h1V511.9h1V512h1V512.2h1V512.4h1V512.4h1V512.6h1V514.3h-1V514.5h-1V514.7h-1V514.8h-1V515h-1V515h-1V515.3h-1V515.1h-1V515.3h-1V515.7h-1V515.5h-1V516h-1zM833,513.5V511h1V511.4h1V511.8h1V511.7h1V511.8h1V512h1V512.2h1V512.3h1V512.5h1V512.6h1V512.7h1V512.7h1V514.3h-1V514.5h-1V514.6h-1V514.6h-1V514.9h-1V514.8h-1V514.8h-1V515h-1V515.3h-1V515.2h-1V515.5h-1V515.9h-1z" fill="#e2c8cf"/><rect x="793.5" y="498" width="58.5" height="1" fill="#5e444c"/><rect x="854" y="469" width="150.5" height="59" fill="#c48693"/><rect x="853.5" y="528" width="151.5" height="1" fill="#0a0a0a"/><rect x="854" y="482" width="150.5" height="1" fill="#e2c8cf"/><path d="M856,482.5V478.2h1V479.2h1V479.5h1V479.2h1V480.3h1V479.5h1V479.6h1V480.6h1V480.3h1V480.9h1V480.5h1V481.3h1V481.3h1V481.4h1V481.6h1V483.3h-1V483.6h-1V483.8h-1V483.7h-1V484.3h-1V484.5h-1V484.6h-1V484.6h-1V484.9h-1V485.4h-1V485.4h-1V485.9h-1V485.2h-1V486.6h-1V487.7h-1zM873,482.5V481.7h1V481.7h1V479h1V479.3h1V480h1V479.9h1V480.5h1V480.5h1V480.7h1V480.6h1V480.9h1V481.1h1V481.2h1V481.4h1V481.5h1V481.6h1V481.5h1V483.5h-1V483.4h-1V483.6h-1V483.6h-1V483.9h-1V483.8h-1V484.1h-1V484.3h-1V484.3h-1V484.7h-1V484.7h-1V484.6h-1V485.2h-1V485.2h-1V486.6h-1V483.3h-1V483.3h-1zM894,482.5V478.1h1V478.7h1V479.2h1V479.4h1V479.6h1V478.9h1V480.2h1V479.8h1V480.6h1V480.7h1V480.6h1V480.8h1V481.3h1V481.6h1V483.4h-1V483.6h-1V484.3h-1V484.4h-1V484.3h-1V484.4h-1V484.6h-1V484.8h-1V486.1h-1V486.3h-1V485.3h-1V485.9h-1V485.9h-1V487.1h-1zM909,482.5V481.7h1V483.3h-1zM913,482.5V479.4h1V479.9h1V479.8h1V480h1V480.4h1V480.2h1V480.6h1V480.8h1V481h1V481.1h1V481h1V481.2h1V481.3h1V481.6h1V483.4h-1V483.5h-1V483.8h-1V483.9h-1V484.2h-1V484.2h-1V484.6h-1V484.7h-1V484.9h-1V484.6h-1V485.2h-1V485.7h-1V485.2h-1V486.3h-1zM931,482.5V481.8h1V478.3h1V478.4h1V479.4h1V479.8h1V479.7h1V480.2h1V480.6h1V480.2h1V480.5h1V480.5h1V480.9h1V481.1h1V481.3h1V481.5h1V483.5h-1V483.7h-1V483.9h-1V483.9h-1V484.3h-1V484.5h-1V485.1h-1V484.7h-1V484.4h-1V485.7h-1V485.6h-1V486.1h-1V486.4h-1V486.4h-1V483.3h-1zM952,482.5V479.2h1V479.5h1V479.5h1V480.2h1V479.9h1V480.7h1V480.6h1V480.7h1V480.6h1V481h1V481.2h1V481.3h1V481.2h1V481.6h1V483.5h-1V483.7h-1V483.8h-1V483.9h-1V484.1h-1V484.2h-1V484.7h-1V484.2h-1V484.5h-1V485h-1V485.1h-1V485.9h-1V485.1h-1V486.1h-1zM971,482.5V478.4h1V478.6h1V479.4h1V479.7h1V479.9h1V479.7h1V480.4h1V480.4h1V480.3h1V481.2h1V481.2h1V481.4h1V481.3h1V481.5h1V481.7h1V483.3h-1V483.4h-1V483.8h-1V483.5h-1V483.8h-1V484h-1V484.7h-1V484.3h-1V484.2h-1V485.4h-1V484.9h-1V484.9h-1V485.9h-1V486h-1V487h-1zM988,482.5V481.8h1V483.3h-1zM990,482.5V480h1V480.5h1V480.8h1V480.7h1V480.6h1V480.9h1V481.3h1V480.9h1V481.2h1V481.4h1V481.5h1V481.5h1V481.6h1V483.3h-1V483.4h-1V483.5h-1V483.5h-1V483.9h-1V484.2h-1V483.7h-1V484.1h-1V484.8h-1V484.2h-1V484.1h-1V484.3h-1V485.2h-1z" fill="#e2c8cf"/><rect x="854" y="513" width="150.5" height="1" fill="#e2c8cf"/><path d="M856,513.5V509.1h1V509.2h1V510.8h1V510.8h1V511h1V510.4h1V511.2h1V511.4h1V511.3h1V511.8h1V511.6h1V512.4h1V512.3h1V512.4h1V512.6h1V514.3h-1V514.6h-1V514.8h-1V514.7h-1V515.4h-1V515.1h-1V515.4h-1V515.3h-1V515.8h-1V516.5h-1V515.8h-1V516.9h-1V516.8h-1V516.9h-1V518h-1zM873,513.5V512.7h1V512.7h1V509.8h1V510.6h1V510.3h1V511.2h1V511.6h1V511.5h1V511.6h1V512h1V512.2h1V512.1h1V512.1h1V512.3h1V512.4h1V512.5h1V512.6h1V514.4h-1V514.5h-1V514.6h-1V514.6h-1V514.8h-1V515h-1V515.2h-1V515.4h-1V515.7h-1V515.5h-1V515.9h-1V515.7h-1V516.1h-1V516.6h-1V517.1h-1V514.3h-1V514.3h-1zM894,513.5V509.3h1V510.4h1V510.1h1V510.3h1V509.9h1V510h1V510.8h1V511.2h1V511.3h1V511.8h1V511.9h1V512h1V512.3h1V512.5h1V514.4h-1V514.8h-1V515.2h-1V515.4h-1V515.4h-1V515.3h-1V516.2h-1V516.2h-1V516.5h-1V516.9h-1V516.6h-1V517.1h-1V517.3h-1V518.2h-1zM909,513.5V512.8h1V514.3h-1zM913,513.5V509.8h1V510.7h1V510.4h1V510.5h1V511.5h1V511.3h1V511.2h1V511.4h1V511.7h1V511.7h1V512.3h1V512.3h1V512.4h1V512.6h1V514.4h-1V514.6h-1V514.9h-1V514.8h-1V515h-1V515.4h-1V515.4h-1V515.6h-1V515.6h-1V516h-1V516.3h-1V516.3h-1V515.9h-1V516.9h-1zM931,513.5V512.8h1V509.5h1V509.2h1V510h1V511h1V510.3h1V511.6h1V511.2h1V511h1V511.6h1V511.7h1V511.8h1V512.1h1V512.4h1V512.5h1V514.6h-1V514.6h-1V515h-1V514.9h-1V515.4h-1V515.3h-1V516h-1V515.3h-1V515.4h-1V516.2h-1V516.8h-1V517.2h-1V517h-1V517.6h-1V514.2h-1zM952,513.5V510.4h1V510.9h1V510.9h1V511.3h1V511.2h1V511.3h1V511.4h1V511.4h1V511.9h1V511.8h1V512h1V512.2h1V512.2h1V512.6h1V514.4h-1V514.8h-1V514.8h-1V515h-1V515.3h-1V515.2h-1V515.3h-1V515.8h-1V515.5h-1V516.2h-1V516.1h-1V516.3h-1V517h-1V517.4h-1zM971,513.5V509.6h1V510.2h1V510.6h1V510.4h1V510.7h1V511.2h1V511.7h1V511.1h1V511.5h1V511.9h1V511.9h1V512.4h1V512.4h1V512.5h1V512.7h1V514.3h-1V514.4h-1V514.6h-1V514.6h-1V514.9h-1V515h-1V515.4h-1V515.7h-1V515.3h-1V516.4h-1V516.3h-1V516.7h-1V516.8h-1V517.4h-1V518.2h-1zM988,513.5V512.7h1V514.3h-1zM990,513.5V511.2h1V511.4h1V511.7h1V511.7h1V511.7h1V511.7h1V512.3h1V511.6h1V512h1V512.4h1V512.5h1V512.5h1V512.7h1V514.3h-1V514.5h-1V514.4h-1V514.4h-1V514.9h-1V515h-1V514.8h-1V515h-1V515.6h-1V515.2h-1V515.1h-1V515.3h-1V516.1h-1z" fill="#e2c8cf"/><rect x="854" y="498" width="150.5" height="1" fill="#5e444c"/><rect x="862" y="341" width="1" height="61" fill="#45535d"/><rect x="409.1" y="277" width="1.2" height="61" fill="#f6cdb0"/><rect x="409.1" y="277" width="3" height="6" fill="#f6cdb0"/><rect x="482.6" y="277" width="1.2" height="61" fill="#f6cdb0"/><rect x="482.6" y="277" width="3" height="6" fill="#f6cdb0"/><rect x="521.6" y="277" width="1.2" height="61" fill="#f6cdb0"/><rect x="521.6" y="277" width="3" height="6" fill="#f6cdb0"/><rect x="711.1" y="277" width="1.2" height="61" fill="#f6cdb0"/><rect x="711.1" y="277" width="3" height="6" fill="#f6cdb0"/><rect x="823.6" y="277" width="1.2" height="61" fill="#f6cdb0"/><rect x="823.6" y="277" width="3" height="6" fill="#f6cdb0"/><rect x="409.1" y="341" width="1.2" height="61" fill="#f6cdb0"/><rect x="409.1" y="341" width="3" height="6" fill="#f6cdb0"/><rect x="482.6" y="341" width="1.2" height="61" fill="#f6cdb0"/><rect x="482.6" y="341" width="3" height="6" fill="#f6cdb0"/><rect x="521.6" y="341" width="1.2" height="61" fill="#f6cdb0"/><rect x="521.6" y="341" width="3" height="6" fill="#f6cdb0"/><rect x="711.1" y="341" width="1.2" height="61" fill="#f6cdb0"/><rect x="711.1" y="341" width="3" height="6" fill="#f6cdb0"/><rect x="823.6" y="341" width="1.2" height="61" fill="#f6cdb0"/><rect x="823.6" y="341" width="3" height="6" fill="#f6cdb0"/><rect x="409.1" y="405" width="1.2" height="61" fill="#f6cdb0"/><rect x="409.1" y="405" width="3" height="6" fill="#f6cdb0"/><rect x="482.6" y="405" width="1.2" height="61" fill="#f6cdb0"/><rect x="482.6" y="405" width="3" height="6" fill="#f6cdb0"/><rect x="521.6" y="405" width="1.2" height="61" fill="#f6cdb0"/><rect x="521.6" y="405" width="3" height="6" fill="#f6cdb0"/><rect x="711.1" y="405" width="1.2" height="61" fill="#f6cdb0"/><rect x="711.1" y="405" width="3" height="6" fill="#f6cdb0"/><rect x="823.6" y="405" width="1.2" height="61" fill="#f6cdb0"/><rect x="823.6" y="405" width="3" height="6" fill="#f6cdb0"/><rect x="409.1" y="469" width="1.2" height="59" fill="#f6cdb0"/><rect x="409.1" y="469" width="3" height="6" fill="#f6cdb0"/><rect x="482.6" y="469" width="1.2" height="59" fill="#f6cdb0"/><rect x="482.6" y="469" width="3" height="6" fill="#f6cdb0"/><rect x="521.6" y="469" width="1.2" height="59" fill="#f6cdb0"/><rect x="521.6" y="469" width="3" height="6" fill="#f6cdb0"/><rect x="711.1" y="469" width="1.2" height="59" fill="#f6cdb0"/><rect x="711.1" y="469" width="3" height="6" fill="#f6cdb0"/><rect x="823.6" y="469" width="1.2" height="59" fill="#f6cdb0"/><rect x="823.6" y="469" width="3" height="6" fill="#f6cdb0"/></svg>
<div class="gl" style="left:147px;top:277px;height:61px;background:repeating-linear-gradient(180deg,rgba(140,132,255,.85) 0,rgba(140,132,255,.85) 1px,transparent 1px,transparent 4px);background-position:0 0px"></div>
<div class="gl" style="left:286px;top:277px;height:61px;background:repeating-linear-gradient(180deg,rgba(140,132,255,.85) 0,rgba(140,132,255,.85) 1px,transparent 1px,transparent 4px);background-position:0 0px"></div>
<div class="gl" style="left:425px;top:277px;height:61px;background:repeating-linear-gradient(180deg,rgba(140,132,255,.85) 0,rgba(140,132,255,.85) 1px,transparent 1px,transparent 4px);background-position:0 0px"></div>
<div class="gl" style="left:563px;top:277px;height:61px;background:repeating-linear-gradient(180deg,rgba(140,132,255,.85) 0,rgba(140,132,255,.85) 1px,transparent 1px,transparent 4px);background-position:0 0px"></div>
<div class="gl" style="left:702px;top:277px;height:61px;background:repeating-linear-gradient(180deg,rgba(140,132,255,.85) 0,rgba(140,132,255,.85) 1px,transparent 1px,transparent 4px);background-position:0 0px"></div>
<div class="gl" style="left:841px;top:277px;height:61px;background:repeating-linear-gradient(180deg,rgba(140,132,255,.85) 0,rgba(140,132,255,.85) 1px,transparent 1px,transparent 4px);background-position:0 0px"></div>
<div class="gl" style="left:980px;top:277px;height:61px;background:repeating-linear-gradient(180deg,rgba(140,132,255,.85) 0,rgba(140,132,255,.85) 1px,transparent 1px,transparent 4px);background-position:0 0px"></div>
<div class="gl" style="left:286px;top:341px;height:61px;background:repeating-linear-gradient(180deg,rgba(225,248,255,.85) 0,rgba(225,248,255,.85) 1px,transparent 1px,transparent 4px);background-position:0 0px"></div>
<div class="gl" style="left:425px;top:341px;height:61px;background:repeating-linear-gradient(180deg,rgba(225,248,255,.85) 0,rgba(225,248,255,.85) 1px,transparent 1px,transparent 4px);background-position:0 0px"></div>
<div class="gl" style="left:563px;top:341px;height:61px;background:repeating-linear-gradient(180deg,rgba(225,248,255,.85) 0,rgba(225,248,255,.85) 1px,transparent 1px,transparent 4px);background-position:0 0px"></div>
<div class="gl" style="left:702px;top:341px;height:61px;background:repeating-linear-gradient(180deg,rgba(225,248,255,.85) 0,rgba(225,248,255,.85) 1px,transparent 1px,transparent 4px);background-position:0 0px"></div>
<div class="gl" style="left:841px;top:341px;height:61px;background:repeating-linear-gradient(180deg,rgba(225,248,255,.85) 0,rgba(225,248,255,.85) 1px,transparent 1px,transparent 4px);background-position:0 0px"></div>
<div class="gl" style="left:980px;top:341px;height:61px;background:repeating-linear-gradient(180deg,rgba(225,248,255,.85) 0,rgba(225,248,255,.85) 1px,transparent 1px,transparent 4px);background-position:0 0px"></div>
<div class="gl" style="left:286px;top:405px;height:61px;background:repeating-linear-gradient(180deg,rgba(255,244,170,.85) 0,rgba(255,244,170,.85) 1px,transparent 1px,transparent 4px);background-position:0 0px"></div>
<div class="gl" style="left:425px;top:405px;height:61px;background:repeating-linear-gradient(180deg,rgba(255,244,170,.85) 0,rgba(255,244,170,.85) 1px,transparent 1px,transparent 4px);background-position:0 0px"></div>
<div class="gl" style="left:563px;top:405px;height:61px;background:repeating-linear-gradient(180deg,rgba(255,244,170,.85) 0,rgba(255,244,170,.85) 1px,transparent 1px,transparent 4px);background-position:0 0px"></div>
<div class="gl" style="left:702px;top:405px;height:61px;background:repeating-linear-gradient(180deg,rgba(255,244,170,.85) 0,rgba(255,244,170,.85) 1px,transparent 1px,transparent 4px);background-position:0 0px"></div>
<div class="gl" style="left:841px;top:405px;height:61px;background:repeating-linear-gradient(180deg,rgba(255,244,170,.85) 0,rgba(255,244,170,.85) 1px,transparent 1px,transparent 4px);background-position:0 0px"></div>
<div class="gl" style="left:9px;top:469px;height:59px;background:repeating-linear-gradient(180deg,rgba(255,255,255,.85) 0,rgba(255,255,255,.85) 1px,transparent 1px,transparent 4px);background-position:0 0px"></div>
<div class="gl" style="left:147px;top:469px;height:59px;background:repeating-linear-gradient(180deg,rgba(255,255,255,.85) 0,rgba(255,255,255,.85) 1px,transparent 1px,transparent 4px);background-position:0 0px"></div>
<div class="gl" style="left:286px;top:469px;height:59px;background:repeating-linear-gradient(180deg,rgba(255,255,255,.85) 0,rgba(255,255,255,.85) 1px,transparent 1px,transparent 4px);background-position:0 0px"></div>
<div class="gl" style="left:425px;top:469px;height:59px;background:repeating-linear-gradient(180deg,rgba(255,255,255,.85) 0,rgba(255,255,255,.85) 1px,transparent 1px,transparent 4px);background-position:0 0px"></div>
<div class="gl" style="left:563px;top:469px;height:59px;background:repeating-linear-gradient(180deg,rgba(255,255,255,.85) 0,rgba(255,255,255,.85) 1px,transparent 1px,transparent 4px);background-position:0 0px"></div>
<div class="gl" style="left:702px;top:469px;height:59px;background:repeating-linear-gradient(180deg,rgba(255,255,255,.85) 0,rgba(255,255,255,.85) 1px,transparent 1px,transparent 4px);background-position:0 0px"></div>
<div class="gl" style="left:841px;top:469px;height:59px;background:repeating-linear-gradient(180deg,rgba(255,255,255,.85) 0,rgba(255,255,255,.85) 1px,transparent 1px,transparent 4px);background-position:0 0px"></div>
<div class="gl" style="left:980px;top:469px;height:59px;background:repeating-linear-gradient(180deg,rgba(255,255,255,.85) 0,rgba(255,255,255,.85) 1px,transparent 1px,transparent 4px);background-position:0 0px"></div>
<div style="position:absolute;left:26px;top:279px;width:953px;height:13px;overflow:hidden"><div class="tp" style="left:387px;width:54.3px">Tempo: 89.9</div><div class="tp" style="left:460.5px;width:31.3px">Tempo</div><div class="tp" style="left:499.5px;width:54.3px">Tempo: 88.0</div><div class="tp" style="left:689px;width:54.3px">Tempo: 88.9</div><div class="tp" style="left:801.5px;width:54.3px">Tempo: 88.0</div></div>
<div class="al" style="left:12.4px;top:292.7px;width:32.5px;background:#457e9c;color:#dcdcd4"><span class="sx" style="transform:scaleX(0.915)">Drums</span></div>
<div style="position:absolute;left:175px;top:343px;width:796px;height:13px;overflow:hidden"><div class="tp" style="left:238px;width:54.3px">Tempo: 89.9</div><div class="tp" style="left:311.5px;width:31.3px">Tempo</div><div class="tp" style="left:350.5px;width:54.3px">Tempo: 88.0</div><div class="tp" style="left:540px;width:54.3px">Tempo: 88.9</div><div class="tp" style="left:652.5px;width:54.3px">Tempo: 88.0</div></div>
<div class="al" style="left:165.2px;top:356.7px;width:24.5px;background:#8fb9d0;color:#3b4a6c"><span class="sx" style="transform:scaleX(0.88)">Bass</span></div>
<div style="position:absolute;left:174px;top:407px;width:637px;height:13px;overflow:hidden"><div class="tp" style="left:239px;width:54.3px">Tempo: 89.9</div><div class="tp" style="left:312.5px;width:31.3px">Tempo</div><div class="tp" style="left:351.5px;width:54.3px">Tempo: 88.0</div><div class="tp" style="left:541px;width:54.3px">Tempo: 88.9</div></div>
<div class="al" style="left:165px;top:420.7px;width:37px;background:#fba87b;color:#4d3c48"><span class="sx" style="transform:scaleX(0.96)">Guitars</span></div>
<div style="position:absolute;left:813px;top:407px;width:157px;height:13px;overflow:hidden"><div class="tp" style="left:14.5px;width:54.3px">Tempo: 88.0</div></div>
<div class="al" style="left:814.3px;top:420.7px;width:37px;background:#fba87b;color:#4d3c48"><span class="sx" style="transform:scaleX(0.96)">Guitars</span></div>
<div style="position:absolute;left:0px;top:471px;width:415px;height:13px;overflow:hidden"></div>
<div class="al" style="left:-3.5px;top:483.7px;width:55px;background:#c48693;color:#f4e4e8"><span class="sx" style="transform:scaleX(0.985)">Keyboards</span></div>
<div style="position:absolute;left:418px;top:471px;width:103.5px;height:13px;overflow:hidden"><div class="tp" style="left:68.5px;width:31.3px">Tempo</div></div>
<div class="al" style="left:418px;top:483.7px;width:55px;background:#c48693;color:#f4e4e8"><span class="sx" style="transform:scaleX(0.985)">Keyboards</span></div>
<div style="position:absolute;left:523px;top:471px;width:268.5px;height:13px;overflow:hidden"><div class="tp" style="left:2.5px;width:54.3px">Tempo: 88.0</div><div class="tp" style="left:192px;width:54.3px">Tempo: 88.9</div></div>
<div class="al" style="left:523.5px;top:483.7px;width:55px;background:#c48693;color:#f4e4e8"><span class="sx" style="transform:scaleX(0.985)">Keyboards</span></div>
<div style="position:absolute;left:793.5px;top:471px;width:58.5px;height:13px;overflow:hidden"><div class="tp" style="left:34px;width:54.3px">Tempo: 88.0</div></div>
<div class="al" style="left:794.5px;top:483.7px;width:55px;background:#c48693;color:#f4e4e8"><span class="sx" style="transform:scaleX(0.985)">Keyboards</span></div>
<div style="position:absolute;left:854px;top:471px;width:150.5px;height:13px;overflow:hidden"></div>
<div class="al" style="left:855px;top:483.7px;width:55px;background:#c48693;color:#f4e4e8"><span class="sx" style="transform:scaleX(0.985)">Keyboards</span></div>
<svg style="position:absolute;left:0px;top:0px;overflow:hidden" width="1262" height="582" viewBox="0 0 1262 582"><path d="M11.6,332 C11.3,306 14,293 24.5,277.5" fill="none" stroke="#0a1ef0" stroke-width="1.2"/><path d="M11,282.5 L16.5,277" stroke="#e8e8e8" stroke-width="0.9"/><polygon points="11.3,332.5 11.3,337.7 16.5,337.7" fill="#ffffff" stroke="#111" stroke-width="0.5"/><path d="M988.5,277 L994,282.5" stroke="#e8e8e8" stroke-width="0.9"/><path d="M164.6,396 C164.3,370 167,357 173.5,341.5" fill="none" stroke="#0a1ef0" stroke-width="1.2"/><path d="M164,346.5 L169.5,341" stroke="#e8e8e8" stroke-width="0.9"/><polygon points="164.3,396.5 164.3,401.7 169.5,401.7" fill="#ffffff" stroke="#111" stroke-width="0.5"/><path d="M980.5,341 L986,346.5" stroke="#e8e8e8" stroke-width="0.9"/><path d="M164.6,460 C164.3,434 167,421 172.5,405.5" fill="none" stroke="#0a1ef0" stroke-width="1.2"/><path d="M164,410.5 L169.5,405" stroke="#e8e8e8" stroke-width="0.9"/><polygon points="164.3,460.5 164.3,465.7 169.5,465.7" fill="#ffffff" stroke="#111" stroke-width="0.5"/><path d="M973.5,405 L979,410.5" stroke="#e8e8e8" stroke-width="0.9"/><rect x="813" y="420.5" width="157" height="1.4" fill="#1420e0"/><path d="M883,421.2 h15 l-2.5,3 h-10 z" fill="#1420e0" stroke="#c8d0e8" stroke-width="0.5"/><rect x="418" y="498.6" width="103.5" height="1.4" fill="#1420e0"/><path d="M462.5,499.3 h15 l-2.5,3 h-10 z" fill="#1420e0" stroke="#c8d0e8" stroke-width="0.5"/><rect x="793.5" y="477.6" width="58.5" height="1.4" fill="#1420e0"/><path d="M815,478.3 h15 l-2.5,3 h-10 z" fill="#1420e0" stroke="#c8d0e8" stroke-width="0.5"/><text x="957.7" y="334.8" font-family="Liberation Sans, sans-serif" font-size="19" letter-spacing="-0.3" fill="#ffffff" stroke="#2a2a2a" stroke-width="2.1" stroke-linejoin="round" paint-order="stroke">fx</text><circle cx="980.3" cy="328" r="1.5" fill="none" stroke="#2a2a2a" stroke-width="2"/><circle cx="980.3" cy="328" r="1.5" fill="none" stroke="#f6f6f6" stroke-width="1"/><circle cx="985.15" cy="328" r="1.5" fill="none" stroke="#2a2a2a" stroke-width="2"/><circle cx="985.15" cy="328" r="1.5" fill="none" stroke="#f6f6f6" stroke-width="1"/><circle cx="990" cy="328" r="1.5" fill="none" stroke="#2a2a2a" stroke-width="2"/><circle cx="990" cy="328" r="1.5" fill="none" stroke="#f6f6f6" stroke-width="1"/><text x="949.7" y="398.8" font-family="Liberation Sans, sans-serif" font-size="19" letter-spacing="-0.3" fill="#ffffff" stroke="#2a2a2a" stroke-width="2.1" stroke-linejoin="round" paint-order="stroke">fx</text><circle cx="972.3" cy="392" r="1.5" fill="none" stroke="#2a2a2a" stroke-width="2"/><circle cx="972.3" cy="392" r="1.5" fill="none" stroke="#f6f6f6" stroke-width="1"/><circle cx="977.15" cy="392" r="1.5" fill="none" stroke="#2a2a2a" stroke-width="2"/><circle cx="977.15" cy="392" r="1.5" fill="none" stroke="#f6f6f6" stroke-width="1"/><circle cx="982" cy="392" r="1.5" fill="none" stroke="#2a2a2a" stroke-width="2"/><circle cx="982" cy="392" r="1.5" fill="none" stroke="#f6f6f6" stroke-width="1"/><text x="775.2" y="462.8" font-family="Liberation Sans, sans-serif" font-size="19" letter-spacing="-0.3" fill="#ffffff" stroke="#2a2a2a" stroke-width="2.1" stroke-linejoin="round" paint-order="stroke">fx</text><circle cx="797.8" cy="456" r="1.5" fill="none" stroke="#2a2a2a" stroke-width="2"/><circle cx="797.8" cy="456" r="1.5" fill="none" stroke="#f6f6f6" stroke-width="1"/><circle cx="802.65" cy="456" r="1.5" fill="none" stroke="#2a2a2a" stroke-width="2"/><circle cx="802.65" cy="456" r="1.5" fill="none" stroke="#f6f6f6" stroke-width="1"/><circle cx="807.5" cy="456" r="1.5" fill="none" stroke="#2a2a2a" stroke-width="2"/><circle cx="807.5" cy="456" r="1.5" fill="none" stroke="#f6f6f6" stroke-width="1"/><text x="942.2" y="462.8" font-family="Liberation Sans, sans-serif" font-size="19" letter-spacing="-0.3" fill="#ffffff" stroke="#2a2a2a" stroke-width="2.1" stroke-linejoin="round" paint-order="stroke">fx</text><circle cx="964.8" cy="456" r="1.5" fill="none" stroke="#2a2a2a" stroke-width="2"/><circle cx="964.8" cy="456" r="1.5" fill="none" stroke="#f6f6f6" stroke-width="1"/><circle cx="969.65" cy="456" r="1.5" fill="none" stroke="#2a2a2a" stroke-width="2"/><circle cx="969.65" cy="456" r="1.5" fill="none" stroke="#f6f6f6" stroke-width="1"/><circle cx="974.5" cy="456" r="1.5" fill="none" stroke="#2a2a2a" stroke-width="2"/><circle cx="974.5" cy="456" r="1.5" fill="none" stroke="#f6f6f6" stroke-width="1"/><rect x="377" y="508" width="38" height="20" fill="#c48693"/><text x="379.7" y="524.8" font-family="Liberation Sans, sans-serif" font-size="19" letter-spacing="-0.3" fill="#ffffff" stroke="#2a2a2a" stroke-width="2.1" stroke-linejoin="round" paint-order="stroke">fx</text><circle cx="402.3" cy="518" r="1.5" fill="none" stroke="#2a2a2a" stroke-width="2"/><circle cx="402.3" cy="518" r="1.5" fill="none" stroke="#f6f6f6" stroke-width="1"/><circle cx="407.15" cy="518" r="1.5" fill="none" stroke="#2a2a2a" stroke-width="2"/><circle cx="407.15" cy="518" r="1.5" fill="none" stroke="#f6f6f6" stroke-width="1"/><circle cx="412" cy="518" r="1.5" fill="none" stroke="#2a2a2a" stroke-width="2"/><circle cx="412" cy="518" r="1.5" fill="none" stroke="#f6f6f6" stroke-width="1"/><rect x="483.5" y="508" width="38" height="20" fill="#c48693"/><text x="485.7" y="524.8" font-family="Liberation Sans, sans-serif" font-size="19" letter-spacing="-0.3" fill="#ffffff" stroke="#2a2a2a" stroke-width="2.1" stroke-linejoin="round" paint-order="stroke">fx</text><circle cx="508.3" cy="518" r="1.5" fill="none" stroke="#2a2a2a" stroke-width="2"/><circle cx="508.3" cy="518" r="1.5" fill="none" stroke="#f6f6f6" stroke-width="1"/><circle cx="513.15" cy="518" r="1.5" fill="none" stroke="#2a2a2a" stroke-width="2"/><circle cx="513.15" cy="518" r="1.5" fill="none" stroke="#f6f6f6" stroke-width="1"/><circle cx="518" cy="518" r="1.5" fill="none" stroke="#2a2a2a" stroke-width="2"/><circle cx="518" cy="518" r="1.5" fill="none" stroke="#f6f6f6" stroke-width="1"/><text x="755.7" y="524.8" font-family="Liberation Sans, sans-serif" font-size="19" letter-spacing="-0.3" fill="#ffffff" stroke="#2a2a2a" stroke-width="2.1" stroke-linejoin="round" paint-order="stroke">fx</text><circle cx="778.3" cy="518" r="1.5" fill="none" stroke="#2a2a2a" stroke-width="2"/><circle cx="778.3" cy="518" r="1.5" fill="none" stroke="#f6f6f6" stroke-width="1"/><circle cx="783.15" cy="518" r="1.5" fill="none" stroke="#2a2a2a" stroke-width="2"/><circle cx="783.15" cy="518" r="1.5" fill="none" stroke="#f6f6f6" stroke-width="1"/><circle cx="788" cy="518" r="1.5" fill="none" stroke="#2a2a2a" stroke-width="2"/><circle cx="788" cy="518" r="1.5" fill="none" stroke="#f6f6f6" stroke-width="1"/><text x="816.2" y="524.8" font-family="Liberation Sans, sans-serif" font-size="19" letter-spacing="-0.3" fill="#ffffff" stroke="#2a2a2a" stroke-width="2.1" stroke-linejoin="round" paint-order="stroke">fx</text><circle cx="838.8" cy="518" r="1.5" fill="none" stroke="#2a2a2a" stroke-width="2"/><circle cx="838.8" cy="518" r="1.5" fill="none" stroke="#f6f6f6" stroke-width="1"/><circle cx="843.65" cy="518" r="1.5" fill="none" stroke="#2a2a2a" stroke-width="2"/><circle cx="843.65" cy="518" r="1.5" fill="none" stroke="#f6f6f6" stroke-width="1"/><circle cx="848.5" cy="518" r="1.5" fill="none" stroke="#2a2a2a" stroke-width="2"/><circle cx="848.5" cy="518" r="1.5" fill="none" stroke="#f6f6f6" stroke-width="1"/><text x="968.7" y="524.8" font-family="Liberation Sans, sans-serif" font-size="19" letter-spacing="-0.3" fill="#ffffff" stroke="#2a2a2a" stroke-width="2.1" stroke-linejoin="round" paint-order="stroke">fx</text><circle cx="991.3" cy="518" r="1.5" fill="none" stroke="#2a2a2a" stroke-width="2"/><circle cx="991.3" cy="518" r="1.5" fill="none" stroke="#f6f6f6" stroke-width="1"/><circle cx="996.15" cy="518" r="1.5" fill="none" stroke="#2a2a2a" stroke-width="2"/><circle cx="996.15" cy="518" r="1.5" fill="none" stroke="#f6f6f6" stroke-width="1"/><circle cx="1001" cy="518" r="1.5" fill="none" stroke="#2a2a2a" stroke-width="2"/><circle cx="1001" cy="518" r="1.5" fill="none" stroke="#f6f6f6" stroke-width="1"/><path d="M494.5,277 h15 l-2.5,3.2 h-10 z" fill="#1420e0" stroke="#b8c4e8" stroke-width="0.5"/><path d="M565.5,341 h15 l-2.5,3.2 h-10 z" fill="#1420e0" stroke="#b8c4e8" stroke-width="0.5"/><path d="M485,405 h15 l-2.5,3.2 h-10 z" fill="#1420e0" stroke="#b8c4e8" stroke-width="0.5"/><path d="M184,469 h15 l-2.5,3.2 h-10 z" fill="#1420e0" stroke="#b8c4e8" stroke-width="0.5"/><path d="M649.5,469 h15 l-2.5,3.2 h-10 z" fill="#1420e0" stroke="#b8c4e8" stroke-width="0.5"/><path d="M920.5,469 h15 l-2.5,3.2 h-10 z" fill="#1420e0" stroke="#b8c4e8" stroke-width="0.5"/><polygon points="807.5,405 816.5,405 812,410" fill="#f0921e" stroke="#222" stroke-width="0.5"/><rect x="811" y="405" width="2" height="62" fill="#0c0c0c"/><polygon points="813.2,461.5 813.2,466 818,466" fill="#ffffff" stroke="#111" stroke-width="0.5"/><rect x="415" y="469" width="3" height="60" fill="#0c0c0c"/><polygon points="412,469 421,469 416.5,474" fill="#f0921e" stroke="#222" stroke-width="0.5"/><polygon points="418,523.5 418,528 423,528" fill="#ffffff" stroke="#111" stroke-width="0.5"/><rect x="521.2" y="469" width="2" height="60" fill="#0c0c0c"/><polygon points="517.7,469 526.7,469 522.2,474" fill="#f0921e" stroke="#222" stroke-width="0.5"/><polygon points="523.7,523.5 523.7,528 528.7,528" fill="#ffffff" stroke="#111" stroke-width="0.5"/><rect x="791.5" y="469" width="2" height="60" fill="#0c0c0c"/><polygon points="788,469 797,469 792.5,474" fill="#f0921e" stroke="#222" stroke-width="0.5"/><polygon points="794,523.5 794,528 799,528" fill="#ffffff" stroke="#111" stroke-width="0.5"/><rect x="852" y="469" width="2" height="60" fill="#0c0c0c"/><polygon points="848.5,469 857.5,469 853,474" fill="#f0921e" stroke="#222" stroke-width="0.5"/><polygon points="854.5,523.5 854.5,528 859.5,528" fill="#ffffff" stroke="#111" stroke-width="0.5"/><polygon points="1000.5,469 1004.5,469 1004.5,473" fill="#f0921e"/></svg>
<div style="position:absolute;left:0px;top:371px;width:1261px;height:2px;background:#4a3eb6;"></div></div>
<div style="position:absolute;left:2px;top:30px;width:1257px;height:1px;background:#161616;"></div>
<div style="position:absolute;left:334px;top:23px;width:225px;height:8px;background:#343434;"></div>
<svg style="position:absolute;left:333px;top:23px;" width="10" height="9" viewBox="0 0 10 9"><polygon points="0.5,1 8,1 0.5,8.5" fill="#ffee00"/></svg>
<svg style="position:absolute;left:550px;top:23px;" width="10" height="9" viewBox="0 0 10 9"><polygon points="2,1 9.5,1 9.5,8.5" fill="#ffee00"/></svg>
<div style="position:absolute;left:9px;top:41px;width:1px;height:7px;background:#cfcfcf;"></div>
<div style="position:absolute;left:23px;top:45px;width:1px;height:3px;background:#c4c4c4;"></div>
<div style="position:absolute;left:37px;top:45px;width:1px;height:3px;background:#c4c4c4;"></div>
<div style="position:absolute;left:51px;top:45px;width:1px;height:3px;background:#c4c4c4;"></div>
<div style="position:absolute;left:65px;top:45px;width:1px;height:3px;background:#c4c4c4;"></div>
<div style="position:absolute;left:78px;top:45px;width:1px;height:3px;background:#c4c4c4;"></div>
<div style="position:absolute;left:92px;top:45px;width:1px;height:3px;background:#c4c4c4;"></div>
<div style="position:absolute;left:106px;top:45px;width:1px;height:3px;background:#c4c4c4;"></div>
<div style="position:absolute;left:120px;top:45px;width:1px;height:3px;background:#c4c4c4;"></div>
<div style="position:absolute;left:134px;top:45px;width:1px;height:3px;background:#c4c4c4;"></div>
<div style="position:absolute;left:147px;top:41px;width:1px;height:7px;background:#cfcfcf;"></div>
<div style="position:absolute;left:162px;top:45px;width:1px;height:3px;background:#c4c4c4;"></div>
<div style="position:absolute;left:176px;top:45px;width:1px;height:3px;background:#c4c4c4;"></div>
<div style="position:absolute;left:189px;top:45px;width:1px;height:3px;background:#c4c4c4;"></div>
<div style="position:absolute;left:203px;top:45px;width:1px;height:3px;background:#c4c4c4;"></div>
<div style="position:absolute;left:217px;top:45px;width:1px;height:3px;background:#c4c4c4;"></div>
<div style="position:absolute;left:231px;top:45px;width:1px;height:3px;background:#c4c4c4;"></div>
<div style="position:absolute;left:245px;top:45px;width:1px;height:3px;background:#c4c4c4;"></div>
<div style="position:absolute;left:259px;top:45px;width:1px;height:3px;background:#c4c4c4;"></div>
<div style="position:absolute;left:273px;top:45px;width:1px;height:3px;background:#c4c4c4;"></div>
<div style="position:absolute;left:286px;top:41px;width:1px;height:7px;background:#cfcfcf;"></div>
<div style="position:absolute;left:300px;top:45px;width:1px;height:3px;background:#c4c4c4;"></div>
<div style="position:absolute;left:314px;top:45px;width:1px;height:3px;background:#c4c4c4;"></div>
<div style="position:absolute;left:328px;top:45px;width:1px;height:3px;background:#c4c4c4;"></div>
<div style="position:absolute;left:342px;top:45px;width:1px;height:3px;background:#c4c4c4;"></div>
<div style="position:absolute;left:356px;top:45px;width:1px;height:3px;background:#c4c4c4;"></div>
<div style="position:absolute;left:370px;top:45px;width:1px;height:3px;background:#c4c4c4;"></div>
<div style="position:absolute;left:384px;top:45px;width:1px;height:3px;background:#c4c4c4;"></div>
<div style="position:absolute;left:398px;top:45px;width:1px;height:3px;background:#c4c4c4;"></div>
<div style="position:absolute;left:411px;top:45px;width:1px;height:3px;background:#c4c4c4;"></div>
<div style="position:absolute;left:425px;top:41px;width:1px;height:7px;background:#cfcfcf;"></div>
<div style="position:absolute;left:439px;top:45px;width:1px;height:3px;background:#c4c4c4;"></div>
<div style="position:absolute;left:453px;top:45px;width:1px;height:3px;background:#c4c4c4;"></div>
<div style="position:absolute;left:467px;top:45px;width:1px;height:3px;background:#c4c4c4;"></div>
<div style="position:absolute;left:481px;top:45px;width:1px;height:3px;background:#c4c4c4;"></div>
<div style="position:absolute;left:495px;top:45px;width:1px;height:3px;background:#c4c4c4;"></div>
<div style="position:absolute;left:508px;top:45px;width:1px;height:3px;background:#c4c4c4;"></div>
<div style="position:absolute;left:522px;top:45px;width:1px;height:3px;background:#c4c4c4;"></div>
<div style="position:absolute;left:536px;top:45px;width:1px;height:3px;background:#c4c4c4;"></div>
<div style="position:absolute;left:550px;top:45px;width:1px;height:3px;background:#c4c4c4;"></div>
<div style="position:absolute;left:563px;top:41px;width:1px;height:7px;background:#cfcfcf;"></div>
<div style="position:absolute;left:578px;top:45px;width:1px;height:3px;background:#c4c4c4;"></div>
<div style="position:absolute;left:592px;top:45px;width:1px;height:3px;background:#c4c4c4;"></div>
<div style="position:absolute;left:606px;top:45px;width:1px;height:3px;background:#c4c4c4;"></div>
<div style="position:absolute;left:619px;top:45px;width:1px;height:3px;background:#c4c4c4;"></div>
<div style="position:absolute;left:633px;top:45px;width:1px;height:3px;background:#c4c4c4;"></div>
<div style="position:absolute;left:647px;top:45px;width:1px;height:3px;background:#c4c4c4;"></div>
<div style="position:absolute;left:661px;top:45px;width:1px;height:3px;background:#c4c4c4;"></div>
<div style="position:absolute;left:675px;top:45px;width:1px;height:3px;background:#c4c4c4;"></div>
<div style="position:absolute;left:689px;top:45px;width:1px;height:3px;background:#c4c4c4;"></div>
<div style="position:absolute;left:702px;top:41px;width:1px;height:7px;background:#cfcfcf;"></div>
<div style="position:absolute;left:717px;top:45px;width:1px;height:3px;background:#c4c4c4;"></div>
<div style="position:absolute;left:730px;top:45px;width:1px;height:3px;background:#c4c4c4;"></div>
<div style="position:absolute;left:744px;top:45px;width:1px;height:3px;background:#c4c4c4;"></div>
<div style="position:absolute;left:758px;top:45px;width:1px;height:3px;background:#c4c4c4;"></div>
<div style="position:absolute;left:772px;top:45px;width:1px;height:3px;background:#c4c4c4;"></div>
<div style="position:absolute;left:786px;top:45px;width:1px;height:3px;background:#c4c4c4;"></div>
<div style="position:absolute;left:800px;top:45px;width:1px;height:3px;background:#c4c4c4;"></div>
<div style="position:absolute;left:814px;top:45px;width:1px;height:3px;background:#c4c4c4;"></div>
<div style="position:absolute;left:827px;top:45px;width:1px;height:3px;background:#c4c4c4;"></div>
<div style="position:absolute;left:841px;top:41px;width:1px;height:7px;background:#cfcfcf;"></div>
<div style="position:absolute;left:855px;top:45px;width:1px;height:3px;background:#c4c4c4;"></div>
<div style="position:absolute;left:869px;top:45px;width:1px;height:3px;background:#c4c4c4;"></div>
<div style="position:absolute;left:883px;top:45px;width:1px;height:3px;background:#c4c4c4;"></div>
<div style="position:absolute;left:897px;top:45px;width:1px;height:3px;background:#c4c4c4;"></div>
<div style="position:absolute;left:911px;top:45px;width:1px;height:3px;background:#c4c4c4;"></div>
<div style="position:absolute;left:925px;top:45px;width:1px;height:3px;background:#c4c4c4;"></div>
<div style="position:absolute;left:938px;top:45px;width:1px;height:3px;background:#c4c4c4;"></div>
<div style="position:absolute;left:952px;top:45px;width:1px;height:3px;background:#c4c4c4;"></div>
<div style="position:absolute;left:966px;top:45px;width:1px;height:3px;background:#c4c4c4;"></div>
<div style="position:absolute;left:980px;top:41px;width:1px;height:7px;background:#cfcfcf;"></div>
<div style="position:absolute;left:994px;top:45px;width:1px;height:3px;background:#c4c4c4;"></div>
<div style="position:absolute;left:1008px;top:45px;width:1px;height:3px;background:#c4c4c4;"></div>
<div style="position:absolute;left:1022px;top:45px;width:1px;height:3px;background:#c4c4c4;"></div>
<div style="position:absolute;left:1036px;top:45px;width:1px;height:3px;background:#c4c4c4;"></div>
<div style="position:absolute;left:1049px;top:45px;width:1px;height:3px;background:#c4c4c4;"></div>
<div style="position:absolute;left:1063px;top:45px;width:1px;height:3px;background:#c4c4c4;"></div>
<div style="position:absolute;left:1077px;top:45px;width:1px;height:3px;background:#c4c4c4;"></div>
<div style="position:absolute;left:1091px;top:45px;width:1px;height:3px;background:#c4c4c4;"></div>
<div style="position:absolute;left:1105px;top:45px;width:1px;height:3px;background:#c4c4c4;"></div>
<div style="position:absolute;left:1118px;top:41px;width:1px;height:7px;background:#cfcfcf;"></div>
<div style="position:absolute;left:1133px;top:45px;width:1px;height:3px;background:#c4c4c4;"></div>
<div style="position:absolute;left:1146px;top:45px;width:1px;height:3px;background:#c4c4c4;"></div>
<div style="position:absolute;left:1160px;top:45px;width:1px;height:3px;background:#c4c4c4;"></div>
<div style="position:absolute;left:1174px;top:45px;width:1px;height:3px;background:#c4c4c4;"></div>
<div style="position:absolute;left:1188px;top:45px;width:1px;height:3px;background:#c4c4c4;"></div>
<div style="position:absolute;left:1202px;top:45px;width:1px;height:3px;background:#c4c4c4;"></div>
<div style="position:absolute;left:1216px;top:45px;width:1px;height:3px;background:#c4c4c4;"></div>
<div style="position:absolute;left:1230px;top:45px;width:1px;height:3px;background:#c4c4c4;"></div>
<div style="position:absolute;left:1244px;top:45px;width:1px;height:3px;background:#c4c4c4;"></div>
<div style="position:absolute;left:1257px;top:41px;width:1px;height:7px;background:#cfcfcf;"></div>
<div class="rl" style="left:11px;top:34px">00:00:10:00</div>
<div class="rl" style="left:149px;top:34px">00:00:20:00</div>
<div class="rl" style="left:288px;top:34px">00:00:30:00</div>
<div class="rl" style="left:427px;top:34px">00:00:40:00</div>
<div class="rl" style="left:565px;top:34px">00:00:50:00</div>
<div class="rl" style="left:704px;top:34px">00:01:00:00</div>
<div class="rl" style="left:843px;top:34px">00:01:10:00</div>
<div class="rl" style="left:982px;top:34px">00:01:20:00</div>
<div class="rl" style="left:1120px;top:34px">00:01:30:00</div>
<div style="position:absolute;left:333px;top:31px;width:1px;height:499px;background:#060690;"></div>
<div style="position:absolute;left:559px;top:48px;width:1px;height:483px;background:#ffffff;"></div>
<svg style="position:absolute;left:554px;top:32px;" width="12" height="17" viewBox="0 0 12 17"><path d="M1.2,1.2 H10 V10.2 L5.6,15 L1.2,10.2 Z" fill="#f4f4f4" stroke="#1a1a1a" stroke-width="0.6"/><rect x="4" y="4" width="1" height="5" fill="#111"/><rect x="6.6" y="4" width="1" height="5" fill="#111"/></svg>
<div style="position:absolute;left:1262px;top:1px;width:18px;height:530px;background:#2b2b2b;"></div>
<div style="position:absolute;left:1262px;top:1px;width:18px;height:17px;background:#3a3a3a;"></div>
<svg style="position:absolute;left:1265px;top:3px;" width="12" height="13" viewBox="0 0 12 13"><path d="M2,2.1 H8.4 V6.4 H4.2 L2,8.8 Z" fill="none" stroke="#f2f2f2" stroke-width="2" stroke-linejoin="miter"/></svg>
<div style="position:absolute;left:1262px;top:36px;width:18px;height:311px;background:#484848;"></div>
<svg style="position:absolute;left:1262px;top:20px;" width="18" height="12" viewBox="0 0 18 12"><polygon points="3.8,8 11.4,8 7.6,3.8" fill="#f0f0f0"/></svg>
<div style="position:absolute;left:1266px;top:190px;width:10px;height:1px;background:#2e2e2e;"></div>
<div style="position:absolute;left:1266px;top:193px;width:10px;height:1px;background:#2e2e2e;"></div>
<svg style="position:absolute;left:1262px;top:476px;" width="18" height="12" viewBox="0 0 18 12"><polygon points="4,3.8 11.8,3.8 7.9,8" fill="#f0f0f0"/></svg>
<div style="position:absolute;left:1262px;top:491px;width:18px;height:40px;background:#3a3a3a;"></div>
<svg style="position:absolute;left:1262px;top:491px;" width="18" height="40" viewBox="0 0 18 40"><path d="M5,8.2 H11 M8,5.2 V11.2 M5,31 H11" stroke="#f4f4f4" stroke-width="1.8" fill="none"/></svg>
<div style="position:absolute;left:0px;top:531px;width:1280px;height:17px;background:#2b2b2b;"></div>
<div style="position:absolute;left:111px;top:531px;width:885px;height:17px;background:#484848;"></div>
<div style="position:absolute;left:117.5px;top:535px;width:1.5px;height:10px;background:#2a2a2a;"></div>
<div style="position:absolute;left:988.5px;top:535px;width:1.5px;height:10px;background:#2a2a2a;"></div>
<svg style="position:absolute;left:3px;top:533px;" width="12" height="13" viewBox="0 0 12 13"><polygon points="3.6,6.6 8.2,2.8 8.2,10.4" fill="#f0f0f0"/></svg>
<svg style="position:absolute;left:1207px;top:533px;" width="12" height="13" viewBox="0 0 12 13"><polygon points="8.6,6.6 4,2.4 4,10.8" fill="#f0f0f0"/></svg>
<div style="position:absolute;left:1222px;top:531px;width:58px;height:17px;background:#3a3a3a;"></div>
<svg style="position:absolute;left:1222px;top:531px;" width="58" height="17" viewBox="0 0 58 17"><path d="M5,9 H11 M8,6 V12 M28,9 H34" stroke="#f4f4f4" stroke-width="1.8" fill="none"/><circle cx="47" cy="8.3" r="3.3" fill="none" stroke="#f4f4f4" stroke-width="1.1"/><path d="M49.5,10.8 L52,13.3" stroke="#f4f4f4" stroke-width="1.6"/></svg>
<div style="position:absolute;left:1278px;top:0px;width:2px;height:549px;background:#0a0a0a;"></div>
<svg style="position:absolute;left:0px;top:0px;" width="1000" height="582" viewBox="0 0 1000 582"><defs><pattern id="hz" width="2" height="2" patternUnits="userSpaceOnUse" patternTransform="rotate(-45)"><rect width="2" height="2" fill="#3a2422"/><rect width="2" height="1.1" fill="#f0745a"/></pattern></defs><circle cx="15" cy="565" r="6" fill="#f4755c"/><path d="M43.2,560.9 h1 a3.9,3.9 0 0 1 0,7.8 h-6" fill="none" stroke="#f0f0f0" stroke-width="1.2"/><path d="M39.8,560.9 h-1.4 a3.9,3.9 0 0 0 -2.4,7" fill="none" stroke="#f0f0f0" stroke-width="1.2"/><path d="M41.2,566 l-3.2,2.7 l3.2,2.7" fill="none" stroke="#f0f0f0" stroke-width="1.2"/><path d="M41.5,559 v3.6" stroke="#f0f0f0" stroke-width="1.2"/><rect x="61.5" y="560" width="1.3" height="10.5" fill="#f0f0f0"/><polygon points="64.5,560 64.5,570.5 72,565.2" fill="#f0f0f0"/><polygon points="88,558.5 88,571.5 99,565" fill="#f0f0f0"/><rect x="113" y="559" width="4.3" height="12" fill="#f0f0f0"/><rect x="121" y="559" width="4.3" height="12" fill="#f0f0f0"/><rect x="139" y="559" width="12" height="12" fill="#f0f0f0"/><rect x="165.5" y="560" width="1.4" height="10.5" fill="#f0f0f0"/><polygon points="175.5,560 175.5,570.5 168,565.2" fill="#f0f0f0"/><rect x="201" y="560" width="1.4" height="10.5" fill="#f0f0f0"/><polygon points="192.5,560 192.5,570.5 200,565.2" fill="#f0f0f0"/><polygon points="225,560 225,570.5 217.5,565.2" fill="#f0f0f0"/><rect x="226" y="560" width="1.1" height="10.5" fill="#f0f0f0"/><rect x="228" y="560" width="1.1" height="10.5" fill="#f0f0f0"/><polygon points="247,560 247,570.5 254.5,565.2" fill="#f0f0f0"/><rect x="244.9" y="560" width="1.1" height="10.5" fill="#f0f0f0"/><rect x="242.9" y="560" width="1.1" height="10.5" fill="#f0f0f0"/><rect x="266" y="556" width="1" height="18" fill="#474747"/><rect x="393" y="556" width="1" height="18" fill="#474747"/><rect x="583" y="556" width="1" height="18" fill="#474747"/><rect x="643" y="556" width="1" height="18" fill="#474747"/><rect x="796" y="556" width="1" height="18" fill="#474747"/><rect x="830" y="556" width="1" height="18" fill="#474747"/><rect x="272" y="556" width="22" height="18" fill="#0a6fd6"/><path d="M275.5,558.5 L291,564 L284.5,566.5 L281.5,572.5 Z" fill="#f4f4f4" stroke="#1a1a1a" stroke-width="0.7" stroke-linejoin="round"/><polygon points="300,563.5 306.6,563.5 303.3,567" fill="#f0f0f0"/><path d="M320,568 v-4.5 M322,561 h4" stroke="#f0f0f0" stroke-width="1.1" fill="none"/><rect x="317.8" y="568" width="4" height="4" fill="none" stroke="#f0f0f0" stroke-width="1.1"/><rect x="319" y="559.5" width="4" height="4" fill="none" stroke="#f0f0f0" stroke-width="1.1"/><rect x="326" y="558" width="4" height="4" fill="none" stroke="#f0f0f0" stroke-width="1.1"/><rect x="343.5" y="558.5" width="13" height="13" fill="none" stroke="#f0f0f0" stroke-width="1.2" stroke-dasharray="2.2,1.4"/><circle cx="375" cy="564" r="5.6" fill="none" stroke="#f0f0f0" stroke-width="1.2"/><path d="M379,568.5 L382.5,572" stroke="#f0f0f0" stroke-width="1.3"/><path d="M405,560 L415,570 M415,560 L405,570" stroke="#4c4c4c" stroke-width="1.3"/><rect x="429" y="559.5" width="14.5" height="10" rx="2" fill="url(#hz)"/><rect x="432.6" y="559.5" width="7" height="10" fill="#f0f0f0"/><rect x="431.8" y="557.5" width="1.2" height="14" fill="#f0f0f0"/><rect x="439.3" y="557.5" width="1.2" height="14" fill="#f0f0f0"/><rect x="454.5" y="559.5" width="8" height="10" rx="1.5" fill="url(#hz)"/><rect x="463" y="559.5" width="6" height="10" fill="#f0f0f0"/><rect x="462.2" y="557.5" width="1.2" height="14" fill="#f0f0f0"/><rect x="489" y="559.5" width="8" height="10" rx="1.5" fill="url(#hz)"/><rect x="481" y="559.5" width="6" height="10" fill="#f0f0f0"/><rect x="486.8" y="557.5" width="1.2" height="14" fill="#f0f0f0"/><rect x="506.5" y="560" width="5.5" height="9.5" fill="#f0f0f0"/><rect x="515.2" y="560" width="5.5" height="9.5" fill="#f0f0f0"/><rect x="513" y="557.5" width="1.2" height="14.5" fill="#f0f0f0"/><rect x="514.2" y="560" width="1" height="9.5" fill="#f0745a"/><rect x="533" y="560" width="14" height="9.5" fill="#4a4a4a"/><rect x="535.2" y="557.5" width="1.2" height="14.5" fill="#4a4a4a"/><rect x="543.6" y="557.5" width="1.2" height="14.5" fill="#4a4a4a"/><path d="M537,560.5 L543,569" stroke="#2a2a2a" stroke-width="1.2"/><rect x="561" y="564" width="10.5" height="8" fill="#4e4e4e"/><path d="M563.2,564 v-3 a3,3 0 0 1 6,0 v3" fill="none" stroke="#4e4e4e" stroke-width="1.4"/><path d="M595,559 h10.8 v8.2 h-6.3 l-4.5,4.2 z" fill="#fdbe3a"/><path d="M619,562 h6 v5 h-3.5 l-2.5,2.3 z" fill="#fdbe3a"/><path d="M633.5,562 h-6 v5 h3.5 l2.5,2.3 z" fill="#fdbe3a"/><rect x="649" y="556" width="22" height="18" fill="#0a6fd6"/><path d="M654,569 v-5 a6,6 0 0 1 12,0 v5 h-4 v-5 a2,2 0 0 0 -4,0 v5 z" fill="#f4755c" stroke="#1a1a1a" stroke-width="0.7"/><rect x="654" y="569" width="4" height="3" fill="#f4f4f4" stroke="#1a1a1a" stroke-width="0.6"/><rect x="662" y="569" width="4" height="3" fill="#f4f4f4" stroke="#1a1a1a" stroke-width="0.6"/><rect x="675" y="556" width="22" height="18" fill="#0a6fd6"/><path d="M678,557.5 L693.5,572 H678 Z" fill="#f4f4f4" stroke="#1a1a1a" stroke-width="0.8" stroke-linejoin="round"/><path d="M693.5,558 V572 L684.5,563.8 Z" fill="#f4f4f4" stroke="#1a1a1a" stroke-width="0.8" stroke-linejoin="round"/><rect x="705" y="558" width="1.6" height="13.5" fill="#f0f0f0"/><rect x="707.5" y="559.5" width="2.6" height="10" fill="#f0f0f0"/><rect x="711" y="560" width="8.5" height="7" fill="#6e8ef4"/><path d="M719.5,568.6 h-9 M713.6,565.6 l-3.2,3 l3.2,3" fill="none" stroke="#f0f0f0" stroke-width="1.2"/><polygon points="729,563.5 735.6,563.5 732.3,567" fill="#f0f0f0"/><rect x="742" y="556" width="22" height="18" fill="#0a6fd6"/><path d="M747.5,565 v-4.5 M749,559.5 h4" stroke="#f4f4f4" stroke-width="1"/><rect x="746" y="565" width="3" height="3" fill="#0a6fd6" stroke="#f4f4f4" stroke-width="1"/><rect x="746.3" y="558.3" width="3" height="3" fill="#0a6fd6" stroke="#f4f4f4" stroke-width="1"/><rect x="752.5" y="557.3" width="3" height="3" fill="#0a6fd6" stroke="#f4f4f4" stroke-width="1"/><rect x="754" y="566" width="7.5" height="6" fill="#f4f4f4" stroke="#1a1a1a" stroke-width="0.6"/><path d="M755.6,566 v-2 a2.1,2.1 0 0 1 4.2,0 v2" fill="none" stroke="#f4f4f4" stroke-width="1.2"/><rect x="771.5" y="558" width="5.5" height="4.5" fill="#f0f0f0"/><rect x="779.5" y="558.5" width="4.5" height="3.5" fill="none" stroke="#f0f0f0" stroke-width="1"/><path d="M776.5,564.5 h-3.5 v4 h3" fill="none" stroke="#f0f0f0" stroke-width="1"/><path d="M778,563.5 L785.5,566.5 L782.3,567.8 L781,571.2 Z" fill="#f0f0f0" stroke="#222" stroke-width="0.5"/><circle cx="811.5" cy="564.5" r="2.7" fill="#f4755c"/><circle cx="808.3" cy="569.5" r="2.7" fill="#6e8ef4"/><circle cx="814.7" cy="569.5" r="2.7" fill="#2ed85c"/><rect x="815" y="558" width="5.2" height="6" fill="#f0f0f0"/><rect x="816" y="559.3" width="3.2" height="1" fill="#222"/><rect x="840" y="558" width="10" height="9" fill="#4a4a4a"/><rect x="845" y="568" width="9" height="4" fill="#4a4a4a"/><path d="M848,563.5 h-4.5 M845.3,561.5 l-2,2 l2,2 M848,563.5 v3" stroke="#222" stroke-width="1" fill="none"/><rect x="866" y="558" width="9" height="3.5" fill="#4a4a4a"/><rect x="869" y="562.5" width="11" height="9.5" fill="#4a4a4a"/><path d="M871.5,565 v3 h5 M874.8,566 l2,2 l-2,2" stroke="#222" stroke-width="1" fill="none"/><rect x="892" y="558" width="9" height="3.5" fill="#4a4a4a"/><rect x="895" y="562.5" width="11" height="9.5" fill="#4a4a4a"/><path d="M897.5,567.3 h6 M900.5,564.3 v6" stroke="#222" stroke-width="1.1" fill="none"/></svg>
<div style="position:absolute;left:989px;top:549px;width:6px;height:33px;background:#252525;"></div>
<svg style="position:absolute;left:0px;top:0px;" width="1280" height="582" viewBox="0 0 1280 582"><path d="M1004.5,569.5 v-9.5 h12 v9.5 z" fill="none" stroke="#e8e8e8" stroke-width="1"/><polygon points="1004,559.5 1009.5,559.5 1004,565" fill="#fdbe3a"/><path d="M1099.5,569.5 v-9.5 h12 v9.5 z" fill="none" stroke="#e8e8e8" stroke-width="1"/><polygon points="1112,559.5 1106.5,559.5 1112,565" fill="#fdbe3a"/><path d="M1193,569.5 v-9.5 h12 v9.5 z" fill="none" stroke="#e8e8e8" stroke-width="1"/><polygon points="1192.5,559.5 1198,559.5 1192.5,565" fill="#fdbe3a"/><polygon points="1205.5,559.5 1200,559.5 1205.5,565" fill="#fdbe3a"/></svg>
<div class="tm" style="left:1024px;top:559px">00:00:33:09</div>
<div class="tm" style="left:1118px;top:559px">00:00:49:17</div>
<div class="tm" style="left:1212px;top:559px">00:00:16:08</div>
<div style="position:absolute;left:0px;top:21px;width:1260px;height:29px;border:2px solid #3c62e8;box-sizing:border-box"></div>
<div style="position:absolute;left:2px;top:548px;width:987px;height:34px;border:2px solid #3c62e8;box-sizing:border-box"></div>
<div style="position:absolute;left:995px;top:548px;width:286px;height:34px;border:2px solid #3c62e8;box-sizing:border-box"></div>
<div style="position:absolute;left:1260px;top:34px;width:45px;height:2px;background:#3c62e8;"></div>
<div style="position:absolute;left:1274px;top:509px;width:31px;height:2px;background:#3c62e8;"></div>
<div style="position:absolute;left:1274px;top:539px;width:31px;height:2px;background:#3c62e8;"></div>
<div style="position:absolute;left:1241px;top:542px;width:2px;height:86px;background:#3c62e8;"></div>
<div style="position:absolute;left:1137px;top:581px;width:2px;height:46px;background:#3c62e8;"></div>
<div style="position:absolute;left:494px;top:581px;width:2px;height:46px;background:#3c62e8;"></div>
<div class="an" style="left:1303.3px;top:25px">1</div>
<div class="an" style="left:1303.3px;top:499.7px">2</div>
<div class="an" style="left:1303.3px;top:529.6px">3</div>
<div class="an" style="left:1231.7px;top:625.7px">4</div>
<div class="an" style="left:1127.7px;top:625.7px">5</div>
<div class="an" style="left:484.7px;top:625.7px">6</div>
</body></html>
